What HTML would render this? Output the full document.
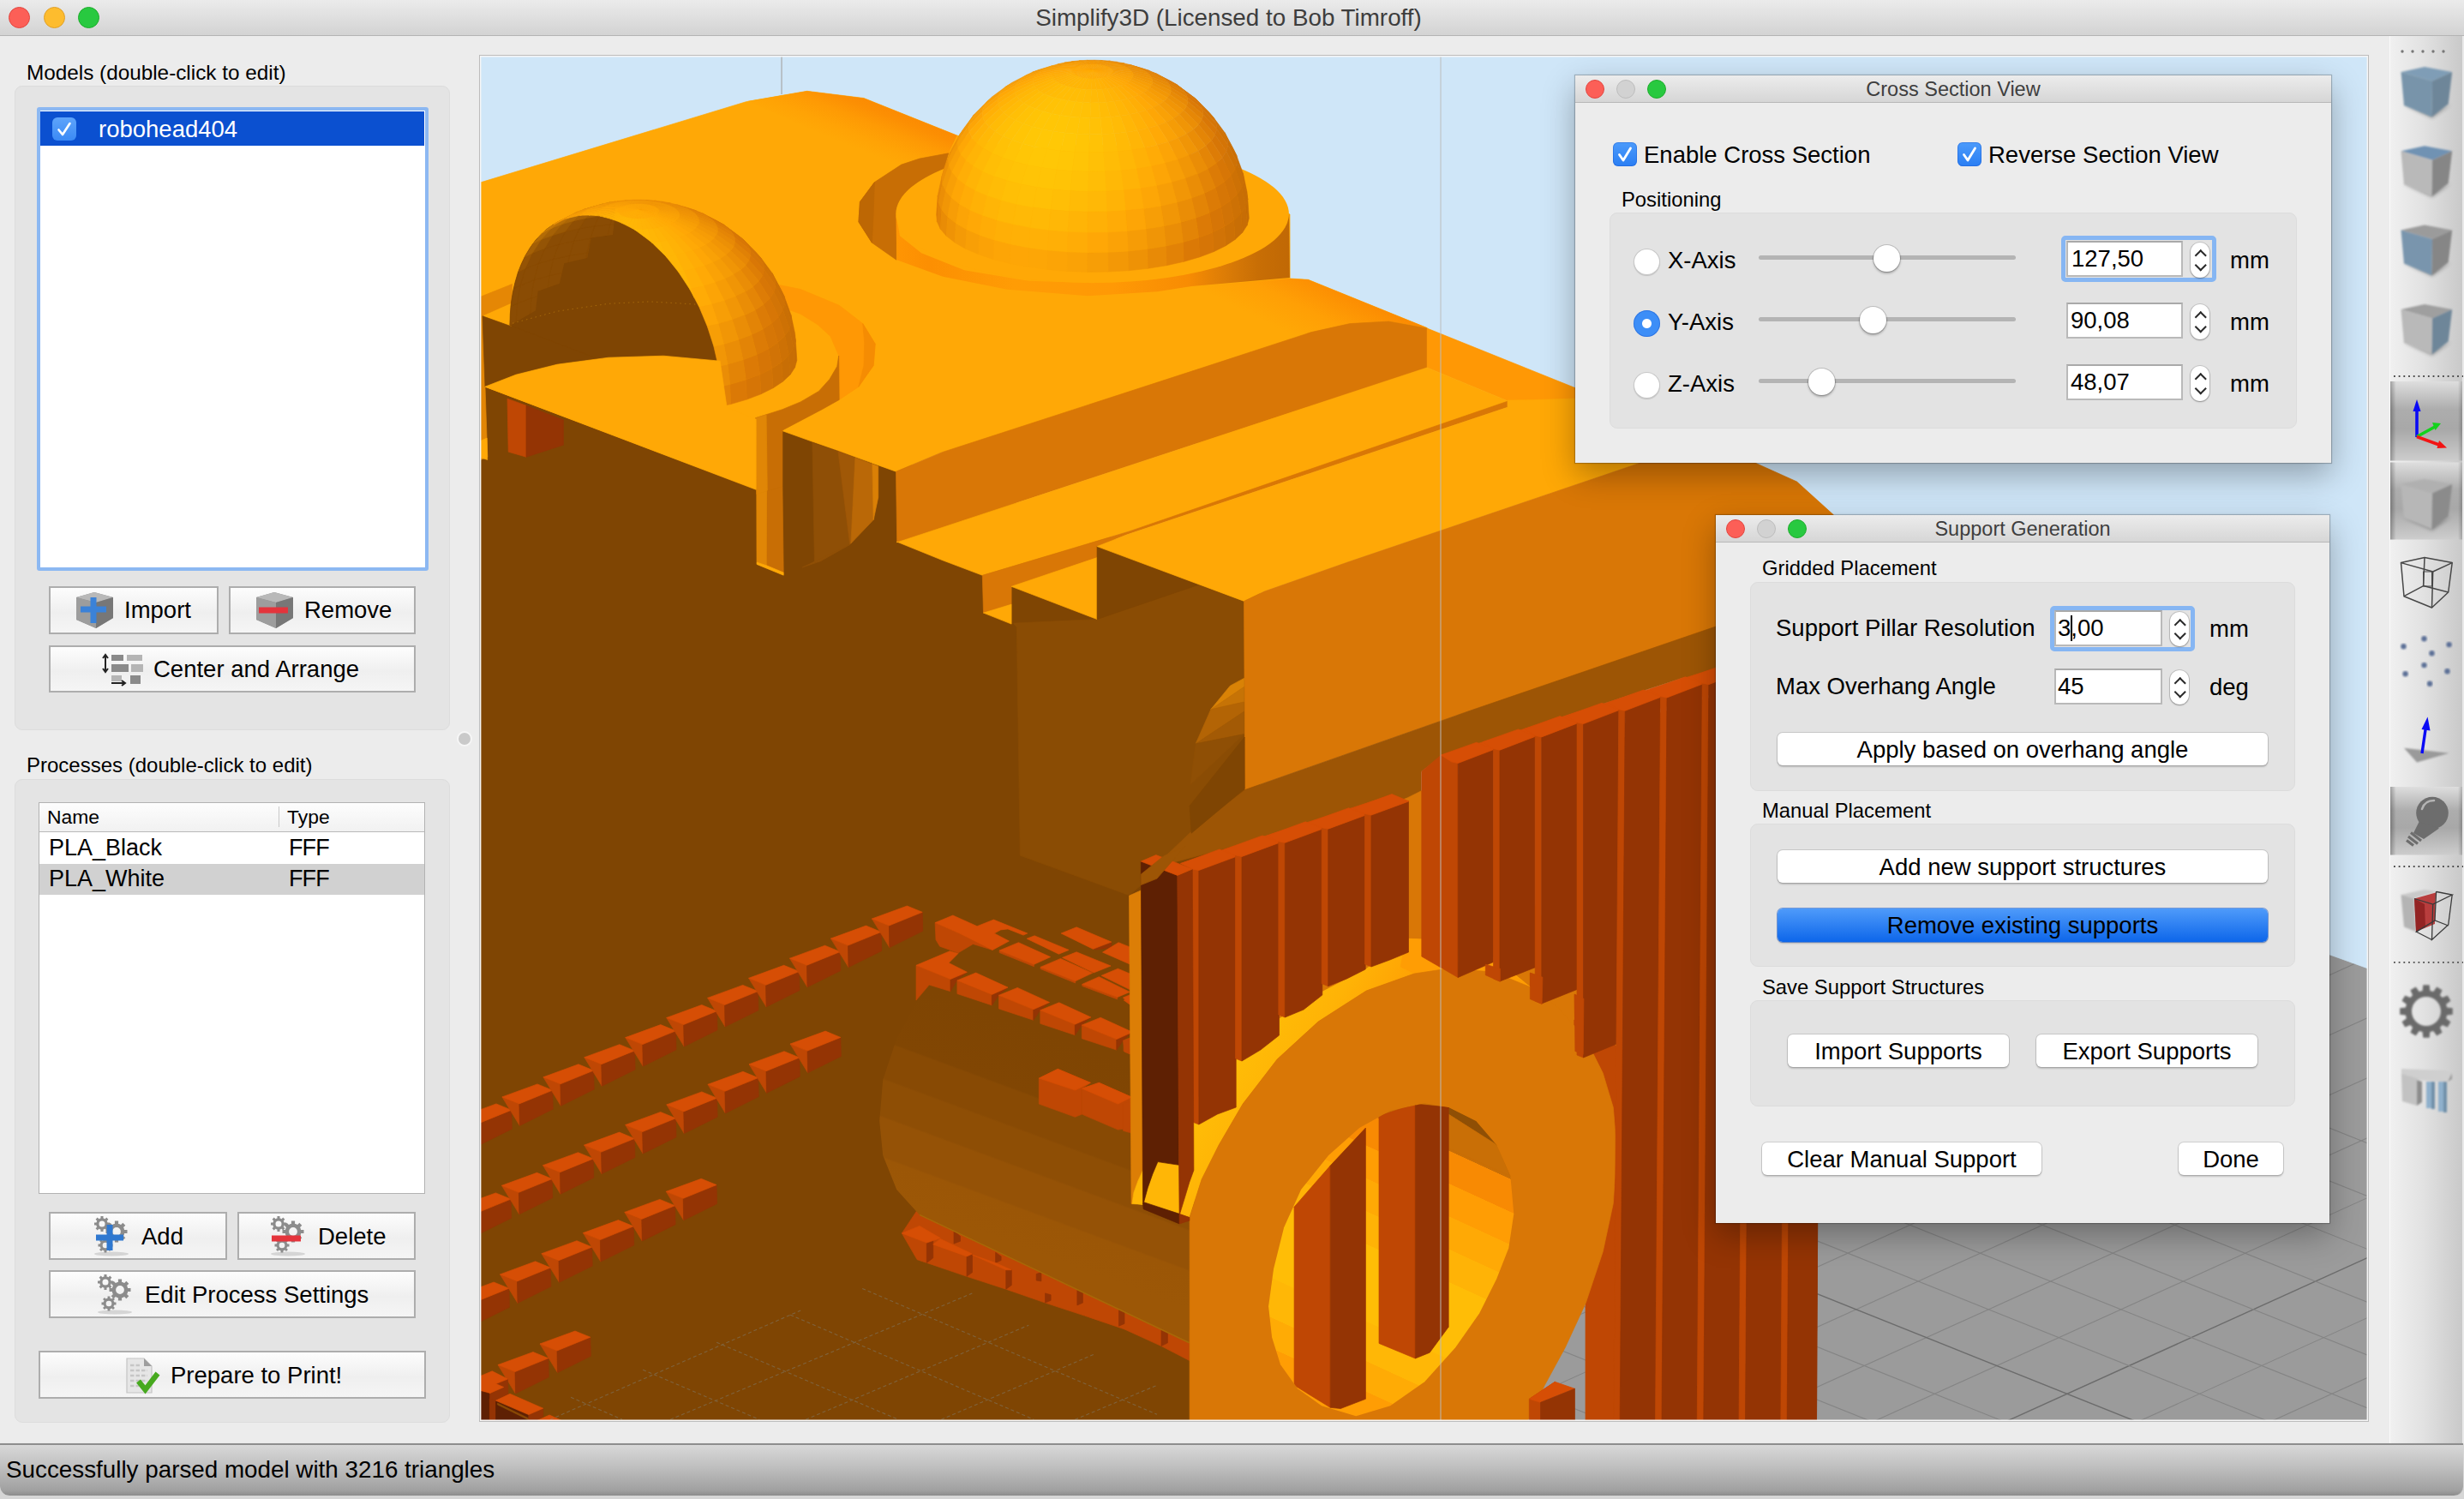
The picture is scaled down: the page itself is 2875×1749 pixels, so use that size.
<!DOCTYPE html>
<html lang="en">
<head>
<meta charset="utf-8">
<title>Simplify3D (Licensed to Bob Timroff)</title>
<style>
*{box-sizing:border-box;margin:0;padding:0}
html{width:2875px;height:1749px;overflow:hidden;background:#d6d6d6}
body{width:2875px;height:1745px;overflow:visible;background:#ececec;border-radius:0 0 11px 11px}
body{font-family:"Liberation Sans",sans-serif;color:#000;position:relative;font-size:27px}
.abs{position:absolute}
.t{position:absolute;white-space:nowrap;line-height:1}
#titlebar{position:absolute;left:0;top:0;width:2875px;height:42px;background:linear-gradient(#ebebeb,#d3d3d3);border-bottom:1px solid #b4b4b4}
.tl{position:absolute;border-radius:50%}
.tl.r{background:#fc5f57;border:1px solid #e2463f}
.tl.y{background:#fdbc2e;border:1px solid #e0a028}
.tl.g{background:#28c940;border:1px solid #1dad2b}
.tl.n{background:#d2d2d2;border:1px solid #bdbdbd}
.group{position:absolute;background:#e4e4e4;border-radius:9px;border:1px solid #dcdcdc}
.qbtn{position:absolute;border:2px solid #adadad;background:linear-gradient(#fdfdfd,#efefef 55%,#f5f5f5);font-size:27.5px;white-space:nowrap}
.qbtn svg{filter:blur(.7px);margin-top:-2.5px;margin-left:-1px}
.qbtn .lb{margin-top:-1.5px;margin-left:-1px}
.qbtn .lb{position:absolute;line-height:1}
.mbtn{position:absolute;background:#fff;border-radius:6px;box-shadow:0 0 0 1px rgba(0,0,0,.12),0 2px 2px rgba(0,0,0,.18);font-size:27.5px;text-align:center;white-space:nowrap}
.mbtn.blue{background:linear-gradient(#4f9bfa,#0d66ea);box-shadow:0 0 0 1px rgba(10,80,200,.5),0 2px 2px rgba(0,0,0,.18);color:#000}
.win{position:absolute;background:#ececec;box-shadow:0 0 1px 1px rgba(0,0,0,.22),0 14px 36px rgba(0,0,0,.30)}
.wtitle{position:absolute;left:0;top:0;right:0;height:32px;background:linear-gradient(#ececec,#d6d6d6);border-bottom:1px solid #b8b8b8;text-align:center;font-size:23.5px;color:#3e3e3e}
.field{position:absolute;background:#fff;border:2px solid #b9b9b9;border-top-color:#a9a9a9;font-size:27.5px}
.focus{position:absolute;border:5px solid #86b6f3;border-radius:5px}
.step{position:absolute;background:#fff;border-radius:11px;box-shadow:0 0 0 1px rgba(0,0,0,.13),0 1px 2px rgba(0,0,0,.28)}
.step:before,.step:after{content:'';position:absolute;left:6.5px;width:7.5px;height:7.5px;border-left:2.6px solid #2a2a2a;border-top:2.6px solid #2a2a2a}
.step:before{top:10px;transform:rotate(45deg)}
.step:after{bottom:10px;transform:rotate(225deg)}
.radio{position:absolute;width:31px;height:31px;border-radius:50%;background:#fff;box-shadow:inset 0 0 0 1px rgba(0,0,0,.22),0 1px 1px rgba(0,0,0,.15)}
.radio.on{background:radial-gradient(circle,#fff 0 5px,#3d8ef7 6px);box-shadow:inset 0 0 0 1px rgba(20,80,200,.4)}
.track{position:absolute;height:5px;border-radius:3px;background:#b4b4b4}
.knob{position:absolute;width:31px;height:31px;border-radius:50%;background:#fff;box-shadow:0 0 0 1px rgba(0,0,0,.16),0 2px 3px rgba(0,0,0,.3)}
.chk{position:absolute;width:28px;height:28px;border-radius:6px;background:linear-gradient(#4c9bfb,#2a7ef3);box-shadow:inset 0 0 0 1px rgba(20,80,200,.35)}
#vp{position:absolute;left:559px;top:64px;width:2205px;height:1595px;border:1px solid #bcbcbc;background:#cfe6f8;overflow:hidden}
#vp:after{content:'';position:absolute;left:0;top:0;right:0;bottom:0;box-shadow:inset 0 0 0 1.4px #f6f6f6;pointer-events:none}
#toolbar{position:absolute;left:2788px;top:42px;width:85px;height:1642px;background:linear-gradient(90deg,#f0f0f0,#e2e2e2 45%,#c9c9c9);border-left:1px solid #fafafa}
.pressed{position:absolute;left:2790px;width:83px;background:linear-gradient(#e2e2e2,#ababab 45%,#a6a6a6 60%,#d2d2d2)}
.dots{position:absolute;left:2794px;width:80px;height:0;border-top:3px dotted #555}
#status{position:absolute;left:0;top:1684px;width:2874px;height:61px;background:linear-gradient(#d8d8d8,#bebebe 45%,#a0a0a0 90%,#8c8c8c);border-top:2px solid #8e8e8e;border-radius:0 0 11px 11px;box-shadow:0 1px 2px rgba(0,0,0,.35)}
</style>
</head>
<body>
<!-- ===== main title bar ===== -->
<div id="titlebar">
  <div class="tl r" style="left:10px;top:8px;width:25px;height:25px"></div>
  <div class="tl y" style="left:51px;top:8px;width:25px;height:25px"></div>
  <div class="tl g" style="left:91px;top:8px;width:25px;height:25px"></div>
  <div class="t" style="left:0;width:2867px;text-align:center;top:7px;font-size:27.8px;color:#3d3d3d">Simplify3D (Licensed to Bob Timroff)</div>
</div>

<!-- ===== left panel: Models ===== -->
<div class="t" style="left:31px;top:73px;font-size:24.3px">Models (double-click to edit)</div>
<div class="group" style="left:17px;top:100px;width:508px;height:752px"></div>
<div class="abs" style="left:43px;top:125px;width:457px;height:541px;background:#fff;border:4px solid #8cb8f2;border-radius:3px"></div>
<div class="abs" style="left:47px;top:130px;width:448px;height:40px;background:#0b50d0"></div>
<div class="abs" style="left:61px;top:137px;width:28px;height:27px;border-radius:6px;background:linear-gradient(#5ea4fb,#3b8af5)">
  <svg width="28" height="27" viewBox="0 0 28 27" style="position:absolute;left:0;top:0"><path d="M7.5 14.5 L12 20 L20.5 7" fill="none" stroke="#fff" stroke-width="2.6" stroke-linecap="round" stroke-linejoin="round"/></svg>
</div>
<div class="t" style="left:115px;top:137px;font-size:27.5px;color:#fff">robohead404</div>

<div class="qbtn" style="left:57px;top:684px;width:198px;height:56px">
  <svg class="abs" style="left:28px;top:3px" width="48" height="48" viewBox="0 0 48 48"><polygon points="3,10 24,4 46,10 46,34 26,46 3,36" fill="#8e8e8e"/><polygon points="3,10 24,4 46,10 26,16" fill="#b9b9b9"/><polygon points="3,10 26,16 26,46 3,36" fill="#9d9d9d"/><polygon points="26,16 46,10 46,34 26,46" fill="#777"/><path d="M8 24h30M23 10v30" stroke="#3b82d8" stroke-width="7"/></svg>
  <span class="lb" style="left:87px;top:13px">Import</span>
</div>
<div class="qbtn" style="left:267px;top:684px;width:218px;height:56px">
  <svg class="abs" style="left:28px;top:3px" width="48" height="48" viewBox="0 0 48 48"><polygon points="3,10 24,4 46,10 46,34 26,46 3,36" fill="#8e8e8e"/><polygon points="3,10 24,4 46,10 26,16" fill="#b9b9b9"/><polygon points="3,10 26,16 26,46 3,36" fill="#9d9d9d"/><polygon points="26,16 46,10 46,34 26,46" fill="#777"/><path d="M6 25h34" stroke="#e4343c" stroke-width="7"/></svg>
  <span class="lb" style="left:87px;top:13px">Remove</span>
</div>
<div class="qbtn" style="left:57px;top:753px;width:428px;height:55px">
  <svg class="abs" style="left:60px;top:8px" width="52" height="40" viewBox="0 0 52 40"><g fill="#8a8a8a"><rect x="12" y="3" width="14" height="7"/><rect x="30" y="3" width="18" height="7" fill="#b5b5b5"/><rect x="12" y="14" width="20" height="9"/><rect x="35" y="14" width="14" height="9" fill="#b5b5b5"/><rect x="12" y="27" width="12" height="7" fill="#b5b5b5"/><rect x="34" y="27" width="12" height="10"/></g><path d="M5 3v20M2 7l3-4 3 4M2 19l3 4 3-4M12 36h16M24 33l4 3-4 3" stroke="#222" stroke-width="2" fill="none"/></svg>
  <span class="lb" style="left:121px;top:13px">Center and Arrange</span>
</div>

<!-- splitter handle -->
<div class="abs" style="left:535px;top:855px;width:14px;height:14px;border-radius:50%;background:#c9c9c9;box-shadow:0 0 0 2px #f6f6f6"></div>

<!-- ===== left panel: Processes ===== -->
<div class="t" style="left:31px;top:881px;font-size:24px">Processes (double-click to edit)</div>
<div class="group" style="left:17px;top:909px;width:508px;height:751px"></div>
<div class="abs" style="left:45px;top:936px;width:451px;height:457px;background:#fff;border:1px solid #b2b2b2"></div>
<div class="abs" style="left:46px;top:937px;width:449px;height:34px;background:linear-gradient(#fdfdfd,#f1f1f1);border-bottom:1px solid #b9b9b9"></div>
<div class="abs" style="left:325px;top:941px;width:1px;height:24px;background:#c9c9c9"></div>
<div class="t" style="left:55px;top:942px;font-size:22.9px">Name</div>
<div class="t" style="left:335px;top:942px;font-size:22.9px">Type</div>
<div class="t" style="left:57px;top:976px;font-size:27px">PLA_Black</div>
<div class="t" style="left:337px;top:976px;font-size:27px;letter-spacing:-.9px">FFF</div>
<div class="abs" style="left:46px;top:1008px;width:449px;height:36px;background:#d1d1d1"></div>
<div class="t" style="left:57px;top:1012px;font-size:27px">PLA_White</div>
<div class="t" style="left:337px;top:1012px;font-size:27px;letter-spacing:-.9px">FFF</div>

<div class="qbtn" style="left:57px;top:1414px;width:208px;height:56px">
  <svg class="abs" style="left:48px;top:3px" width="48" height="50" viewBox="0 0 48 50"><use href="#gears"/><path d="M6 27h32M22 12v30" stroke="#2f78d0" stroke-width="7"/></svg>
  <span class="lb" style="left:107px;top:14px">Add</span>
</div>
<div class="qbtn" style="left:277px;top:1414px;width:208px;height:56px">
  <svg class="abs" style="left:34px;top:3px" width="48" height="50" viewBox="0 0 48 50"><use href="#gears"/><path d="M5 28h34" stroke="#e4343c" stroke-width="7"/></svg>
  <span class="lb" style="left:93px;top:14px">Delete</span>
</div>
<div class="qbtn" style="left:57px;top:1482px;width:428px;height:56px">
  <svg class="abs" style="left:52px;top:3px" width="48" height="50" viewBox="0 0 48 50"><use href="#gears"/></svg>
  <span class="lb" style="left:111px;top:14px">Edit Process Settings</span>
</div>
<div class="qbtn" style="left:45px;top:1576px;width:452px;height:56px">
  <svg class="abs" style="left:96px;top:2px" width="46" height="52" viewBox="0 0 46 52"><path d="M6 7h20l9 9v31H6z" fill="#e6e6e6" stroke="#c4c4c4" stroke-width="1.2"/><path d="M26 7v9h9z" fill="#9e9e9e"/><path d="M10 15h12M10 21h20M10 27h20M10 33h20M10 39h10" stroke="#c6c6c6" stroke-width="2.5" stroke-dasharray="4.5 2"/><path d="M19.5 33.5l8 10L42 24.5" fill="none" stroke="#47a91f" stroke-width="6.2" stroke-linejoin="miter"/></svg>
  <span class="lb" style="left:153px;top:14px">Prepare to Print!</span>
</div>

<svg width="0" height="0" style="position:absolute"><defs>
<g id="gear1"><circle r="7.2" fill="none" stroke="#8c8c8c" stroke-width="4.6"/><g stroke="#8c8c8c" stroke-width="4.2"><path d="M0 -12.5V-8M0 12.5V8M-12.5 0H-8M12.5 0H8M-8.8 -8.8L-5.8 -5.8M8.8 8.8L5.8 5.8M-8.8 8.8L-5.8 5.8M8.8 -8.8L5.8 -5.8"/></g></g>
<g id="gears"><ellipse cx="24" cy="46" rx="20" ry="2.5" fill="#d5d5d5"/><use href="#gear1" transform="translate(13,11) scale(.72)"/><use href="#gear1" transform="translate(30,20)"/><use href="#gear1" transform="translate(17,36) scale(.68)"/></g>
</defs></svg>

<!-- ===== viewport ===== -->
<div id="vp">
<svg width="2203" height="1593" viewBox="560 65 2203 1593" shape-rendering="geometricPrecision" style="position:absolute;left:0;top:0">
<polygon fill="#9b9b9b" stroke="#9b9b9b" stroke-width=".7" stroke-linejoin="round" points="1700.0,747.0 2763.0,1130.0 2763.0,1658.0 1700.0,1658.0"/>
<g stroke="#848484" stroke-width="1.1">
<line x1="-324.1" y1="1026.3" x2="2075.9" y2="1986.3"/>
<line x1="275.9" y1="2034.0" x2="2675.9" y2="946.8"/>
<line x1="-169.6" y1="1026.3" x2="2230.4" y2="1986.3"/>
<line x1="430.4" y1="2034.0" x2="2830.4" y2="946.8"/>
<line x1="-15.1" y1="1026.3" x2="2384.9" y2="1986.3"/>
<line x1="584.9" y1="2034.0" x2="2984.9" y2="946.8"/>
<line x1="139.4" y1="1026.3" x2="2539.4" y2="1986.3"/>
<line x1="739.4" y1="2034.0" x2="3139.4" y2="946.8"/>
<line x1="293.9" y1="1026.3" x2="2693.9" y2="1986.3"/>
<line x1="893.9" y1="2034.0" x2="3293.9" y2="946.8"/>
<line x1="448.4" y1="1026.3" x2="2848.4" y2="1986.3"/>
<line x1="1048.4" y1="2034.0" x2="3448.4" y2="946.8"/>
<line x1="602.9" y1="1026.3" x2="3002.9" y2="1986.3"/>
<line x1="1202.9" y1="2034.0" x2="3602.9" y2="946.8"/>
<line x1="757.4" y1="1026.3" x2="3157.4" y2="1986.3"/>
<line x1="1357.4" y1="2034.0" x2="3757.4" y2="946.8"/>
<line x1="911.9" y1="1026.3" x2="3311.9" y2="1986.3" stroke="#6c6c6c" stroke-width="1.4"/>
<line x1="1511.9" y1="2034.0" x2="3911.9" y2="946.8" stroke="#6c6c6c" stroke-width="1.4"/>
<line x1="1066.4" y1="1026.3" x2="3466.4" y2="1986.3"/>
<line x1="1666.4" y1="2034.0" x2="4066.4" y2="946.8"/>
<line x1="1220.9" y1="1026.3" x2="3620.9" y2="1986.3"/>
<line x1="1820.9" y1="2034.0" x2="4220.9" y2="946.8"/>
<line x1="1375.4" y1="1026.3" x2="3775.4" y2="1986.3"/>
<line x1="1975.4" y1="2034.0" x2="4375.4" y2="946.8"/>
<line x1="1529.9" y1="1026.3" x2="3929.9" y2="1986.3"/>
<line x1="2129.9" y1="2034.0" x2="4529.9" y2="946.8"/>
<line x1="1684.4" y1="1026.3" x2="4084.4" y2="1986.3"/>
<line x1="2284.4" y1="2034.0" x2="4684.4" y2="946.8"/>
<line x1="1838.9" y1="1026.3" x2="4238.9" y2="1986.3"/>
<line x1="2438.9" y1="2034.0" x2="4838.9" y2="946.8"/>
<line x1="1993.4" y1="1026.3" x2="4393.4" y2="1986.3"/>
<line x1="2593.4" y1="2034.0" x2="4993.4" y2="946.8"/>
</g>
<polygon fill="#cfe6f8" stroke="#cfe6f8" stroke-width=".7" stroke-linejoin="round" points="1700.0,500.0 2763.0,500.0 2763.0,1130.0 1700.0,747.0"/>
<polygon fill="#7f4503" stroke="#7f4503" stroke-width=".7" stroke-linejoin="round" points="560.0,360.0 1470.0,690.0 1470.0,1658.0 560.0,1658.0"/>
<polygon fill="#8a4c04" stroke="#8a4c04" stroke-width=".7" stroke-linejoin="round" points="1182.6,727.1 1280.1,722.6 1397.7,682.6 1451.5,702.1 1451.5,921.5 1390.2,970.3 1332.0,1032.2 1318.0,1044.2 1316.4,1044.2 1190.3,998.2 1186.3,732.1"/>
<polygon fill="#ffa806" stroke="#ffa806" stroke-width=".7" stroke-linejoin="round" points="560.0,213.1 870.3,118.8 941.6,106.3 1007.9,114.5 1116.7,158.1 1300.0,200.0 1505.0,250.0 1505.1,325.0 1526.4,326.3 1665.2,382.6 1665.2,428.9 1400.0,516.4 1099.3,527.7 1045.5,550.2 912.9,502.7 881.6,570.2 566.0,451.2 564.0,368.4 560.8,368.4"/>
<defs><linearGradient id="gEdge" gradientUnits="userSpaceOnUse" x1="1010" y1="112" x2="987.3" y2="168.7"><stop offset="0" stop-color="#fb8a02"/><stop offset=".2" stop-color="#fc8f03"/><stop offset=".45" stop-color="#fe9a04"/><stop offset=".75" stop-color="#ffa305"/><stop offset="1" stop-color="#ffa806"/></linearGradient></defs>
<polygon fill="url(#gEdge)" points="941.6,106.3 1007.9,114.5 1116.7,158.1 1106.7,178.8 1057.4,200.1 984.3,168.1 872.3,118.1"/>
<polygon fill="#e28606" stroke="#e28606" stroke-width=".7" stroke-linejoin="round" points="560.8,368.4 564.0,368.4 566.0,451.2 568.8,533.2 560.8,536.4"/>
<polygon fill="#ffa806" stroke="#ffa806" stroke-width=".7" stroke-linejoin="round" points="560.5,514.5 568.1,511.1 568.7,536.4 560.5,533.8"/>
<defs><linearGradient id="gRidge" gradientUnits="userSpaceOnUse" x1="1560" y1="330" x2="1525" y2="400"><stop offset="0" stop-color="#fb8a02"/><stop offset=".55" stop-color="#ff9f05"/><stop offset="1" stop-color="#ffa806"/></linearGradient></defs>
<polygon fill="url(#gRidge)" points="1400.0,333.8 1505.1,325.0 1526.4,326.3 1665.2,382.6 1620.2,375.1 1575.1,377.6 1530.1,387.6 1400.0,430.1"/>
<polygon fill="#d97706" stroke="#d97706" stroke-width=".7" stroke-linejoin="round" points="1045.5,550.2 1099.3,527.7 1400.0,430.1 1530.1,387.6 1575.1,377.6 1620.2,375.1 1665.2,383.1 1665.2,428.9 1046.7,632.8"/>
<polygon fill="#ff9805" stroke="#ff9805" stroke-width=".7" stroke-linejoin="round" points="1665.2,383.1 1837.9,452.6 2047.9,540.1 1838.0,540.1 1837.9,465.6 1790.3,467.7 1759.0,467.7 1665.2,428.9"/>
<polygon fill="#ffa806" stroke="#ffa806" stroke-width=".7" stroke-linejoin="round" points="1046.7,632.8 1665.2,428.9 1759.0,467.7 1759.0,474.7 1317.7,620.0 1146.3,671.3 1100.0,653.8 1046.2,632.0"/>
<polygon fill="#d97706" stroke="#d97706" stroke-width=".7" stroke-linejoin="round" points="1146.3,671.3 1317.7,620.0 1759.0,468.2 1759.0,475.2 1315.2,623.8 1280.1,637.6 1280.1,651.3 1180.1,684.3 1180.1,705.1 1147.5,715.1"/>
<polygon fill="#ffa806" stroke="#ffa806" stroke-width=".7" stroke-linejoin="round" points="1147.5,715.1 1180.1,705.1 1180.1,728.1"/>
<polygon fill="#ffa806" stroke="#ffa806" stroke-width=".7" stroke-linejoin="round" points="1180.1,684.3 1280.1,650.6 1280.1,722.6"/>
<polygon fill="#7f4503" stroke="#7f4503" stroke-width=".7" stroke-linejoin="round" points="1280.1,637.6 1397.7,682.6 1280.1,722.6"/>
<polygon fill="#ffa806" stroke="#ffa806" stroke-width=".7" stroke-linejoin="round" points="1280.1,637.6 1315.2,623.8 1759.0,475.2 1759.0,467.1 1790.3,466.6 1837.9,465.1 1838.0,540.1 1913.9,540.1 1575.1,655.1 1475.3,690.1 1451.5,701.4"/>
<polygon fill="#d97706" stroke="#d97706" stroke-width=".7" stroke-linejoin="round" points="1451.5,701.4 1475.3,690.1 1575.1,655.1 1913.9,540.1 2047.9,540.1 2096.6,562.0 2139.2,600.6 2185.8,663.5 2250.0,1000.0 2002.0,735.0 1716.0,829.0 1452.8,921.5"/>
<polygon fill="#9d5505" stroke="#9d5505" stroke-width=".7" stroke-linejoin="round" points="1452.8,921.5 1716.0,829.0 2002.0,731.0 2002.0,790.0 1966.4,790.1 1682.2,882.1 1658.2,900.2 1658.2,932.2 1622.2,938.2 1332.0,1016.2 1332.0,1032.2 1346.0,1012.2 1390.1,970.2"/>
<polygon fill="#d98206" stroke="#d98206" stroke-width=".7" stroke-linejoin="round" points="1435.3,800.2 1451.5,791.4 1451.5,801.4 1412.8,827.7"/>
<polygon fill="#c67306" stroke="#c67306" stroke-width=".7" stroke-linejoin="round" points="1412.8,827.7 1451.5,801.4 1451.5,819.0"/>
<polygon fill="#b36405" stroke="#b36405" stroke-width=".7" stroke-linejoin="round" points="1412.8,827.7 1451.5,819.0 1451.5,830.2 1395.2,867.7"/>
<polygon fill="#a35a05" stroke="#a35a05" stroke-width=".7" stroke-linejoin="round" points="1395.2,867.7 1451.5,830.2 1451.5,856.5"/>
<polygon fill="#8f4f05" stroke="#8f4f05" stroke-width=".7" stroke-linejoin="round" points="1395.2,867.7 1451.5,856.5 1389.0,915.3"/>
<polygon fill="#7f4503" stroke="#7f4503" stroke-width=".7" stroke-linejoin="round" points="1388.1,940.2 1452.1,860.1 1452.1,920.2 1390.1,972.2"/>
<polygon fill="#c86e05" stroke="#c86e05" stroke-width=".7" stroke-linejoin="round" points="1106.7,178.8 1072.9,185.1 1051.7,192.1 1020.4,212.6 1003.4,235.6 1001.9,258.9 1017.4,283.2 1045.9,303.2 1045.9,250.2 1057.9,227.6 1075.4,213.9 1100.4,200.1"/>
<polygon fill="#bd6704" stroke="#bd6704" stroke-width=".7" stroke-linejoin="round" points="1020.4,212.6 1003.4,235.6 1001.9,258.9 1017.4,283.2 1019.1,250.2"/>
<defs><linearGradient id="gPed" gradientUnits="userSpaceOnUse" x1="1046" y1="0" x2="1505" y2="0"><stop offset="0" stop-color="#ff9503"/><stop offset=".08" stop-color="#fc8f02"/><stop offset=".3" stop-color="#ff9c05"/><stop offset=".55" stop-color="#ff9905"/><stop offset=".74" stop-color="#f88c03"/><stop offset=".80" stop-color="#e68205"/><stop offset=".86" stop-color="#d67806"/><stop offset=".92" stop-color="#c86e05"/><stop offset="1" stop-color="#c06805"/></linearGradient></defs>
<polygon fill="url(#gPed)" points="1045.5,250.2 1050.0,275.2 1075.1,295.2 1125.1,315.2 1200.2,327.7 1275.2,330.2 1350.3,325.2 1425.3,310.2 1475.4,285.2 1500.4,262.7 1504.2,248.9 1504.9,324.0 1390.3,334.0 1350.3,340.2 1269.0,345.2 1175.1,337.7 1100.1,322.7 1046.3,303.2"/>
<ellipse cx="1274.6" cy="249.6" rx="229.3" ry="80.5" fill="#ffa806"/>
<polygon fill="#d37406" stroke="#d37406" stroke-width=".6" points="1395.8,115.8 1388.8,110.4 1373.0,98.7 1379.0,103.4"/>
<polygon fill="#de7d06" stroke="#de7d06" stroke-width=".6" points="1341.6,82.7 1332.9,79.8 1319.3,75.8 1326.0,78.0"/>
<polygon fill="#ec8f06" stroke="#ec8f06" stroke-width=".6" points="1123.8,150.9 1119.1,158.1 1132.2,140.3 1136.5,133.7"/>
<polygon fill="#c86e05" stroke="#c86e05" stroke-width=".6" points="1442.8,181.5 1439.2,173.7 1428.9,154.6 1432.2,161.8"/>
<polygon fill="#d87606" stroke="#d87606" stroke-width=".6" points="1373.0,98.7 1365.3,94.3 1349.2,86.0 1355.5,89.6"/>
<polygon fill="#e58606" stroke="#e58606" stroke-width=".6" points="1101.1,198.1 1098.9,206.3 1106.5,185.2 1108.7,177.4"/>
<polygon fill="#d07205" stroke="#d07205" stroke-width=".6" points="1416.0,137.1 1410.5,130.6 1395.8,115.8 1400.7,121.6"/>
<polygon fill="#ef9406" stroke="#ef9406" stroke-width=".6" points="1212.7,81.2 1204.5,84.3 1221.1,79.2 1227.3,76.9"/>
<polygon fill="#e98c06" stroke="#e98c06" stroke-width=".6" points="1277.3,70.2 1268.2,70.3 1270.4,71.1 1276.6,71.1"/>
<polygon fill="#e88b06" stroke="#e88b06" stroke-width=".6" points="1286.4,70.5 1277.3,70.2 1276.6,71.1 1282.7,71.3"/>
<polygon fill="#c66c05" stroke="#c66c05" stroke-width=".6" points="1455.8,232.4 1455.0,224.0 1450.4,202.3 1451.1,210.5"/>
<polygon fill="#eb8e06" stroke="#eb8e06" stroke-width=".6" points="1268.2,70.3 1259.2,70.8 1264.3,71.5 1270.4,71.1"/>
<polygon fill="#e88a06" stroke="#e88a06" stroke-width=".6" points="1295.3,71.2 1286.4,70.5 1282.7,71.3 1288.7,71.8"/>
<polygon fill="#ec9006" stroke="#ec9006" stroke-width=".6" points="1259.2,70.8 1250.4,71.7 1258.4,72.1 1264.3,71.5"/>
<polygon fill="#f19606" stroke="#f19606" stroke-width=".6" points="1157.5,113.0 1151.6,118.6 1168.7,105.8 1173.9,100.9"/>
<polygon fill="#f29706" stroke="#f29706" stroke-width=".6" points="1180.7,96.4 1173.9,100.9 1191.9,91.4 1197.6,87.7"/>
<polygon fill="#dc7b06" stroke="#dc7b06" stroke-width=".6" points="1092.7,250.3 1093.4,258.8 1095.0,236.5 1094.2,228.1"/>
<polygon fill="#e78a06" stroke="#e78a06" stroke-width=".6" points="1303.8,72.4 1295.3,71.2 1288.7,71.8 1294.5,72.5"/>
<polygon fill="#df7f06" stroke="#df7f06" stroke-width=".6" points="1349.2,86.0 1341.6,82.7 1326.0,78.0 1331.8,80.6"/>
<polygon fill="#ee9206" stroke="#ee9206" stroke-width=".6" points="1250.4,71.7 1242.1,73.1 1252.8,73.0 1258.4,72.1"/>
<polygon fill="#cd7005" stroke="#cd7005" stroke-width=".6" points="1432.2,161.8 1428.9,154.6 1416.0,137.1 1419.1,143.7"/>
<polygon fill="#e78906" stroke="#e78906" stroke-width=".6" points="1311.9,73.9 1303.8,72.4 1294.5,72.5 1300.0,73.6"/>
<polygon fill="#ec8f06" stroke="#ec8f06" stroke-width=".6" points="1108.7,177.4 1106.5,185.2 1117.1,165.4 1119.1,158.1"/>
<polygon fill="#f29706" stroke="#f29706" stroke-width=".6" points="1136.5,133.7 1132.2,140.3 1147.7,124.4 1151.6,118.6"/>
<polygon fill="#f39806" stroke="#f39806" stroke-width=".6" points="1204.5,84.3 1197.6,87.7 1215.7,81.9 1221.1,79.2"/>
<polygon fill="#d97806" stroke="#d97806" stroke-width=".6" points="1379.0,103.4 1373.0,98.7 1355.5,89.6 1360.4,93.5"/>
<polygon fill="#f09506" stroke="#f09506" stroke-width=".6" points="1242.1,73.1 1234.4,74.8 1247.5,74.2 1252.8,73.0"/>
<polygon fill="#c76d05" stroke="#c76d05" stroke-width=".6" points="1451.1,210.5 1450.4,202.3 1442.8,181.5 1443.5,189.3"/>
<polygon fill="#d57506" stroke="#d57506" stroke-width=".6" points="1400.7,121.6 1395.8,115.8 1379.0,103.4 1383.2,108.3"/>
<polygon fill="#e88a06" stroke="#e88a06" stroke-width=".6" points="1319.3,75.8 1311.9,73.9 1300.0,73.6 1305.0,74.9"/>
<polygon fill="#e48606" stroke="#e48606" stroke-width=".6" points="1094.2,228.1 1095.0,236.5 1099.6,214.5 1098.9,206.3"/>
<polygon fill="#e18106" stroke="#e18106" stroke-width=".6" points="1355.5,89.6 1349.2,86.0 1331.8,80.6 1336.6,83.3"/>
<polygon fill="#f39806" stroke="#f39806" stroke-width=".6" points="1234.4,74.8 1227.3,76.9 1242.7,75.6 1247.5,74.2"/>
<polygon fill="#f69c06" stroke="#f69c06" stroke-width=".6" points="1173.9,100.9 1168.7,105.8 1187.7,95.4 1191.9,91.4"/>
<polygon fill="#c56c05" stroke="#c56c05" stroke-width=".6" points="1455.0,263.1 1457.3,254.7 1455.8,232.4 1453.5,240.8"/>
<polygon fill="#e88b06" stroke="#e88b06" stroke-width=".6" points="1326.0,78.0 1319.3,75.8 1305.0,74.9 1309.5,76.4"/>
<polygon fill="#d27306" stroke="#d27306" stroke-width=".6" points="1419.1,143.7 1416.0,137.1 1400.7,121.6 1403.4,127.5"/>
<polygon fill="#f29706" stroke="#f29706" stroke-width=".6" points="1119.1,158.1 1117.1,165.4 1130.3,147.0 1132.2,140.3"/>
<polygon fill="#f69d06" stroke="#f69d06" stroke-width=".6" points="1197.6,87.7 1191.9,91.4 1211.4,84.7 1215.7,81.9"/>
<polygon fill="#f79d06" stroke="#f79d06" stroke-width=".6" points="1151.6,118.6 1147.7,124.4 1165.4,110.8 1168.7,105.8"/>
<polygon fill="#cb6f05" stroke="#cb6f05" stroke-width=".6" points="1443.5,189.3 1442.8,181.5 1432.2,161.8 1432.9,169.2"/>
<polygon fill="#f59b06" stroke="#f59b06" stroke-width=".6" points="1227.3,76.9 1221.1,79.2 1238.5,77.2 1242.7,75.6"/>
<polygon fill="#ec8f06" stroke="#ec8f06" stroke-width=".6" points="1098.9,206.3 1099.6,214.5 1107.2,193.1 1106.5,185.2"/>
<polygon fill="#dc7c06" stroke="#dc7c06" stroke-width=".6" points="1383.2,108.3 1379.0,103.4 1360.4,93.5 1363.8,97.5"/>
<polygon fill="#e98c06" stroke="#e98c06" stroke-width=".6" points="1331.8,80.6 1326.0,78.0 1309.5,76.4 1313.4,78.1"/>
<polygon fill="#e38406" stroke="#e38406" stroke-width=".6" points="1360.4,93.5 1355.5,89.6 1336.6,83.3 1340.4,86.3"/>
<polygon fill="#c76d05" stroke="#c76d05" stroke-width=".6" points="1453.5,240.8 1455.8,232.4 1451.1,210.5 1448.9,218.7"/>
<polygon fill="#f79e06" stroke="#f79e06" stroke-width=".6" points="1221.1,79.2 1215.7,81.9 1234.9,79.0 1238.5,77.2"/>
<polygon fill="#f79e06" stroke="#f79e06" stroke-width=".6" points="1132.2,140.3 1130.3,147.0 1146.1,130.4 1147.7,124.4"/>
<polygon fill="#f39806" stroke="#f39806" stroke-width=".6" points="1276.6,71.1 1270.4,71.1 1272.7,75.1 1275.8,75.0"/>
<polygon fill="#d87606" stroke="#d87606" stroke-width=".6" points="1403.4,127.5 1400.7,121.6 1383.2,108.3 1385.5,113.4"/>
<polygon fill="#f29706" stroke="#f29706" stroke-width=".6" points="1282.7,71.3 1276.6,71.1 1275.8,75.0 1278.9,75.1"/>
<polygon fill="#f39906" stroke="#f39906" stroke-width=".6" points="1270.4,71.1 1264.3,71.5 1269.6,75.2 1272.7,75.1"/>
<polygon fill="#f29706" stroke="#f29706" stroke-width=".6" points="1288.7,71.8 1282.7,71.3 1278.9,75.1 1281.9,75.4"/>
<polygon fill="#d07205" stroke="#d07205" stroke-width=".6" points="1432.9,169.2 1432.2,161.8 1419.1,143.7 1419.7,150.5"/>
<polygon fill="#faa106" stroke="#faa106" stroke-width=".6" points="1191.9,91.4 1187.7,95.4 1208.2,87.8 1211.4,84.7"/>
<polygon fill="#e38406" stroke="#e38406" stroke-width=".6" points="1093.4,258.8 1097.3,267.2 1098.8,244.8 1095.0,236.5"/>
<polygon fill="#f49a06" stroke="#f49a06" stroke-width=".6" points="1264.3,71.5 1258.4,72.1 1266.6,75.6 1269.6,75.2"/>
<polygon fill="#faa206" stroke="#faa206" stroke-width=".6" points="1168.7,105.8 1165.4,110.8 1185.0,99.6 1187.7,95.4"/>
<polygon fill="#f19606" stroke="#f19606" stroke-width=".6" points="1294.5,72.5 1288.7,71.8 1281.9,75.4 1284.8,75.8"/>
<polygon fill="#ea8e06" stroke="#ea8e06" stroke-width=".6" points="1336.6,83.3 1331.8,80.6 1313.4,78.1 1316.7,79.9"/>
<polygon fill="#f69c06" stroke="#f69c06" stroke-width=".6" points="1258.4,72.1 1252.8,73.0 1263.8,76.0 1266.6,75.6"/>
<polygon fill="#f39806" stroke="#f39806" stroke-width=".6" points="1106.5,185.2 1107.2,193.1 1117.8,172.7 1117.1,165.4"/>
<polygon fill="#f19606" stroke="#f19606" stroke-width=".6" points="1300.0,73.6 1294.5,72.5 1284.8,75.8 1287.6,76.3"/>
<polygon fill="#f79d06" stroke="#f79d06" stroke-width=".6" points="1252.8,73.0 1247.5,74.2 1261.1,76.6 1263.8,76.0"/>
<polygon fill="#faa206" stroke="#faa206" stroke-width=".6" points="1215.7,81.9 1211.4,84.7 1232.0,80.9 1234.9,79.0"/>
<polygon fill="#e68706" stroke="#e68706" stroke-width=".6" points="1363.8,97.5 1360.4,93.5 1340.4,86.3 1343.0,89.4"/>
<polygon fill="#f29706" stroke="#f29706" stroke-width=".6" points="1305.0,74.9 1300.0,73.6 1287.6,76.3 1290.1,77.0"/>
<polygon fill="#c96f05" stroke="#c96f05" stroke-width=".6" points="1448.9,218.7 1451.1,210.5 1443.5,189.3 1441.3,197.1"/>
<polygon fill="#fca406" stroke="#fca406" stroke-width=".6" points="1147.7,124.4 1146.1,130.4 1164.0,115.9 1165.4,110.8"/>
<polygon fill="#f89f06" stroke="#f89f06" stroke-width=".6" points="1247.5,74.2 1242.7,75.6 1258.7,77.3 1261.1,76.6"/>
<polygon fill="#e08006" stroke="#e08006" stroke-width=".6" points="1385.5,113.4 1383.2,108.3 1363.8,97.5 1365.8,101.7"/>
<polygon fill="#d57506" stroke="#d57506" stroke-width=".6" points="1419.7,150.5 1419.1,143.7 1403.4,127.5 1403.9,133.5"/>
<polygon fill="#ec9006" stroke="#ec9006" stroke-width=".6" points="1340.4,86.3 1336.6,83.3 1316.7,79.9 1319.2,81.9"/>
<polygon fill="#f29706" stroke="#f29706" stroke-width=".6" points="1309.5,76.4 1305.0,74.9 1290.1,77.0 1292.4,77.7"/>
<polygon fill="#eb8e06" stroke="#eb8e06" stroke-width=".6" points="1095.0,236.5 1098.8,244.8 1103.4,222.6 1099.6,214.5"/>
<polygon fill="#f89f06" stroke="#f89f06" stroke-width=".6" points="1117.1,165.4 1117.8,172.7 1130.9,153.7 1130.3,147.0"/>
<polygon fill="#faa106" stroke="#faa106" stroke-width=".6" points="1242.7,75.6 1238.5,77.2 1256.6,78.1 1258.7,77.3"/>
<polygon fill="#fda606" stroke="#fda606" stroke-width=".6" points="1187.7,95.4 1185.0,99.6 1206.1,90.9 1208.2,87.8"/>
<polygon fill="#fda506" stroke="#fda506" stroke-width=".6" points="1211.4,84.7 1208.2,87.8 1229.8,83.0 1232.0,80.9"/>
<polygon fill="#f29806" stroke="#f29806" stroke-width=".6" points="1313.4,78.1 1309.5,76.4 1292.4,77.7 1294.4,78.6"/>
<polygon fill="#c76d05" stroke="#c76d05" stroke-width=".6" points="1449.6,271.4 1455.0,263.1 1453.5,240.8 1448.1,249.0"/>
<polygon fill="#ce7105" stroke="#ce7105" stroke-width=".6" points="1441.3,197.1 1443.5,189.3 1432.9,169.2 1430.9,176.5"/>
<polygon fill="#fba306" stroke="#fba306" stroke-width=".6" points="1238.5,77.2 1234.9,79.0 1254.8,79.0 1256.6,78.1"/>
<polygon fill="#ffa806" stroke="#ffa806" stroke-width=".6" points="1165.4,110.8 1164.0,115.9 1183.8,103.8 1185.0,99.6"/>
<polygon fill="#dc7a06" stroke="#dc7a06" stroke-width=".6" points="1403.9,133.5 1403.4,127.5 1385.5,113.4 1386.0,118.6"/>
<polygon fill="#ee9206" stroke="#ee9206" stroke-width=".6" points="1343.0,89.4 1340.4,86.3 1319.2,81.9 1321.0,84.1"/>
<polygon fill="#e88b06" stroke="#e88b06" stroke-width=".6" points="1365.8,101.7 1363.8,97.5 1343.0,89.4 1344.5,92.6"/>
<polygon fill="#f39906" stroke="#f39906" stroke-width=".6" points="1316.7,79.9 1313.4,78.1 1294.4,78.6 1296.0,79.5"/>
<polygon fill="#fda506" stroke="#fda506" stroke-width=".6" points="1130.3,147.0 1130.9,153.7 1146.6,136.4 1146.1,130.4"/>
<polygon fill="#f29806" stroke="#f29806" stroke-width=".6" points="1099.6,214.5 1103.4,222.6 1110.8,200.8 1107.2,193.1"/>
<polygon fill="#fda506" stroke="#fda506" stroke-width=".6" points="1234.9,79.0 1232.0,80.9 1253.3,80.0 1254.8,79.0"/>
<polygon fill="#ffa806" stroke="#ffa806" stroke-width=".6" points="1208.2,87.8 1206.1,90.9 1228.4,85.1 1229.8,83.0"/>
<polygon fill="#d47406" stroke="#d47406" stroke-width=".6" points="1430.9,176.5 1432.9,169.2 1419.7,150.5 1417.8,157.2"/>
<polygon fill="#f49a06" stroke="#f49a06" stroke-width=".6" points="1319.2,81.9 1316.7,79.9 1296.0,79.5 1297.3,80.5"/>
<polygon fill="#c86e05" stroke="#c86e05" stroke-width=".6" points="1448.1,249.0 1453.5,240.8 1448.9,218.7 1443.6,226.7"/>
<polygon fill="#ffaa06" stroke="#ffaa06" stroke-width=".6" points="1185.0,99.6 1183.8,103.8 1205.2,94.2 1206.1,90.9"/>
<polygon fill="#e48506" stroke="#e48506" stroke-width=".6" points="1386.0,118.6 1385.5,113.4 1365.8,101.7 1366.2,106.0"/>
<polygon fill="#fea706" stroke="#fea706" stroke-width=".6" points="1232.0,80.9 1229.8,83.0 1252.2,81.0 1253.3,80.0"/>
<polygon fill="#ffaa06" stroke="#ffaa06" stroke-width=".6" points="1146.1,130.4 1146.6,136.4 1164.5,121.1 1164.0,115.9"/>
<polygon fill="#f09406" stroke="#f09406" stroke-width=".6" points="1344.5,92.6 1343.0,89.4 1321.0,84.1 1322.0,86.2"/>
<polygon fill="#e98c06" stroke="#e98c06" stroke-width=".6" points="1097.3,267.2 1104.2,275.3 1105.7,252.9 1098.8,244.8"/>
<polygon fill="#f9a006" stroke="#f9a006" stroke-width=".6" points="1107.2,193.1 1110.8,200.8 1121.1,180.0 1117.8,172.7"/>
<polygon fill="#fba306" stroke="#fba306" stroke-width=".6" points="1275.8,75.0 1272.7,75.1 1275.0,82.0 1275.0,82.0"/>
<polygon fill="#fba206" stroke="#fba206" stroke-width=".6" points="1278.9,75.1 1275.8,75.0 1275.0,82.0 1275.0,82.0"/>
<polygon fill="#fba306" stroke="#fba306" stroke-width=".6" points="1272.7,75.1 1269.6,75.2 1275.0,82.0 1275.0,82.0"/>
<polygon fill="#faa206" stroke="#faa206" stroke-width=".6" points="1281.9,75.4 1278.9,75.1 1275.0,82.0 1275.0,82.0"/>
<polygon fill="#f59b06" stroke="#f59b06" stroke-width=".6" points="1321.0,84.1 1319.2,81.9 1297.3,80.5 1298.2,81.6"/>
<polygon fill="#fba306" stroke="#fba306" stroke-width=".6" points="1269.6,75.2 1266.6,75.6 1275.0,82.0 1275.0,82.0"/>
<polygon fill="#faa206" stroke="#faa206" stroke-width=".6" points="1284.8,75.8 1281.9,75.4 1275.0,82.0 1275.0,82.0"/>
<polygon fill="#fca406" stroke="#fca406" stroke-width=".6" points="1266.6,75.6 1263.8,76.0 1275.0,82.0 1275.0,82.0"/>
<polygon fill="#faa206" stroke="#faa206" stroke-width=".6" points="1287.6,76.3 1284.8,75.8 1275.0,82.0 1275.0,82.0"/>
<polygon fill="#fca406" stroke="#fca406" stroke-width=".6" points="1263.8,76.0 1261.1,76.6 1275.0,82.0 1275.0,82.0"/>
<polygon fill="#d97706" stroke="#d97706" stroke-width=".6" points="1417.8,157.2 1419.7,150.5 1403.9,133.5 1402.3,139.5"/>
<polygon fill="#faa206" stroke="#faa206" stroke-width=".6" points="1290.1,77.0 1287.6,76.3 1275.0,82.0 1275.0,82.0"/>
<polygon fill="#eb8f06" stroke="#eb8f06" stroke-width=".6" points="1366.2,106.0 1365.8,101.7 1344.5,92.6 1344.8,95.9"/>
<polygon fill="#ffac06" stroke="#ffac06" stroke-width=".6" points="1206.1,90.9 1205.2,94.2 1227.8,87.3 1228.4,85.1"/>
<polygon fill="#ffa906" stroke="#ffa906" stroke-width=".6" points="1229.8,83.0 1228.4,85.1 1251.5,82.1 1252.2,81.0"/>
<polygon fill="#fda506" stroke="#fda506" stroke-width=".6" points="1261.1,76.6 1258.7,77.3 1275.0,82.0 1275.0,82.0"/>
<polygon fill="#fba206" stroke="#fba206" stroke-width=".6" points="1292.4,77.7 1290.1,77.0 1275.0,82.0 1275.0,82.0"/>
<polygon fill="#ffad06" stroke="#ffad06" stroke-width=".6" points="1164.0,115.9 1164.5,121.1 1184.2,108.0 1183.8,103.8"/>
<polygon fill="#fda606" stroke="#fda606" stroke-width=".6" points="1258.7,77.3 1256.6,78.1 1275.0,82.0 1275.0,82.0"/>
<polygon fill="#cd7105" stroke="#cd7105" stroke-width=".6" points="1443.6,226.7 1448.9,218.7 1441.3,197.1 1436.3,204.7"/>
<polygon fill="#fba306" stroke="#fba306" stroke-width=".6" points="1294.4,78.6 1292.4,77.7 1275.0,82.0 1275.0,82.0"/>
<polygon fill="#f69d06" stroke="#f69d06" stroke-width=".6" points="1322.0,86.2 1321.0,84.1 1298.2,81.6 1298.7,82.7"/>
<polygon fill="#fea606" stroke="#fea606" stroke-width=".6" points="1256.6,78.1 1254.8,79.0 1275.0,82.0 1275.0,82.0"/>
<polygon fill="#fba306" stroke="#fba306" stroke-width=".6" points="1296.0,79.5 1294.4,78.6 1275.0,82.0 1275.0,82.0"/>
<polygon fill="#fea706" stroke="#fea706" stroke-width=".6" points="1117.8,172.7 1121.1,180.0 1134.0,160.4 1130.9,153.7"/>
<polygon fill="#fea706" stroke="#fea706" stroke-width=".6" points="1254.8,79.0 1253.3,80.0 1275.0,82.0 1275.0,82.0"/>
<polygon fill="#f29706" stroke="#f29706" stroke-width=".6" points="1344.8,95.9 1344.5,92.6 1322.0,86.2 1322.2,88.4"/>
<polygon fill="#e08106" stroke="#e08106" stroke-width=".6" points="1402.3,139.5 1403.9,133.5 1386.0,118.6 1384.6,123.8"/>
<polygon fill="#fba306" stroke="#fba306" stroke-width=".6" points="1297.3,80.5 1296.0,79.5 1275.0,82.0 1275.0,82.0"/>
<polygon fill="#ffab06" stroke="#ffab06" stroke-width=".6" points="1228.4,85.1 1227.8,87.3 1251.2,83.2 1251.5,82.1"/>
<polygon fill="#ffaf06" stroke="#ffaf06" stroke-width=".6" points="1183.8,103.8 1184.2,108.0 1205.5,97.4 1205.2,94.2"/>
<polygon fill="#ffa806" stroke="#ffa806" stroke-width=".6" points="1253.3,80.0 1252.2,81.0 1275.0,82.0 1275.0,82.0"/>
<polygon fill="#f19606" stroke="#f19606" stroke-width=".6" points="1098.8,244.8 1105.7,252.9 1110.0,230.4 1103.4,222.6"/>
<polygon fill="#fca406" stroke="#fca406" stroke-width=".6" points="1298.2,81.6 1297.3,80.5 1275.0,82.0 1275.0,82.0"/>
<polygon fill="#ffa806" stroke="#ffa806" stroke-width=".6" points="1252.2,81.0 1251.5,82.1 1275.0,82.0 1275.0,82.0"/>
<polygon fill="#f89f06" stroke="#f89f06" stroke-width=".6" points="1322.2,88.4 1322.0,86.2 1298.7,82.7 1298.8,83.8"/>
<polygon fill="#fca406" stroke="#fca406" stroke-width=".6" points="1298.7,82.7 1298.2,81.6 1275.0,82.0 1275.0,82.0"/>
<polygon fill="#ffaf06" stroke="#ffaf06" stroke-width=".6" points="1205.2,94.2 1205.5,97.4 1228.0,89.5 1227.8,87.3"/>
<polygon fill="#e88a06" stroke="#e88a06" stroke-width=".6" points="1384.6,123.8 1386.0,118.6 1366.2,106.0 1365.0,110.2"/>
<polygon fill="#d27406" stroke="#d27406" stroke-width=".6" points="1436.3,204.7 1441.3,197.1 1430.9,176.5 1426.2,183.7"/>
<polygon fill="#ffac06" stroke="#ffac06" stroke-width=".6" points="1130.9,153.7 1134.0,160.4 1149.3,142.4 1146.6,136.4"/>
<polygon fill="#ffa906" stroke="#ffa906" stroke-width=".6" points="1251.5,82.1 1251.2,83.2 1275.0,82.0 1275.0,82.0"/>
<polygon fill="#c86e05" stroke="#c86e05" stroke-width=".6" points="1441.1,279.4 1449.6,271.4 1448.1,249.0 1439.7,256.9"/>
<polygon fill="#fda506" stroke="#fda506" stroke-width=".6" points="1298.8,83.8 1298.7,82.7 1275.0,82.0 1275.0,82.0"/>
<polygon fill="#ffad06" stroke="#ffad06" stroke-width=".6" points="1227.8,87.3 1228.0,89.5 1251.3,84.3 1251.2,83.2"/>
<polygon fill="#ffaa06" stroke="#ffaa06" stroke-width=".6" points="1251.2,83.2 1251.3,84.3 1275.0,82.0 1275.0,82.0"/>
<polygon fill="#ef9306" stroke="#ef9306" stroke-width=".6" points="1365.0,110.2 1366.2,106.0 1344.8,95.9 1343.9,99.1"/>
<polygon fill="#fda506" stroke="#fda506" stroke-width=".6" points="1298.5,84.9 1298.8,83.8 1275.0,82.0 1275.0,82.0"/>
<polygon fill="#ffaa06" stroke="#ffaa06" stroke-width=".6" points="1251.3,84.3 1251.8,85.4 1275.0,82.0 1275.0,82.0"/>
<polygon fill="#f49a06" stroke="#f49a06" stroke-width=".6" points="1343.9,99.1 1344.8,95.9 1322.2,88.4 1321.6,90.6"/>
<polygon fill="#f9a106" stroke="#f9a106" stroke-width=".6" points="1321.6,90.6 1322.2,88.4 1298.8,83.8 1298.5,84.9"/>
<polygon fill="#ffb006" stroke="#ffb006" stroke-width=".6" points="1146.6,136.4 1149.3,142.4 1166.8,126.2 1164.5,121.1"/>
<polygon fill="#fea606" stroke="#fea606" stroke-width=".6" points="1297.8,86.0 1298.5,84.9 1275.0,82.0 1275.0,82.0"/>
<polygon fill="#f89f06" stroke="#f89f06" stroke-width=".6" points="1103.4,222.6 1110.0,230.4 1117.2,208.3 1110.8,200.8"/>
<polygon fill="#ffab06" stroke="#ffab06" stroke-width=".6" points="1251.8,85.4 1252.7,86.5 1275.0,82.0 1275.0,82.0"/>
<polygon fill="#d77606" stroke="#d77606" stroke-width=".6" points="1426.2,183.7 1430.9,176.5 1417.8,157.2 1413.5,163.7"/>
<polygon fill="#fea706" stroke="#fea706" stroke-width=".6" points="1296.7,87.0 1297.8,86.0 1275.0,82.0 1275.0,82.0"/>
<polygon fill="#ffaf06" stroke="#ffaf06" stroke-width=".6" points="1228.0,89.5 1229.0,91.7 1251.8,85.4 1251.3,84.3"/>
<polygon fill="#ffb206" stroke="#ffb206" stroke-width=".6" points="1164.5,121.1 1166.8,126.2 1186.2,112.2 1184.2,108.0"/>
<polygon fill="#ffab06" stroke="#ffab06" stroke-width=".6" points="1252.7,86.5 1254.0,87.5 1275.0,82.0 1275.0,82.0"/>
<polygon fill="#ffa706" stroke="#ffa706" stroke-width=".6" points="1295.2,88.0 1296.7,87.0 1275.0,82.0 1275.0,82.0"/>
<polygon fill="#ffb206" stroke="#ffb206" stroke-width=".6" points="1205.5,97.4 1207.0,100.6 1229.0,91.7 1228.0,89.5"/>
<polygon fill="#ffb306" stroke="#ffb306" stroke-width=".6" points="1184.2,108.0 1186.2,112.2 1207.0,100.6 1205.5,97.4"/>
<polygon fill="#ffac06" stroke="#ffac06" stroke-width=".6" points="1254.0,87.5 1255.6,88.4 1275.0,82.0 1275.0,82.0"/>
<polygon fill="#fba306" stroke="#fba306" stroke-width=".6" points="1320.2,92.7 1321.6,90.6 1298.5,84.9 1297.8,86.0"/>
<polygon fill="#ffa806" stroke="#ffa806" stroke-width=".6" points="1293.4,88.9 1295.2,88.0 1275.0,82.0 1275.0,82.0"/>
<polygon fill="#cd7105" stroke="#cd7105" stroke-width=".6" points="1439.7,256.9 1448.1,249.0 1443.6,226.7 1435.5,234.3"/>
<polygon fill="#ffac06" stroke="#ffac06" stroke-width=".6" points="1255.6,88.4 1257.6,89.3 1275.0,82.0 1275.0,82.0"/>
<polygon fill="#de7e06" stroke="#de7e06" stroke-width=".6" points="1413.5,163.7 1417.8,157.2 1402.3,139.5 1398.4,145.3"/>
<polygon fill="#ffa906" stroke="#ffa906" stroke-width=".6" points="1291.3,89.7 1293.4,88.9 1275.0,82.0 1275.0,82.0"/>
<polygon fill="#fea706" stroke="#fea706" stroke-width=".6" points="1110.8,200.8 1117.2,208.3 1127.1,187.0 1121.1,180.0"/>
<polygon fill="#ffac06" stroke="#ffac06" stroke-width=".6" points="1257.6,89.3 1259.9,90.1 1275.0,82.0 1275.0,82.0"/>
<polygon fill="#ffb106" stroke="#ffb106" stroke-width=".6" points="1229.0,91.7 1230.8,93.8 1252.7,86.5 1251.8,85.4"/>
<polygon fill="#ffaa06" stroke="#ffaa06" stroke-width=".6" points="1288.9,90.4 1291.3,89.7 1275.0,82.0 1275.0,82.0"/>
<polygon fill="#ffad06" stroke="#ffad06" stroke-width=".6" points="1259.9,90.1 1262.4,90.7 1275.0,82.0 1275.0,82.0"/>
<polygon fill="#f79e06" stroke="#f79e06" stroke-width=".6" points="1341.8,102.3 1343.9,99.1 1321.6,90.6 1320.2,92.7"/>
<polygon fill="#ef9306" stroke="#ef9306" stroke-width=".6" points="1104.2,275.3 1114.1,283.1 1115.4,260.5 1105.7,252.9"/>
<polygon fill="#ffaa06" stroke="#ffaa06" stroke-width=".6" points="1286.2,91.0 1288.9,90.4 1275.0,82.0 1275.0,82.0"/>
<polygon fill="#e68706" stroke="#e68706" stroke-width=".6" points="1398.4,145.3 1402.3,139.5 1384.6,123.8 1381.3,128.8"/>
<polygon fill="#ffad06" stroke="#ffad06" stroke-width=".6" points="1262.4,90.7 1265.2,91.2 1275.0,82.0 1275.0,82.0"/>
<polygon fill="#ffab06" stroke="#ffab06" stroke-width=".6" points="1283.4,91.4 1286.2,91.0 1275.0,82.0 1275.0,82.0"/>
<polygon fill="#ffad06" stroke="#ffad06" stroke-width=".6" points="1265.2,91.2 1268.1,91.6 1275.0,82.0 1275.0,82.0"/>
<polygon fill="#f29706" stroke="#f29706" stroke-width=".6" points="1362.3,114.3 1365.0,110.2 1343.9,99.1 1341.8,102.3"/>
<polygon fill="#fca506" stroke="#fca506" stroke-width=".6" points="1318.0,94.8 1320.2,92.7 1297.8,86.0 1296.7,87.0"/>
<polygon fill="#ffab06" stroke="#ffab06" stroke-width=".6" points="1280.4,91.8 1283.4,91.4 1275.0,82.0 1275.0,82.0"/>
<polygon fill="#ec9006" stroke="#ec9006" stroke-width=".6" points="1381.3,128.8 1384.6,123.8 1365.0,110.2 1362.3,114.3"/>
<polygon fill="#ffad06" stroke="#ffad06" stroke-width=".6" points="1268.1,91.6 1271.1,91.9 1275.0,82.0 1275.0,82.0"/>
<polygon fill="#ffac06" stroke="#ffac06" stroke-width=".6" points="1277.3,91.9 1280.4,91.8 1275.0,82.0 1275.0,82.0"/>
<polygon fill="#ffac06" stroke="#ffac06" stroke-width=".6" points="1271.1,91.9 1274.2,92.0 1275.0,82.0 1275.0,82.0"/>
<polygon fill="#ffac06" stroke="#ffac06" stroke-width=".6" points="1274.2,92.0 1277.3,91.9 1275.0,82.0 1275.0,82.0"/>
<polygon fill="#ffae06" stroke="#ffae06" stroke-width=".6" points="1121.1,180.0 1127.1,187.0 1139.5,166.8 1134.0,160.4"/>
<polygon fill="#ffb506" stroke="#ffb506" stroke-width=".6" points="1207.0,100.6 1209.6,103.8 1230.8,93.8 1229.0,91.7"/>
<polygon fill="#ffb206" stroke="#ffb206" stroke-width=".6" points="1230.8,93.8 1233.3,95.8 1254.0,87.5 1252.7,86.5"/>
<polygon fill="#d27306" stroke="#d27306" stroke-width=".6" points="1435.5,234.3 1443.6,226.7 1436.3,204.7 1428.5,212.1"/>
<polygon fill="#fea706" stroke="#fea706" stroke-width=".6" points="1315.1,96.7 1318.0,94.8 1296.7,87.0 1295.2,88.0"/>
<polygon fill="#ffb306" stroke="#ffb306" stroke-width=".6" points="1134.0,160.4 1139.5,166.8 1154.2,148.1 1149.3,142.4"/>
<polygon fill="#ffb706" stroke="#ffb706" stroke-width=".6" points="1186.2,112.2 1189.6,116.3 1209.6,103.8 1207.0,100.6"/>
<polygon fill="#f9a106" stroke="#f9a106" stroke-width=".6" points="1338.6,105.3 1341.8,102.3 1320.2,92.7 1318.0,94.8"/>
<polygon fill="#ffb306" stroke="#ffb306" stroke-width=".6" points="1233.3,95.8 1236.6,97.6 1255.6,88.4 1254.0,87.5"/>
<polygon fill="#ffb606" stroke="#ffb606" stroke-width=".6" points="1149.3,142.4 1154.2,148.1 1171.0,131.2 1166.8,126.2"/>
<polygon fill="#ffb706" stroke="#ffb706" stroke-width=".6" points="1166.8,126.2 1171.0,131.2 1189.6,116.3 1186.2,112.2"/>
<polygon fill="#f79d06" stroke="#f79d06" stroke-width=".6" points="1105.7,252.9 1115.4,260.5 1119.5,237.9 1110.0,230.4"/>
<polygon fill="#d77606" stroke="#d77606" stroke-width=".6" points="1428.5,212.1 1436.3,204.7 1426.2,183.7 1418.9,190.5"/>
<polygon fill="#ffa906" stroke="#ffa906" stroke-width=".6" points="1311.5,98.5 1315.1,96.7 1295.2,88.0 1293.4,88.9"/>
<polygon fill="#ffb706" stroke="#ffb706" stroke-width=".6" points="1209.6,103.8 1213.4,106.7 1233.3,95.8 1230.8,93.8"/>
<polygon fill="#cc7005" stroke="#cc7005" stroke-width=".6" points="1429.9,286.9 1441.1,279.4 1439.7,256.9 1428.6,264.3"/>
<polygon fill="#ffb406" stroke="#ffb406" stroke-width=".6" points="1236.6,97.6 1240.5,99.3 1257.6,89.3 1255.6,88.4"/>
<polygon fill="#f69c06" stroke="#f69c06" stroke-width=".6" points="1358.1,118.3 1362.3,114.3 1341.8,102.3 1338.6,105.3"/>
<polygon fill="#dd7c06" stroke="#dd7c06" stroke-width=".6" points="1418.9,190.5 1426.2,183.7 1413.5,163.7 1406.8,170.0"/>
<polygon fill="#ffab06" stroke="#ffab06" stroke-width=".6" points="1307.3,100.1 1311.5,98.5 1293.4,88.9 1291.3,89.7"/>
<polygon fill="#fea606" stroke="#fea606" stroke-width=".6" points="1110.0,230.4 1119.5,237.9 1126.3,215.5 1117.2,208.3"/>
<polygon fill="#fca406" stroke="#fca406" stroke-width=".6" points="1334.3,108.2 1338.6,105.3 1318.0,94.8 1315.1,96.7"/>
<polygon fill="#f19506" stroke="#f19506" stroke-width=".6" points="1376.1,133.6 1381.3,128.8 1362.3,114.3 1358.1,118.3"/>
<polygon fill="#ffb506" stroke="#ffb506" stroke-width=".6" points="1240.5,99.3 1245.0,100.8 1259.9,90.1 1257.6,89.3"/>
<polygon fill="#e48506" stroke="#e48506" stroke-width=".6" points="1406.8,170.0 1413.5,163.7 1398.4,145.3 1392.5,151.0"/>
<polygon fill="#eb8e06" stroke="#eb8e06" stroke-width=".6" points="1392.5,151.0 1398.4,145.3 1381.3,128.8 1376.1,133.6"/>
<polygon fill="#ffba06" stroke="#ffba06" stroke-width=".6" points="1189.6,116.3 1194.5,120.2 1213.4,106.7 1209.6,103.8"/>
<polygon fill="#ffad06" stroke="#ffad06" stroke-width=".6" points="1302.5,101.5 1307.3,100.1 1291.3,89.7 1288.9,90.4"/>
<polygon fill="#ffb906" stroke="#ffb906" stroke-width=".6" points="1213.4,106.7 1218.2,109.5 1236.6,97.6 1233.3,95.8"/>
<polygon fill="#ffb606" stroke="#ffb606" stroke-width=".6" points="1245.0,100.8 1250.0,102.1 1262.4,90.7 1259.9,90.1"/>
<polygon fill="#d17306" stroke="#d17306" stroke-width=".6" points="1428.6,264.3 1439.7,256.9 1435.5,234.3 1424.6,241.6"/>
<polygon fill="#ffae06" stroke="#ffae06" stroke-width=".6" points="1117.2,208.3 1126.3,215.5 1135.6,193.7 1127.1,187.0"/>
<polygon fill="#ffae06" stroke="#ffae06" stroke-width=".6" points="1297.2,102.7 1302.5,101.5 1288.9,90.4 1286.2,91.0"/>
<polygon fill="#ffbb06" stroke="#ffbb06" stroke-width=".6" points="1171.0,131.2 1177.0,135.9 1194.5,120.2 1189.6,116.3"/>
<polygon fill="#ffb606" stroke="#ffb606" stroke-width=".6" points="1250.0,102.1 1255.5,103.2 1265.2,91.2 1262.4,90.7"/>
<polygon fill="#ffa706" stroke="#ffa706" stroke-width=".6" points="1328.9,110.8 1334.3,108.2 1315.1,96.7 1311.5,98.5"/>
<polygon fill="#f9a006" stroke="#f9a006" stroke-width=".6" points="1352.4,122.1 1358.1,118.3 1338.6,105.3 1334.3,108.2"/>
<polygon fill="#f49a06" stroke="#f49a06" stroke-width=".6" points="1114.1,283.1 1126.6,290.3 1127.9,267.7 1115.4,260.5"/>
<polygon fill="#ffb006" stroke="#ffb006" stroke-width=".6" points="1291.6,103.6 1297.2,102.7 1286.2,91.0 1283.4,91.4"/>
<polygon fill="#ffb406" stroke="#ffb406" stroke-width=".6" points="1127.1,187.0 1135.6,193.7 1147.3,173.0 1139.5,166.8"/>
<polygon fill="#ffb606" stroke="#ffb606" stroke-width=".6" points="1255.5,103.2 1261.3,103.9 1268.1,91.6 1265.2,91.2"/>
<polygon fill="#ffbb06" stroke="#ffbb06" stroke-width=".6" points="1154.2,148.1 1161.2,153.6 1177.0,135.9 1171.0,131.2"/>
<polygon fill="#ffb206" stroke="#ffb206" stroke-width=".6" points="1285.7,104.2 1291.6,103.6 1283.4,91.4 1280.4,91.8"/>
<polygon fill="#ffb806" stroke="#ffb806" stroke-width=".6" points="1139.5,166.8 1147.3,173.0 1161.2,153.6 1154.2,148.1"/>
<polygon fill="#ffb606" stroke="#ffb606" stroke-width=".6" points="1261.3,103.9 1267.3,104.4 1271.1,91.9 1268.1,91.6"/>
<polygon fill="#ffbb06" stroke="#ffbb06" stroke-width=".6" points="1218.2,109.5 1224.0,112.0 1240.5,99.3 1236.6,97.6"/>
<polygon fill="#ffb306" stroke="#ffb306" stroke-width=".6" points="1279.6,104.6 1285.7,104.2 1280.4,91.8 1277.3,91.9"/>
<polygon fill="#ffb506" stroke="#ffb506" stroke-width=".6" points="1267.3,104.4 1273.4,104.7 1274.2,92.0 1271.1,91.9"/>
<polygon fill="#ffb406" stroke="#ffb406" stroke-width=".6" points="1273.4,104.7 1279.6,104.6 1277.3,91.9 1274.2,92.0"/>
<polygon fill="#d67606" stroke="#d67606" stroke-width=".6" points="1424.6,241.6 1435.5,234.3 1428.5,212.1 1418.1,219.0"/>
<polygon fill="#ffbd06" stroke="#ffbd06" stroke-width=".6" points="1194.5,120.2 1200.8,123.8 1218.2,109.5 1213.4,106.7"/>
<polygon fill="#f59b06" stroke="#f59b06" stroke-width=".6" points="1369.3,138.2 1376.1,133.6 1358.1,118.3 1352.4,122.1"/>
<polygon fill="#ffab06" stroke="#ffab06" stroke-width=".6" points="1322.7,113.2 1328.9,110.8 1311.5,98.5 1307.3,100.1"/>
<polygon fill="#fca406" stroke="#fca406" stroke-width=".6" points="1115.4,260.5 1127.9,267.7 1131.7,244.9 1119.5,237.9"/>
<polygon fill="#dc7b06" stroke="#dc7b06" stroke-width=".6" points="1418.1,219.0 1428.5,212.1 1418.9,190.5 1409.1,197.0"/>
<polygon fill="#ffbc06" stroke="#ffbc06" stroke-width=".6" points="1224.0,112.0 1230.7,114.2 1245.0,100.8 1240.5,99.3"/>
<polygon fill="#f09506" stroke="#f09506" stroke-width=".6" points="1384.5,156.3 1392.5,151.0 1376.1,133.6 1369.3,138.2"/>
<polygon fill="#fda506" stroke="#fda506" stroke-width=".6" points="1345.5,125.5 1352.4,122.1 1334.3,108.2 1328.9,110.8"/>
<polygon fill="#e48506" stroke="#e48506" stroke-width=".6" points="1409.1,197.0 1418.9,190.5 1406.8,170.0 1397.9,176.0"/>
<polygon fill="#ea8d06" stroke="#ea8d06" stroke-width=".6" points="1397.9,176.0 1406.8,170.0 1392.5,151.0 1384.5,156.3"/>
<polygon fill="#d17306" stroke="#d17306" stroke-width=".6" points="1416.0,293.8 1429.9,286.9 1428.6,264.3 1414.8,271.2"/>
<polygon fill="#ffae06" stroke="#ffae06" stroke-width=".6" points="1315.6,115.2 1322.7,113.2 1307.3,100.1 1302.5,101.5"/>
<polygon fill="#ffbf06" stroke="#ffbf06" stroke-width=".6" points="1177.0,135.9 1184.7,140.3 1200.8,123.8 1194.5,120.2"/>
<polygon fill="#ffac06" stroke="#ffac06" stroke-width=".6" points="1119.5,237.9 1131.7,244.9 1137.9,222.2 1126.3,215.5"/>
<polygon fill="#ffbd06" stroke="#ffbd06" stroke-width=".6" points="1230.7,114.2 1238.1,116.1 1250.0,102.1 1245.0,100.8"/>
<polygon fill="#ffbf06" stroke="#ffbf06" stroke-width=".6" points="1200.8,123.8 1208.4,127.1 1224.0,112.0 1218.2,109.5"/>
<polygon fill="#ffb106" stroke="#ffb106" stroke-width=".6" points="1307.9,117.0 1315.6,115.2 1302.5,101.5 1297.2,102.7"/>
<polygon fill="#ffbf06" stroke="#ffbf06" stroke-width=".6" points="1161.2,153.6 1170.1,158.7 1184.7,140.3 1177.0,135.9"/>
<polygon fill="#f9a106" stroke="#f9a106" stroke-width=".6" points="1360.8,142.4 1369.3,138.2 1352.4,122.1 1345.5,125.5"/>
<polygon fill="#ffb406" stroke="#ffb406" stroke-width=".6" points="1126.3,215.5 1137.9,222.2 1146.5,200.0 1135.6,193.7"/>
<polygon fill="#ffbd06" stroke="#ffbd06" stroke-width=".6" points="1238.1,116.1 1246.2,117.6 1255.5,103.2 1250.0,102.1"/>
<polygon fill="#ffa906" stroke="#ffa906" stroke-width=".6" points="1337.3,128.6 1345.5,125.5 1328.9,110.8 1322.7,113.2"/>
<polygon fill="#d67506" stroke="#d67506" stroke-width=".6" points="1414.8,271.2 1428.6,264.3 1424.6,241.6 1411.2,248.2"/>
<polygon fill="#ffbd06" stroke="#ffbd06" stroke-width=".6" points="1147.3,173.0 1157.3,178.7 1170.1,158.7 1161.2,153.6"/>
<polygon fill="#ffb906" stroke="#ffb906" stroke-width=".6" points="1135.6,193.7 1146.5,200.0 1157.3,178.7 1147.3,173.0"/>
<polygon fill="#ffb406" stroke="#ffb406" stroke-width=".6" points="1299.6,118.3 1307.9,117.0 1297.2,102.7 1291.6,103.6"/>
<polygon fill="#f89f06" stroke="#f89f06" stroke-width=".6" points="1126.6,290.3 1141.8,296.8 1142.9,274.2 1127.9,267.7"/>
<polygon fill="#ffbd06" stroke="#ffbd06" stroke-width=".6" points="1246.2,117.6 1254.7,118.8 1261.3,103.9 1255.5,103.2"/>
<polygon fill="#ffc106" stroke="#ffc106" stroke-width=".6" points="1208.4,127.1 1217.1,130.0 1230.7,114.2 1224.0,112.0"/>
<polygon fill="#ffb606" stroke="#ffb606" stroke-width=".6" points="1290.8,119.2 1299.6,118.3 1291.6,103.6 1285.7,104.2"/>
<polygon fill="#ffc206" stroke="#ffc206" stroke-width=".6" points="1184.7,140.3 1193.9,144.3 1208.4,127.1 1200.8,123.8"/>
<polygon fill="#f59c06" stroke="#f59c06" stroke-width=".6" points="1374.7,161.1 1384.5,156.3 1369.3,138.2 1360.8,142.4"/>
<polygon fill="#ffbd06" stroke="#ffbd06" stroke-width=".6" points="1254.7,118.8 1263.6,119.5 1267.3,104.4 1261.3,103.9"/>
<polygon fill="#dc7b06" stroke="#dc7b06" stroke-width=".6" points="1411.2,248.2 1424.6,241.6 1418.1,219.0 1405.2,225.4"/>
<polygon fill="#ffb906" stroke="#ffb906" stroke-width=".6" points="1281.8,119.8 1290.8,119.2 1285.7,104.2 1279.6,104.6"/>
<polygon fill="#ffbc06" stroke="#ffbc06" stroke-width=".6" points="1263.6,119.5 1272.7,119.9 1273.4,104.7 1267.3,104.4"/>
<polygon fill="#ffba06" stroke="#ffba06" stroke-width=".6" points="1272.7,119.9 1281.8,119.8 1279.6,104.6 1273.4,104.7"/>
<polygon fill="#ffae06" stroke="#ffae06" stroke-width=".6" points="1328.1,131.3 1337.3,128.6 1322.7,113.2 1315.6,115.2"/>
<polygon fill="#f09506" stroke="#f09506" stroke-width=".6" points="1386.8,181.5 1397.9,176.0 1384.5,156.3 1374.7,161.1"/>
<polygon fill="#e38406" stroke="#e38406" stroke-width=".6" points="1405.2,225.4 1418.1,219.0 1409.1,197.0 1397.1,203.0"/>
<polygon fill="#ffa806" stroke="#ffa806" stroke-width=".6" points="1127.9,267.7 1142.9,274.2 1146.3,251.2 1131.7,244.9"/>
<polygon fill="#ea8d06" stroke="#ea8d06" stroke-width=".6" points="1397.1,203.0 1409.1,197.0 1397.9,176.0 1386.8,181.5"/>
<polygon fill="#fea606" stroke="#fea606" stroke-width=".6" points="1350.9,146.2 1360.8,142.4 1345.5,125.5 1337.3,128.6"/>
<polygon fill="#ffc206" stroke="#ffc206" stroke-width=".6" points="1217.1,130.0 1226.8,132.4 1238.1,116.1 1230.7,114.2"/>
<polygon fill="#ffc306" stroke="#ffc306" stroke-width=".6" points="1170.1,158.7 1180.8,163.3 1193.9,144.3 1184.7,140.3"/>
<polygon fill="#d67506" stroke="#d67506" stroke-width=".6" points="1399.6,299.9 1416.0,293.8 1414.8,271.2 1398.6,277.3"/>
<polygon fill="#ffb206" stroke="#ffb206" stroke-width=".6" points="1318.0,133.5 1328.1,131.3 1315.6,115.2 1307.9,117.0"/>
<polygon fill="#ffc406" stroke="#ffc406" stroke-width=".6" points="1193.9,144.3 1204.5,147.8 1217.1,130.0 1208.4,127.1"/>
<polygon fill="#ffb106" stroke="#ffb106" stroke-width=".6" points="1131.7,244.9 1146.3,251.2 1151.9,228.2 1137.9,222.2"/>
<polygon fill="#ffc106" stroke="#ffc106" stroke-width=".6" points="1157.3,178.7 1169.3,183.9 1180.8,163.3 1170.1,158.7"/>
<polygon fill="#ffc306" stroke="#ffc306" stroke-width=".6" points="1226.8,132.4 1237.3,134.4 1246.2,117.6 1238.1,116.1"/>
<polygon fill="#ffb906" stroke="#ffb906" stroke-width=".6" points="1137.9,222.2 1151.9,228.2 1159.6,205.7 1146.5,200.0"/>
<polygon fill="#faa206" stroke="#faa206" stroke-width=".6" points="1363.1,165.5 1374.7,161.1 1360.8,142.4 1350.9,146.2"/>
<polygon fill="#ffbe06" stroke="#ffbe06" stroke-width=".6" points="1146.5,200.0 1159.6,205.7 1169.3,183.9 1157.3,178.7"/>
<polygon fill="#dc7a06" stroke="#dc7a06" stroke-width=".6" points="1398.6,277.3 1414.8,271.2 1411.2,248.2 1395.4,254.2"/>
<polygon fill="#ffb606" stroke="#ffb606" stroke-width=".6" points="1307.1,135.3 1318.0,133.5 1307.9,117.0 1299.6,118.3"/>
<polygon fill="#ffac06" stroke="#ffac06" stroke-width=".6" points="1339.6,149.4 1350.9,146.2 1337.3,128.6 1328.1,131.3"/>
<polygon fill="#fba206" stroke="#fba206" stroke-width=".6" points="1141.8,296.8 1159.2,302.7 1160.2,280.0 1142.9,274.2"/>
<polygon fill="#ffc306" stroke="#ffc306" stroke-width=".6" points="1237.3,134.4 1248.5,135.9 1254.7,118.8 1246.2,117.6"/>
<polygon fill="#ffb906" stroke="#ffb906" stroke-width=".6" points="1295.7,136.5 1307.1,135.3 1299.6,118.3 1290.8,119.2"/>
<polygon fill="#f69c06" stroke="#f69c06" stroke-width=".6" points="1373.9,186.4 1386.8,181.5 1374.7,161.1 1363.1,165.5"/>
<polygon fill="#ffc506" stroke="#ffc506" stroke-width=".6" points="1180.8,163.3 1193.1,167.4 1204.5,147.8 1193.9,144.3"/>
<polygon fill="#ffc606" stroke="#ffc606" stroke-width=".6" points="1204.5,147.8 1216.3,150.8 1226.8,132.4 1217.1,130.0"/>
<polygon fill="#e38406" stroke="#e38406" stroke-width=".6" points="1395.4,254.2 1411.2,248.2 1405.2,225.4 1390.2,231.1"/>
<polygon fill="#ffc206" stroke="#ffc206" stroke-width=".6" points="1248.5,135.9 1260.1,136.9 1263.6,119.5 1254.7,118.8"/>
<polygon fill="#ffbc06" stroke="#ffbc06" stroke-width=".6" points="1283.9,137.2 1295.7,136.5 1290.8,119.2 1281.8,119.8"/>
<polygon fill="#f19606" stroke="#f19606" stroke-width=".6" points="1382.9,208.4 1397.1,203.0 1386.8,181.5 1373.9,186.4"/>
<polygon fill="#ea8d06" stroke="#ea8d06" stroke-width=".6" points="1390.2,231.1 1405.2,225.4 1397.1,203.0 1382.9,208.4"/>
<polygon fill="#ffc106" stroke="#ffc106" stroke-width=".6" points="1260.1,136.9 1272.0,137.3 1272.7,119.9 1263.6,119.5"/>
<polygon fill="#ffbf06" stroke="#ffbf06" stroke-width=".6" points="1272.0,137.3 1283.9,137.2 1281.8,119.8 1272.7,119.9"/>
<polygon fill="#ffb106" stroke="#ffb106" stroke-width=".6" points="1327.3,152.2 1339.6,149.4 1328.1,131.3 1318.0,133.5"/>
<polygon fill="#ffac06" stroke="#ffac06" stroke-width=".6" points="1142.9,274.2 1160.2,280.0 1163.1,256.8 1146.3,251.2"/>
<polygon fill="#db7906" stroke="#db7906" stroke-width=".6" points="1381.2,305.3 1399.6,299.9 1398.6,277.3 1380.3,282.6"/>
<polygon fill="#ffa906" stroke="#ffa906" stroke-width=".6" points="1350.1,169.3 1363.1,165.5 1350.9,146.2 1339.6,149.4"/>
<polygon fill="#ffc406" stroke="#ffc406" stroke-width=".6" points="1169.3,183.9 1183.1,188.5 1193.1,167.4 1180.8,163.3"/>
<polygon fill="#ffc606" stroke="#ffc606" stroke-width=".6" points="1216.3,150.8 1229.1,153.3 1237.3,134.4 1226.8,132.4"/>
<polygon fill="#ffb506" stroke="#ffb506" stroke-width=".6" points="1146.3,251.2 1163.1,256.8 1168.0,233.6 1151.9,228.2"/>
<polygon fill="#ffc106" stroke="#ffc106" stroke-width=".6" points="1159.6,205.7 1174.7,210.7 1183.1,188.5 1169.3,183.9"/>
<polygon fill="#ffc706" stroke="#ffc706" stroke-width=".6" points="1193.1,167.4 1206.8,170.9 1216.3,150.8 1204.5,147.8"/>
<polygon fill="#ffbc06" stroke="#ffbc06" stroke-width=".6" points="1151.9,228.2 1168.0,233.6 1174.7,210.7 1159.6,205.7"/>
<polygon fill="#ffb606" stroke="#ffb606" stroke-width=".6" points="1314.1,154.3 1327.3,152.2 1318.0,133.5 1307.1,135.3"/>
<polygon fill="#e38406" stroke="#e38406" stroke-width=".6" points="1380.3,282.6 1398.6,277.3 1395.4,254.2 1377.6,259.4"/>
<polygon fill="#fca406" stroke="#fca406" stroke-width=".6" points="1359.2,190.6 1373.9,186.4 1363.1,165.5 1350.1,169.3"/>
<polygon fill="#fda506" stroke="#fda506" stroke-width=".6" points="1159.2,302.7 1178.6,307.6 1179.4,284.9 1160.2,280.0"/>
<polygon fill="#ffc606" stroke="#ffc606" stroke-width=".6" points="1229.1,153.3 1242.7,155.1 1248.5,135.9 1237.3,134.4"/>
<polygon fill="#ffaf06" stroke="#ffaf06" stroke-width=".6" points="1335.8,172.5 1350.1,169.3 1339.6,149.4 1327.3,152.2"/>
<polygon fill="#ffbb06" stroke="#ffbb06" stroke-width=".6" points="1300.2,155.8 1314.1,154.3 1307.1,135.3 1295.7,136.5"/>
<polygon fill="#ea8d06" stroke="#ea8d06" stroke-width=".6" points="1377.6,259.4 1395.4,254.2 1390.2,231.1 1373.1,236.1"/>
<polygon fill="#f79e06" stroke="#f79e06" stroke-width=".6" points="1367.0,213.0 1382.9,208.4 1373.9,186.4 1359.2,190.6"/>
<polygon fill="#ffc506" stroke="#ffc506" stroke-width=".6" points="1242.7,155.1 1256.9,156.3 1260.1,136.9 1248.5,135.9"/>
<polygon fill="#f19606" stroke="#f19606" stroke-width=".6" points="1373.1,236.1 1390.2,231.1 1382.9,208.4 1367.0,213.0"/>
<polygon fill="#ffc606" stroke="#ffc606" stroke-width=".6" points="1183.1,188.5 1198.5,192.5 1206.8,170.9 1193.1,167.4"/>
<polygon fill="#ffbe06" stroke="#ffbe06" stroke-width=".6" points="1285.8,156.6 1300.2,155.8 1295.7,136.5 1283.9,137.2"/>
<polygon fill="#ffc806" stroke="#ffc806" stroke-width=".6" points="1206.8,170.9 1221.7,173.8 1229.1,153.3 1216.3,150.8"/>
<polygon fill="#ffc406" stroke="#ffc406" stroke-width=".6" points="1256.9,156.3 1271.3,156.8 1272.0,137.3 1260.1,136.9"/>
<polygon fill="#ffaf06" stroke="#ffaf06" stroke-width=".6" points="1160.2,280.0 1179.4,284.9 1181.9,261.6 1163.1,256.8"/>
<polygon fill="#e28206" stroke="#e28206" stroke-width=".6" points="1360.9,309.8 1381.2,305.3 1380.3,282.6 1360.2,287.1"/>
<polygon fill="#ffc106" stroke="#ffc106" stroke-width=".6" points="1271.3,156.8 1285.8,156.6 1283.9,137.2 1272.0,137.3"/>
<polygon fill="#ffc306" stroke="#ffc306" stroke-width=".6" points="1174.7,210.7 1191.5,215.0 1198.5,192.5 1183.1,188.5"/>
<polygon fill="#ffb506" stroke="#ffb506" stroke-width=".6" points="1320.4,175.0 1335.8,172.5 1327.3,152.2 1314.1,154.3"/>
<polygon fill="#ffab06" stroke="#ffab06" stroke-width=".6" points="1343.2,194.2 1359.2,190.6 1350.1,169.3 1335.8,172.5"/>
<polygon fill="#ffb806" stroke="#ffb806" stroke-width=".6" points="1163.1,256.8 1181.9,261.6 1185.9,238.2 1168.0,233.6"/>
<polygon fill="#ffbf06" stroke="#ffbf06" stroke-width=".6" points="1168.0,233.6 1185.9,238.2 1191.5,215.0 1174.7,210.7"/>
<polygon fill="#ffc806" stroke="#ffc806" stroke-width=".6" points="1221.7,173.8 1237.5,175.9 1242.7,155.1 1229.1,153.3"/>
<polygon fill="#fea606" stroke="#fea606" stroke-width=".6" points="1178.6,307.6 1199.6,311.6 1200.3,288.9 1179.4,284.9"/>
<polygon fill="#ea8d06" stroke="#ea8d06" stroke-width=".6" points="1360.2,287.1 1380.3,282.6 1377.6,259.4 1358.0,263.7"/>
<polygon fill="#ffc706" stroke="#ffc706" stroke-width=".6" points="1198.5,192.5 1215.2,195.6 1221.7,173.8 1206.8,170.9"/>
<polygon fill="#ffba06" stroke="#ffba06" stroke-width=".6" points="1304.2,176.7 1320.4,175.0 1314.1,154.3 1300.2,155.8"/>
<polygon fill="#fda506" stroke="#fda506" stroke-width=".6" points="1349.4,216.9 1367.0,213.0 1359.2,190.6 1343.2,194.2"/>
<polygon fill="#f19606" stroke="#f19606" stroke-width=".6" points="1358.0,263.7 1377.6,259.4 1373.1,236.1 1354.4,240.2"/>
<polygon fill="#ffc706" stroke="#ffc706" stroke-width=".6" points="1237.5,175.9 1253.9,177.3 1256.9,156.3 1242.7,155.1"/>
<polygon fill="#f79e06" stroke="#f79e06" stroke-width=".6" points="1354.4,240.2 1373.1,236.1 1367.0,213.0 1349.4,216.9"/>
<polygon fill="#e88a06" stroke="#e88a06" stroke-width=".6" points="1339.2,313.3 1360.9,309.8 1360.2,287.1 1338.6,290.5"/>
<polygon fill="#ffb106" stroke="#ffb106" stroke-width=".6" points="1325.9,197.0 1343.2,194.2 1335.8,172.5 1320.4,175.0"/>
<polygon fill="#ffbe06" stroke="#ffbe06" stroke-width=".6" points="1287.6,177.7 1304.2,176.7 1300.2,155.8 1285.8,156.6"/>
<polygon fill="#ffb006" stroke="#ffb006" stroke-width=".6" points="1179.4,284.9 1200.3,288.9 1202.2,265.5 1181.9,261.6"/>
<polygon fill="#ffc506" stroke="#ffc506" stroke-width=".6" points="1253.9,177.3 1270.7,177.9 1271.3,156.8 1256.9,156.3"/>
<polygon fill="#ffc406" stroke="#ffc406" stroke-width=".6" points="1191.5,215.0 1209.7,218.5 1215.2,195.6 1198.5,192.5"/>
<polygon fill="#ffc206" stroke="#ffc206" stroke-width=".6" points="1270.7,177.9 1287.6,177.7 1285.8,156.6 1271.3,156.8"/>
<polygon fill="#ffc706" stroke="#ffc706" stroke-width=".6" points="1215.2,195.6 1232.9,198.0 1237.5,175.9 1221.7,173.8"/>
<polygon fill="#ffb906" stroke="#ffb906" stroke-width=".6" points="1181.9,261.6 1202.2,265.5 1205.4,241.9 1185.9,238.2"/>
<polygon fill="#fda606" stroke="#fda606" stroke-width=".6" points="1199.6,311.6 1221.9,314.6 1222.4,291.9 1200.3,288.9"/>
<polygon fill="#ffc006" stroke="#ffc006" stroke-width=".6" points="1185.9,238.2 1205.4,241.9 1209.7,218.5 1191.5,215.0"/>
<polygon fill="#f09506" stroke="#f09506" stroke-width=".6" points="1338.6,290.5 1360.2,287.1 1358.0,263.7 1337.0,267.1"/>
<polygon fill="#ffac06" stroke="#ffac06" stroke-width=".6" points="1330.6,219.9 1349.4,216.9 1343.2,194.2 1325.9,197.0"/>
<polygon fill="#ffb706" stroke="#ffb706" stroke-width=".6" points="1307.8,198.9 1325.9,197.0 1320.4,175.0 1304.2,176.7"/>
<polygon fill="#ee9206" stroke="#ee9206" stroke-width=".6" points="1316.3,315.8 1339.2,313.3 1338.6,290.5 1316.0,293.0"/>
<polygon fill="#ffc606" stroke="#ffc606" stroke-width=".6" points="1232.9,198.0 1251.3,199.6 1253.9,177.3 1237.5,175.9"/>
<polygon fill="#f79e06" stroke="#f79e06" stroke-width=".6" points="1337.0,267.1 1358.0,263.7 1354.4,240.2 1334.3,243.5"/>
<polygon fill="#fda606" stroke="#fda606" stroke-width=".6" points="1334.3,243.5 1354.4,240.2 1349.4,216.9 1330.6,219.9"/>
<polygon fill="#ffc406" stroke="#ffc406" stroke-width=".6" points="1209.7,218.5 1229.1,221.1 1232.9,198.0 1215.2,195.6"/>
<polygon fill="#ffb006" stroke="#ffb006" stroke-width=".6" points="1200.3,288.9 1222.4,291.9 1223.8,268.4 1202.2,265.5"/>
<polygon fill="#ffbc06" stroke="#ffbc06" stroke-width=".6" points="1289.1,200.0 1307.8,198.9 1304.2,176.7 1287.6,177.7"/>
<polygon fill="#fca406" stroke="#fca406" stroke-width=".6" points="1221.9,314.6 1245.2,316.6 1245.4,293.8 1222.4,291.9"/>
<polygon fill="#ffc406" stroke="#ffc406" stroke-width=".6" points="1251.3,199.6 1270.2,200.2 1270.7,177.9 1253.9,177.3"/>
<polygon fill="#ffc006" stroke="#ffc006" stroke-width=".6" points="1270.2,200.2 1289.1,200.0 1287.6,177.7 1270.7,177.9"/>
<polygon fill="#ffb306" stroke="#ffb306" stroke-width=".6" points="1310.8,222.1 1330.6,219.9 1325.9,197.0 1307.8,198.9"/>
<polygon fill="#ffc006" stroke="#ffc006" stroke-width=".6" points="1205.4,241.9 1226.0,244.7 1229.1,221.1 1209.7,218.5"/>
<polygon fill="#ffb906" stroke="#ffb906" stroke-width=".6" points="1202.2,265.5 1223.8,268.4 1226.0,244.7 1205.4,241.9"/>
<polygon fill="#f39806" stroke="#f39806" stroke-width=".6" points="1292.8,317.1 1316.3,315.8 1316.0,293.0 1292.6,294.3"/>
<polygon fill="#f69c06" stroke="#f69c06" stroke-width=".6" points="1316.0,293.0 1338.6,290.5 1337.0,267.1 1314.9,269.5"/>
<polygon fill="#faa206" stroke="#faa206" stroke-width=".6" points="1245.2,316.6 1268.9,317.4 1269.0,294.6 1245.4,293.8"/>
<polygon fill="#ffc306" stroke="#ffc306" stroke-width=".6" points="1229.1,221.1 1249.2,222.8 1251.3,199.6 1232.9,198.0"/>
<polygon fill="#f79e06" stroke="#f79e06" stroke-width=".6" points="1268.9,317.4 1292.8,317.1 1292.6,294.3 1269.0,294.6"/>
<polygon fill="#ffac06" stroke="#ffac06" stroke-width=".6" points="1313.2,245.7 1334.3,243.5 1330.6,219.9 1310.8,222.1"/>
<polygon fill="#fda506" stroke="#fda506" stroke-width=".6" points="1314.9,269.5 1337.0,267.1 1334.3,243.5 1313.2,245.7"/>
<polygon fill="#ffaf06" stroke="#ffaf06" stroke-width=".6" points="1222.4,291.9 1245.4,293.8 1246.2,270.3 1223.8,268.4"/>
<polygon fill="#ffb806" stroke="#ffb806" stroke-width=".6" points="1290.4,223.3 1310.8,222.1 1307.8,198.9 1289.1,200.0"/>
<polygon fill="#ffc106" stroke="#ffc106" stroke-width=".6" points="1249.2,222.8 1269.7,223.5 1270.2,200.2 1251.3,199.6"/>
<polygon fill="#ffbe06" stroke="#ffbe06" stroke-width=".6" points="1226.0,244.7 1247.5,246.5 1249.2,222.8 1229.1,221.1"/>
<polygon fill="#fba206" stroke="#fba206" stroke-width=".6" points="1292.6,294.3 1316.0,293.0 1314.9,269.5 1292.2,270.8"/>
<polygon fill="#ffbd06" stroke="#ffbd06" stroke-width=".6" points="1269.7,223.5 1290.4,223.3 1289.1,200.0 1270.2,200.2"/>
<polygon fill="#ffb706" stroke="#ffb706" stroke-width=".6" points="1223.8,268.4 1246.2,270.3 1247.5,246.5 1226.0,244.7"/>
<polygon fill="#ffac06" stroke="#ffac06" stroke-width=".6" points="1245.4,293.8 1269.0,294.6 1269.1,271.1 1246.2,270.3"/>
<polygon fill="#ffb306" stroke="#ffb306" stroke-width=".6" points="1291.4,247.0 1313.2,245.7 1310.8,222.1 1290.4,223.3"/>
<polygon fill="#ffa706" stroke="#ffa706" stroke-width=".6" points="1269.0,294.6 1292.6,294.3 1292.2,270.8 1269.1,271.1"/>
<polygon fill="#ffab06" stroke="#ffab06" stroke-width=".6" points="1292.2,270.8 1314.9,269.5 1313.2,245.7 1291.4,247.0"/>
<polygon fill="#ffbb06" stroke="#ffbb06" stroke-width=".6" points="1247.5,246.5 1269.4,247.2 1269.7,223.5 1249.2,222.8"/>
<polygon fill="#ffb406" stroke="#ffb406" stroke-width=".6" points="1246.2,270.3 1269.1,271.1 1269.4,247.2 1247.5,246.5"/>
<polygon fill="#ffb806" stroke="#ffb806" stroke-width=".6" points="1269.4,247.2 1291.4,247.0 1290.4,223.3 1269.7,223.5"/>
<polygon fill="#ffb006" stroke="#ffb006" stroke-width=".6" points="1269.1,271.1 1292.2,270.8 1291.4,247.0 1269.4,247.2"/>
<polygon fill="#ff9805" stroke="#ff9805" stroke-width=".7" stroke-linejoin="round" points="909.1,332.5 934.1,337.5 979.2,356.3 1006.7,377.6 1021.2,401.3 1019.2,426.4 1001.7,451.4 979.2,466.4 978.7,415.1 969.1,392.6 954.1,378.8 934.1,366.3 920.4,361.3"/>
<polygon fill="#f58c03" stroke="#f58c03" stroke-width=".7" stroke-linejoin="round" points="1006.7,377.6 1021.2,401.3 1019.2,426.4 1001.7,451.4 1007.9,426.4 1008.7,400.1"/>
<polygon fill="#e58705" stroke="#e58705" stroke-width=".7" stroke-linejoin="round" points="560.0,346.5 597.5,331.5 597.0,353.2 563.0,368.3 560.0,369.0"/>
<polygon fill="#c86e05" stroke="#c86e05" stroke-width=".7" stroke-linejoin="round" points="881.6,487.7 912.9,477.7 934.1,468.9 955.4,456.4 967.9,442.6 976.7,427.6 978.7,415.1 979.2,466.4 959.1,477.7 914.1,501.4 912.9,502.7 912.9,567.7 882.8,576.5"/>
<polygon fill="#e08606" stroke="#e08606" stroke-width=".7" stroke-linejoin="round" points="881.6,487.7 894.1,483.9 895.3,572.7 882.8,576.5"/>
<polygon fill="#e08606" stroke="#e08606" stroke-width=".7" stroke-linejoin="round" points="882.8,576.5 895.3,572.7 895.0,660.0 883.0,656.0"/>
<polygon fill="#c86e05" stroke="#c86e05" stroke-width=".7" stroke-linejoin="round" points="895.3,572.7 912.9,567.7 914.2,668.0 895.0,660.0"/>
<polygon fill="#ffa806" stroke="#ffa806" stroke-width=".7" stroke-linejoin="round" points="883.0,656.0 895.0,660.0 914.2,668.0 914.2,671.2 883.0,658.4"/>
<polygon fill="#8f4f06" stroke="#8f4f06" stroke-width=".7" stroke-linejoin="round" points="947.9,516.4 977.9,526.4 991.7,635.3 956.6,655.1 950.4,655.1"/>
<polygon fill="#a05807" stroke="#a05807" stroke-width=".7" stroke-linejoin="round" points="977.9,526.4 997.9,534.0 992.9,634.0 991.7,635.3"/>
<polygon fill="#ba6807" stroke="#ba6807" stroke-width=".7" stroke-linejoin="round" points="997.9,534.0 1017.9,541.5 1019.2,606.5 992.9,634.0"/>
<polygon fill="#da8006" stroke="#da8006" stroke-width=".7" stroke-linejoin="round" points="1017.9,541.5 1024.7,544.0 1024.7,580.2 1019.2,606.5"/>
<polygon fill="#8f4f06" stroke="#8f4f06" stroke-width=".7" stroke-linejoin="round" points="956.6,655.1 991.7,635.3 990.2,636.0 936.2,662.0"/>
<polygon fill="#7f4503" stroke="#7f4503" stroke-width=".7" stroke-linejoin="round" points="563.0,368.8 596.5,380.8 650.1,330.2 775.2,330.2 840.1,421.2 774.1,415.2 710.1,417.2 650.1,425.2 602.0,437.2 566.0,451.2"/>
<polygon fill="#7f4503" stroke="#7f4503" stroke-width=".7" stroke-linejoin="round" points="842.8,473.9 842.5,460.4 841.3,446.8 839.4,433.0 836.8,419.2 833.4,405.4 829.3,391.8 824.6,378.4 819.2,365.2 813.1,352.5 806.5,340.2 799.4,328.4 791.7,317.3 783.6,306.8 775.1,297.1 766.3,288.1 757.2,280.1 747.8,272.9 738.3,266.6 728.6,261.4 718.9,257.2 709.1,254.0 699.5,251.9 689.9,250.8 680.6,250.9 671.4,252.0 662.6,254.2 654.1,257.5 646.0,261.8 638.4,267.1 631.2,273.5 624.6,280.7 618.6,288.9 613.2,297.9 608.4,307.7 604.3,318.2 601.0,329.4 598.3,341.2 596.4,353.6 595.3,366.4 594.9,379.5"/>
<defs><clipPath id="cStair"><polygon points="716.9,257.8 715.0,274.0 689.8,277.6 685.3,301.0 658.3,307.3 652.9,330.8 627.7,339.8 625.0,362.3 603.4,374.9 596.2,380.3 570.0,395.0 570.0,200.0 720.0,200.0"/></clipPath></defs><g clip-path="url(#cStair)">
<polygon fill="#8a4c04" stroke="#8a4c04" stroke-width=".6" points="751.1,352.2 727.0,352.5 727.1,330.5 751.1,330.2"/>
<polygon fill="#8a4c04" stroke="#8a4c04" stroke-width=".6" points="775.2,353.1 751.1,352.2 751.1,330.2 775.0,331.1"/>
<polygon fill="#8a4c04" stroke="#8a4c04" stroke-width=".6" points="727.0,352.5 703.1,353.9 703.5,331.9 727.1,330.5"/>
<polygon fill="#8a4c04" stroke="#8a4c04" stroke-width=".6" points="798.8,355.0 775.2,353.1 775.0,331.1 798.3,333.0"/>
<polygon fill="#8a4c04" stroke="#8a4c04" stroke-width=".6" points="703.1,353.9 679.9,356.4 680.5,334.3 703.5,331.9"/>
<polygon fill="#8a4c04" stroke="#8a4c04" stroke-width=".6" points="821.4,358.1 798.8,355.0 798.3,333.0 820.8,336.0"/>
<polygon fill="#8a4c04" stroke="#8a4c04" stroke-width=".6" points="751.1,330.2 727.1,330.5 727.6,310.0 750.9,309.7"/>
<polygon fill="#8a4c04" stroke="#8a4c04" stroke-width=".6" points="775.0,331.1 751.1,330.2 750.9,309.7 774.2,310.5"/>
<polygon fill="#8a4c04" stroke="#8a4c04" stroke-width=".6" points="727.1,330.5 703.5,331.9 704.5,311.3 727.6,310.0"/>
<polygon fill="#8a4c04" stroke="#8a4c04" stroke-width=".6" points="679.9,356.4 657.9,359.9 658.6,337.8 680.5,334.3"/>
<polygon fill="#8a4c04" stroke="#8a4c04" stroke-width=".6" points="798.3,333.0 775.0,331.1 774.2,310.5 796.9,312.4"/>
<polygon fill="#8a4c04" stroke="#8a4c04" stroke-width=".6" points="703.5,331.9 680.5,334.3 682.2,313.7 704.5,311.3"/>
<polygon fill="#8a4c04" stroke="#8a4c04" stroke-width=".6" points="842.7,362.1 821.4,358.1 820.8,336.0 841.9,340.1"/>
<polygon fill="#8a4c04" stroke="#8a4c04" stroke-width=".6" points="820.8,336.0 798.3,333.0 796.9,312.4 818.8,315.4"/>
<polygon fill="#8a4c04" stroke="#8a4c04" stroke-width=".6" points="750.9,309.7 727.6,310.0 728.3,291.3 750.7,291.1"/>
<polygon fill="#8a4c04" stroke="#8a4c04" stroke-width=".6" points="657.9,359.9 637.4,364.4 638.3,342.3 658.6,337.8"/>
<polygon fill="#8a4c04" stroke="#8a4c04" stroke-width=".6" points="774.2,310.5 750.9,309.7 750.7,291.1 772.9,291.9"/>
<polygon fill="#8a4c04" stroke="#8a4c04" stroke-width=".6" points="680.5,334.3 658.6,337.8 660.9,317.2 682.2,313.7"/>
<polygon fill="#8a4c04" stroke="#8a4c04" stroke-width=".6" points="727.6,310.0 704.5,311.3 706.3,292.6 728.3,291.3"/>
<polygon fill="#8a4c04" stroke="#8a4c04" stroke-width=".6" points="796.9,312.4 774.2,310.5 772.9,291.9 794.7,293.7"/>
<polygon fill="#8a4c04" stroke="#8a4c04" stroke-width=".6" points="841.9,340.1 820.8,336.0 818.8,315.4 839.4,319.3"/>
<polygon fill="#8a4c04" stroke="#8a4c04" stroke-width=".6" points="862.4,367.2 842.7,362.1 841.9,340.1 861.4,345.0"/>
<polygon fill="#8a4c04" stroke="#8a4c04" stroke-width=".6" points="704.5,311.3 682.2,313.7 684.9,294.9 706.3,292.6"/>
<polygon fill="#8a4c04" stroke="#8a4c04" stroke-width=".6" points="818.8,315.4 796.9,312.4 794.7,293.7 815.6,296.5"/>
<polygon fill="#8a4c04" stroke="#8a4c04" stroke-width=".6" points="658.6,337.8 638.3,342.3 641.0,321.5 660.9,317.2"/>
<polygon fill="#8a4c04" stroke="#8a4c04" stroke-width=".6" points="637.4,364.4 618.6,369.9 619.7,347.8 638.3,342.3"/>
<polygon fill="#8a4c04" stroke="#8a4c04" stroke-width=".6" points="682.2,313.7 660.9,317.2 664.5,298.2 684.9,294.9"/>
<polygon fill="#8a4c04" stroke="#8a4c04" stroke-width=".6" points="750.7,291.1 728.3,291.3 729.4,274.9 750.3,274.6"/>
<polygon fill="#8a4c04" stroke="#8a4c04" stroke-width=".6" points="772.9,291.9 750.7,291.1 750.3,274.6 771.2,275.4"/>
<polygon fill="#8a4c04" stroke="#8a4c04" stroke-width=".6" points="861.4,345.0 841.9,340.1 839.4,319.3 858.4,324.2"/>
<polygon fill="#8a4c04" stroke="#8a4c04" stroke-width=".6" points="728.3,291.3 706.3,292.6 708.7,276.1 729.4,274.9"/>
<polygon fill="#8a4c04" stroke="#8a4c04" stroke-width=".6" points="839.4,319.3 818.8,315.4 815.6,296.5 835.3,300.3"/>
<polygon fill="#8a4c04" stroke="#8a4c04" stroke-width=".6" points="794.7,293.7 772.9,291.9 771.2,275.4 791.6,277.1"/>
<polygon fill="#8a4c04" stroke="#8a4c04" stroke-width=".6" points="880.0,373.0 862.4,367.2 861.4,345.0 878.9,350.9"/>
<polygon fill="#8a4c04" stroke="#8a4c04" stroke-width=".6" points="706.3,292.6 684.9,294.9 688.7,278.2 708.7,276.1"/>
<polygon fill="#8a4c04" stroke="#8a4c04" stroke-width=".6" points="638.3,342.3 619.7,347.8 623.0,326.8 641.0,321.5"/>
<polygon fill="#8a4c04" stroke="#8a4c04" stroke-width=".6" points="660.9,317.2 641.0,321.5 645.5,302.4 664.5,298.2"/>
<polygon fill="#8a4c04" stroke="#8a4c04" stroke-width=".6" points="815.6,296.5 794.7,293.7 791.6,277.1 811.2,279.7"/>
<polygon fill="#8a4c04" stroke="#8a4c04" stroke-width=".6" points="618.6,369.9 602.1,376.2 603.3,354.0 619.7,347.8"/>
<polygon fill="#8a4c04" stroke="#8a4c04" stroke-width=".6" points="684.9,294.9 664.5,298.2 669.6,281.3 688.7,278.2"/>
<polygon fill="#8a4c04" stroke="#8a4c04" stroke-width=".6" points="858.4,324.2 839.4,319.3 835.3,300.3 853.5,304.9"/>
<polygon fill="#8a4c04" stroke="#8a4c04" stroke-width=".6" points="878.9,350.9 861.4,345.0 858.4,324.2 875.4,329.9"/>
<polygon fill="#8a4c04" stroke="#8a4c04" stroke-width=".6" points="835.3,300.3 815.6,296.5 811.2,279.7 829.6,283.2"/>
<polygon fill="#8a4c04" stroke="#8a4c04" stroke-width=".6" points="750.3,274.6 729.4,274.9 730.7,260.8 749.9,260.6"/>
<polygon fill="#8a4c04" stroke="#8a4c04" stroke-width=".6" points="771.2,275.4 750.3,274.6 749.9,260.6 769.0,261.3"/>
<polygon fill="#8a4c04" stroke="#8a4c04" stroke-width=".6" points="641.0,321.5 623.0,326.8 628.3,307.4 645.5,302.4"/>
<polygon fill="#8a4c04" stroke="#8a4c04" stroke-width=".6" points="729.4,274.9 708.7,276.1 711.8,261.9 730.7,260.8"/>
<polygon fill="#8a4c04" stroke="#8a4c04" stroke-width=".6" points="895.4,379.7 880.0,373.0 878.9,350.9 894.1,357.5"/>
<polygon fill="#8a4c04" stroke="#8a4c04" stroke-width=".6" points="791.6,277.1 771.2,275.4 769.0,261.3 787.7,262.8"/>
<polygon fill="#8a4c04" stroke="#8a4c04" stroke-width=".6" points="619.7,347.8 603.3,354.0 607.0,332.9 623.0,326.8"/>
<polygon fill="#8a4c04" stroke="#8a4c04" stroke-width=".6" points="664.5,298.2 645.5,302.4 651.8,285.2 669.6,281.3"/>
<polygon fill="#8a4c04" stroke="#8a4c04" stroke-width=".6" points="708.7,276.1 688.7,278.2 693.4,263.9 711.8,261.9"/>
<polygon fill="#8a4c04" stroke="#8a4c04" stroke-width=".6" points="602.1,376.2 595.2,379.6 596.3,357.5 603.3,354.0"/>
<polygon fill="#8a4c04" stroke="#8a4c04" stroke-width=".6" points="875.4,329.9 858.4,324.2 853.5,304.9 869.8,310.3"/>
<polygon fill="#8a4c04" stroke="#8a4c04" stroke-width=".6" points="811.2,279.7 791.6,277.1 787.7,262.8 805.6,265.3"/>
<polygon fill="#8a4c04" stroke="#8a4c04" stroke-width=".6" points="853.5,304.9 835.3,300.3 829.6,283.2 846.7,287.6"/>
<polygon fill="#8a4c04" stroke="#8a4c04" stroke-width=".6" points="894.1,357.5 878.9,350.9 875.4,329.9 890.3,336.3"/>
<polygon fill="#8a4c04" stroke="#8a4c04" stroke-width=".6" points="688.7,278.2 669.6,281.3 675.9,266.7 693.4,263.9"/>
<polygon fill="#8a4c04" stroke="#8a4c04" stroke-width=".6" points="623.0,326.8 607.0,332.9 613.0,313.2 628.3,307.4"/>
<polygon fill="#8a4c04" stroke="#8a4c04" stroke-width=".6" points="645.5,302.4 628.3,307.4 635.6,289.9 651.8,285.2"/>
<polygon fill="#8a4c04" stroke="#8a4c04" stroke-width=".6" points="603.3,354.0 596.3,357.5 599.6,336.6 607.0,332.9"/>
<polygon fill="#8a4c04" stroke="#8a4c04" stroke-width=".6" points="829.6,283.2 811.2,279.7 805.6,265.3 822.5,268.5"/>
<polygon fill="#8a4c04" stroke="#8a4c04" stroke-width=".6" points="908.2,387.0 895.4,379.7 894.1,357.5 906.8,364.7"/>
<polygon fill="#8a4c04" stroke="#8a4c04" stroke-width=".6" points="749.9,260.6 730.7,260.8 732.3,249.5 749.3,249.3"/>
<polygon fill="#8a4c04" stroke="#8a4c04" stroke-width=".6" points="769.0,261.3 749.9,260.6 749.3,249.3 766.4,249.9"/>
<polygon fill="#8a4c04" stroke="#8a4c04" stroke-width=".6" points="669.6,281.3 651.8,285.2 659.6,270.3 675.9,266.7"/>
<polygon fill="#8a4c04" stroke="#8a4c04" stroke-width=".6" points="730.7,260.8 711.8,261.9 715.4,250.5 732.3,249.5"/>
<polygon fill="#8a4c04" stroke="#8a4c04" stroke-width=".6" points="869.8,310.3 853.5,304.9 846.7,287.6 862.0,292.7"/>
<polygon fill="#8a4c04" stroke="#8a4c04" stroke-width=".6" points="787.7,262.8 769.0,261.3 766.4,249.9 783.0,251.3"/>
<polygon fill="#8a4c04" stroke="#8a4c04" stroke-width=".6" points="890.3,336.3 875.4,329.9 869.8,310.3 883.9,316.5"/>
<polygon fill="#8a4c04" stroke="#8a4c04" stroke-width=".6" points="711.8,261.9 693.4,263.9 699.0,252.2 715.4,250.5"/>
<polygon fill="#8a4c04" stroke="#8a4c04" stroke-width=".6" points="846.7,287.6 829.6,283.2 822.5,268.5 838.1,272.5"/>
<polygon fill="#8a4c04" stroke="#8a4c04" stroke-width=".6" points="805.6,265.3 787.7,262.8 783.0,251.3 799.0,253.4"/>
<polygon fill="#8a4c04" stroke="#8a4c04" stroke-width=".6" points="607.0,332.9 599.6,336.6 605.0,317.2 613.0,313.2"/>
<polygon fill="#8a4c04" stroke="#8a4c04" stroke-width=".6" points="628.3,307.4 613.0,313.2 621.2,295.4 635.6,289.9"/>
<polygon fill="#8a4c04" stroke="#8a4c04" stroke-width=".6" points="906.8,364.7 894.1,357.5 890.3,336.3 902.6,343.4"/>
<polygon fill="#8a4c04" stroke="#8a4c04" stroke-width=".6" points="693.4,263.9 675.9,266.7 683.4,254.7 699.0,252.2"/>
<polygon fill="#8a4c04" stroke="#8a4c04" stroke-width=".6" points="651.8,285.2 635.6,289.9 644.8,274.7 659.6,270.3"/>
<polygon fill="#8a4c04" stroke="#8a4c04" stroke-width=".6" points="822.5,268.5 805.6,265.3 799.0,253.4 814.1,256.3"/>
<polygon fill="#8c4e04" stroke="#8c4e04" stroke-width=".6" points="883.9,316.5 869.8,310.3 862.0,292.7 875.2,298.4"/>
<polygon fill="#8d4e04" stroke="#8d4e04" stroke-width=".6" points="862.0,292.7 846.7,287.6 838.1,272.5 852.1,277.1"/>
<polygon fill="#8f4f04" stroke="#8f4f04" stroke-width=".6" points="675.9,266.7 659.6,270.3 668.9,257.9 683.4,254.7"/>
<polygon fill="#8f5004" stroke="#8f5004" stroke-width=".6" points="918.1,394.9 908.2,387.0 906.8,364.7 916.6,372.5"/>
<polygon fill="#905104" stroke="#905104" stroke-width=".6" points="902.6,343.4 890.3,336.3 883.9,316.5 895.7,323.3"/>
<polygon fill="#915204" stroke="#915204" stroke-width=".6" points="749.3,249.3 732.3,249.5 734.0,241.0 748.7,240.9"/>
<polygon fill="#955405" stroke="#955405" stroke-width=".6" points="613.0,313.2 605.0,317.2 612.4,299.8 621.2,295.4"/>
<polygon fill="#925205" stroke="#925205" stroke-width=".6" points="766.4,249.9 749.3,249.3 748.7,240.9 763.4,241.4"/>
<polygon fill="#935305" stroke="#935305" stroke-width=".6" points="732.3,249.5 715.4,250.5 719.5,241.9 734.0,241.0"/>
<polygon fill="#945305" stroke="#945305" stroke-width=".6" points="838.1,272.5 822.5,268.5 814.1,256.3 828.0,259.9"/>
<polygon fill="#945405" stroke="#945405" stroke-width=".6" points="635.6,289.9 621.2,295.4 631.6,279.6 644.8,274.7"/>
<polygon fill="#945405" stroke="#945405" stroke-width=".6" points="783.0,251.3 766.4,249.9 763.4,241.4 777.7,242.6"/>
<polygon fill="#965505" stroke="#965505" stroke-width=".6" points="715.4,250.5 699.0,252.2 705.4,243.4 719.5,241.9"/>
<polygon fill="#995705" stroke="#995705" stroke-width=".6" points="799.0,253.4 783.0,251.3 777.7,242.6 791.5,244.4"/>
<polygon fill="#995805" stroke="#995805" stroke-width=".6" points="916.6,372.5 906.8,364.7 902.6,343.4 912.2,350.9"/>
<polygon fill="#995805" stroke="#995805" stroke-width=".6" points="659.6,270.3 644.8,274.7 655.7,261.8 668.9,257.9"/>
<polygon fill="#9c5a05" stroke="#9c5a05" stroke-width=".6" points="875.2,298.4 862.0,292.7 852.1,277.1 864.3,282.4"/>
<polygon fill="#9c5a05" stroke="#9c5a05" stroke-width=".6" points="699.0,252.2 683.4,254.7 692.0,245.5 705.4,243.4"/>
<polygon fill="#9e5b05" stroke="#9e5b05" stroke-width=".6" points="895.7,323.3 883.9,316.5 875.2,298.4 886.3,304.8"/>
<polygon fill="#9f5c05" stroke="#9f5c05" stroke-width=".6" points="852.1,277.1 838.1,272.5 828.0,259.9 840.5,264.0"/>
<polygon fill="#a05c05" stroke="#a05c05" stroke-width=".6" points="814.1,256.3 799.0,253.4 791.5,244.4 804.5,246.9"/>
<polygon fill="#a46006" stroke="#a46006" stroke-width=".6" points="621.2,295.4 612.4,299.8 621.7,284.5 631.6,279.6"/>
<polygon fill="#a45f06" stroke="#a45f06" stroke-width=".6" points="683.4,254.7 668.9,257.9 679.5,248.3 692.0,245.5"/>
<polygon fill="#a56006" stroke="#a56006" stroke-width=".6" points="912.2,350.9 902.6,343.4 895.7,323.3 904.9,330.5"/>
<polygon fill="#a56106" stroke="#a56106" stroke-width=".6" points="925.1,403.1 918.1,394.9 916.6,372.5 923.6,380.7"/>
<polygon fill="#a56106" stroke="#a56106" stroke-width=".6" points="644.8,274.7 631.6,279.6 644.0,266.2 655.7,261.8"/>
<polygon fill="#a86306" stroke="#a86306" stroke-width=".6" points="828.0,259.9 814.1,256.3 804.5,246.9 816.5,250.0"/>
<polygon fill="#aa6406" stroke="#aa6406" stroke-width=".6" points="748.7,240.9 734.0,241.0 736.0,235.6 748.1,235.5"/>
<polygon fill="#aa6506" stroke="#aa6506" stroke-width=".6" points="763.4,241.4 748.7,240.9 748.1,235.5 760.1,235.9"/>
<polygon fill="#ab6506" stroke="#ab6506" stroke-width=".6" points="734.0,241.0 719.5,241.9 724.0,236.3 736.0,235.6"/>
<polygon fill="#ac6606" stroke="#ac6606" stroke-width=".6" points="886.3,304.8 875.2,298.4 864.3,282.4 874.4,288.2"/>
<polygon fill="#ac6606" stroke="#ac6606" stroke-width=".6" points="864.3,282.4 852.1,277.1 840.5,264.0 851.3,268.7"/>
<polygon fill="#ad6606" stroke="#ad6606" stroke-width=".6" points="777.7,242.6 763.4,241.4 760.1,235.9 771.9,236.9"/>
<polygon fill="#ad6706" stroke="#ad6706" stroke-width=".6" points="668.9,257.9 655.7,261.8 668.1,251.6 679.5,248.3"/>
<polygon fill="#ae6806" stroke="#ae6806" stroke-width=".6" points="719.5,241.9 705.4,243.4 712.5,237.5 724.0,236.3"/>
<polygon fill="#af6806" stroke="#af6806" stroke-width=".6" points="923.6,380.7 916.6,372.5 912.2,350.9 919.0,358.9"/>
<polygon fill="#b16907" stroke="#b16907" stroke-width=".6" points="791.5,244.4 777.7,242.6 771.9,236.9 783.2,238.4"/>
<polygon fill="#b16a07" stroke="#b16a07" stroke-width=".6" points="904.9,330.5 895.7,323.3 886.3,304.8 894.9,311.6"/>
<polygon fill="#b26b07" stroke="#b26b07" stroke-width=".6" points="840.5,264.0 828.0,259.9 816.5,250.0 827.2,253.5"/>
<polygon fill="#b36b07" stroke="#b36b07" stroke-width=".6" points="705.4,243.4 692.0,245.5 701.5,239.3 712.5,237.5"/>
<polygon fill="#b36c07" stroke="#b36c07" stroke-width=".6" points="631.6,279.6 621.7,284.5 627.6,277.8 634.0,271.2 644.0,266.2"/>
<polygon fill="#b66e07" stroke="#b66e07" stroke-width=".6" points="804.5,246.9 791.5,244.4 783.2,238.4 793.9,240.4"/>
<polygon fill="#b86f07" stroke="#b86f07" stroke-width=".6" points="655.7,261.8 644.0,266.2 658.0,255.5 668.1,251.6"/>
<polygon fill="#b97007" stroke="#b97007" stroke-width=".6" points="692.0,245.5 679.5,248.3 691.2,241.6 701.5,239.3"/>
<polygon fill="#ba7107" stroke="#ba7107" stroke-width=".6" points="919.0,358.9 912.2,350.9 904.9,330.5 911.4,338.1"/>
<polygon fill="#bb7207" stroke="#bb7207" stroke-width=".6" points="874.4,288.2 864.3,282.4 851.3,268.7 860.4,273.9"/>
<polygon fill="#bd7307" stroke="#bd7307" stroke-width=".6" points="929.1,411.6 925.1,403.1 923.6,380.7 927.5,389.1"/>
<polygon fill="#bd7307" stroke="#bd7307" stroke-width=".6" points="816.5,250.0 804.5,246.9 793.9,240.4 803.7,242.9"/>
<polygon fill="#be7307" stroke="#be7307" stroke-width=".6" points="851.3,268.7 840.5,264.0 827.2,253.5 836.5,257.6"/>
<polygon fill="#be7407" stroke="#be7407" stroke-width=".6" points="894.9,311.6 886.3,304.8 874.4,288.2 882.3,294.5"/>
<polygon fill="#c37708" stroke="#c37708" stroke-width=".6" points="633.0,271.8 634.0,271.2 627.6,277.8"/>
<polygon fill="#c17608" stroke="#c17608" stroke-width=".6" points="679.5,248.3 668.1,251.6 681.8,244.3 691.2,241.6"/>
<polygon fill="#c47808" stroke="#c47808" stroke-width=".6" points="748.1,235.5 736.0,235.6 738.1,233.3 747.4,233.2"/>
<polygon fill="#c47808" stroke="#c47808" stroke-width=".6" points="760.1,235.9 748.1,235.5 747.4,233.2 756.6,233.5"/>
<polygon fill="#c47808" stroke="#c47808" stroke-width=".6" points="644.0,266.2 634.0,271.2 649.4,259.7 658.0,255.5"/>
<polygon fill="#c57908" stroke="#c57908" stroke-width=".6" points="736.0,235.6 724.0,236.3 729.0,233.8 738.1,233.3"/>
<polygon fill="#c57908" stroke="#c57908" stroke-width=".6" points="911.4,338.1 904.9,330.5 894.9,311.6 901.0,318.7"/>
<polygon fill="#c67908" stroke="#c67908" stroke-width=".6" points="771.9,236.9 760.1,235.9 756.6,233.5 765.6,234.3"/>
<polygon fill="#c67a08" stroke="#c67a08" stroke-width=".6" points="827.2,253.5 816.5,250.0 803.7,242.9 812.5,245.9"/>
<polygon fill="#c67a08" stroke="#c67a08" stroke-width=".6" points="927.5,389.1 923.6,380.7 919.0,358.9 922.8,367.1"/>
<polygon fill="#c77b08" stroke="#c77b08" stroke-width=".6" points="724.0,236.3 712.5,237.5 720.1,234.8 729.0,233.8"/>
<polygon fill="#c97c08" stroke="#c97c08" stroke-width=".6" points="783.2,238.4 771.9,236.9 765.6,234.3 774.2,235.4"/>
<polygon fill="#ca7d08" stroke="#ca7d08" stroke-width=".6" points="668.1,251.6 658.0,255.5 673.5,247.4 681.8,244.3"/>
<polygon fill="#cb7d08" stroke="#cb7d08" stroke-width=".6" points="860.4,273.9 851.3,268.7 836.5,257.6 844.3,262.1"/>
<polygon fill="#cb7d08" stroke="#cb7d08" stroke-width=".6" points="712.5,237.5 701.5,239.3 711.7,236.1 720.1,234.8"/>
<polygon fill="#cb7e08" stroke="#cb7e08" stroke-width=".6" points="882.3,294.5 874.4,288.2 860.4,273.9 867.4,279.5"/>
<polygon fill="#d18309" stroke="#d18309" stroke-width=".6" points="634.0,271.2 633.0,271.8 646.1,261.9 649.4,259.7"/>
<polygon fill="#cd7f08" stroke="#cd7f08" stroke-width=".6" points="793.9,240.4 783.2,238.4 774.2,235.4 782.4,237.0"/>
<polygon fill="#cf8109" stroke="#cf8109" stroke-width=".6" points="836.5,257.6 827.2,253.5 812.5,245.9 820.2,249.2"/>
<polygon fill="#d08109" stroke="#d08109" stroke-width=".6" points="701.5,239.3 691.2,241.6 703.8,237.9 711.7,236.1"/>
<polygon fill="#d08209" stroke="#d08209" stroke-width=".6" points="922.8,367.1 919.0,358.9 911.4,338.1 915.1,346.0"/>
<polygon fill="#d18209" stroke="#d18209" stroke-width=".6" points="901.0,318.7 894.9,311.6 882.3,294.5 887.9,301.0"/>
<polygon fill="#d38409" stroke="#d38409" stroke-width=".6" points="803.7,242.9 793.9,240.4 782.4,237.0 789.9,238.9"/>
<polygon fill="#d58509" stroke="#d58509" stroke-width=".6" points="929.8,420.2 929.1,411.6 927.5,389.1 928.3,397.7"/>
<polygon fill="#d58509" stroke="#d58509" stroke-width=".6" points="658.0,255.5 649.4,259.7 666.5,250.9 673.5,247.4"/>
<polygon fill="#d68609" stroke="#d68609" stroke-width=".6" points="691.2,241.6 681.8,244.3 696.6,240.0 703.8,237.9"/>
</g>
<polygon fill="#d37406" stroke="#d37406" stroke-width=".6" points="867.4,279.5 860.4,273.9 844.3,262.1 850.4,266.8"/>
<polygon fill="#de7d06" stroke="#de7d06" stroke-width=".6" points="812.5,245.9 803.7,242.9 789.9,238.9 796.7,241.2"/>
<polygon fill="#c86e05" stroke="#c86e05" stroke-width=".6" points="915.1,346.0 911.4,338.1 901.0,318.7 904.4,326.1"/>
<polygon fill="#d87606" stroke="#d87606" stroke-width=".6" points="844.3,262.1 836.5,257.6 820.2,249.2 826.6,252.9"/>
<polygon fill="#d07205" stroke="#d07205" stroke-width=".6" points="887.9,301.0 882.3,294.5 867.4,279.5 872.4,285.3"/>
<polygon fill="#ef9406" stroke="#ef9406" stroke-width=".6" points="681.8,244.3 673.5,247.4 690.3,242.4 696.6,240.0"/>
<polygon fill="#e98c06" stroke="#e98c06" stroke-width=".6" points="747.4,233.2 738.1,233.3 740.3,234.1 746.6,234.1"/>
<polygon fill="#e88b06" stroke="#e88b06" stroke-width=".6" points="756.6,233.5 747.4,233.2 746.6,234.1 752.8,234.3"/>
<polygon fill="#c66c05" stroke="#c66c05" stroke-width=".6" points="928.3,397.7 927.5,389.1 922.8,367.1 923.5,375.4"/>
<polygon fill="#eb8e06" stroke="#eb8e06" stroke-width=".6" points="738.1,233.3 729.0,233.8 734.2,234.5 740.3,234.1"/>
<polygon fill="#e88a06" stroke="#e88a06" stroke-width=".6" points="765.6,234.3 756.6,233.5 752.8,234.3 758.9,234.8"/>
<polygon fill="#ec9006" stroke="#ec9006" stroke-width=".6" points="729.0,233.8 720.1,234.8 728.2,235.1 734.2,234.5"/>
<polygon fill="#e78a06" stroke="#e78a06" stroke-width=".6" points="774.2,235.4 765.6,234.3 758.9,234.8 764.8,235.6"/>
<polygon fill="#f29706" stroke="#f29706" stroke-width=".6" points="649.4,259.7 646.1,261.9 659.8,255.2 660.8,254.7 666.5,250.9"/>
<polygon fill="#df7f06" stroke="#df7f06" stroke-width=".6" points="820.2,249.2 812.5,245.9 796.7,241.2 802.6,243.7"/>
<polygon fill="#ee9206" stroke="#ee9206" stroke-width=".6" points="720.1,234.8 711.7,236.1 722.5,236.1 728.2,235.1"/>
<polygon fill="#cd7005" stroke="#cd7005" stroke-width=".6" points="904.4,326.1 901.0,318.7 887.9,301.0 891.0,307.7"/>
<polygon fill="#e78906" stroke="#e78906" stroke-width=".6" points="782.4,237.0 774.2,235.4 764.8,235.6 770.3,236.6"/>
<polygon fill="#f39806" stroke="#f39806" stroke-width=".6" points="673.5,247.4 666.5,250.9 684.9,245.0 690.3,242.4"/>
<polygon fill="#d97806" stroke="#d97806" stroke-width=".6" points="850.4,266.8 844.3,262.1 826.6,252.9 831.6,256.8"/>
<polygon fill="#f09506" stroke="#f09506" stroke-width=".6" points="711.7,236.1 703.8,237.9 717.1,237.2 722.5,236.1"/>
<polygon fill="#c76d05" stroke="#c76d05" stroke-width=".6" points="923.5,375.4 922.8,367.1 915.1,346.0 915.8,353.9"/>
<polygon fill="#d57506" stroke="#d57506" stroke-width=".6" points="872.4,285.3 867.4,279.5 850.4,266.8 854.7,271.9"/>
<polygon fill="#e88a06" stroke="#e88a06" stroke-width=".6" points="789.9,238.9 782.4,237.0 770.3,236.6 775.4,237.9"/>
<polygon fill="#e18106" stroke="#e18106" stroke-width=".6" points="826.6,252.9 820.2,249.2 802.6,243.7 807.4,246.5"/>
<polygon fill="#f39806" stroke="#f39806" stroke-width=".6" points="703.8,237.9 696.6,240.0 712.3,238.6 717.1,237.2"/>
<polygon fill="#c56c05" stroke="#c56c05" stroke-width=".6" points="927.5,428.8 929.8,420.2 928.3,397.7 925.9,406.1"/>
<polygon fill="#f69c06" stroke="#f69c06" stroke-width=".6" points="660.6,254.9 660.8,254.7 659.8,255.2"/>
<polygon fill="#e88b06" stroke="#e88b06" stroke-width=".6" points="796.7,241.2 789.9,238.9 775.4,237.9 780.0,239.5"/>
<polygon fill="#d27306" stroke="#d27306" stroke-width=".6" points="891.0,307.7 887.9,301.0 872.4,285.3 875.2,291.3"/>
<polygon fill="#f69d06" stroke="#f69d06" stroke-width=".6" points="666.5,250.9 660.8,254.7 680.5,247.9 684.9,245.0"/>
<polygon fill="#cb6f05" stroke="#cb6f05" stroke-width=".6" points="915.8,353.9 915.1,346.0 904.4,326.1 905.1,333.5"/>
<polygon fill="#f59b06" stroke="#f59b06" stroke-width=".6" points="696.6,240.0 690.3,242.4 708.0,240.3 712.3,238.6"/>
<polygon fill="#dc7c06" stroke="#dc7c06" stroke-width=".6" points="854.7,271.9 850.4,266.8 831.6,256.8 835.1,260.9"/>
<polygon fill="#e98c06" stroke="#e98c06" stroke-width=".6" points="802.6,243.7 796.7,241.2 780.0,239.5 783.9,241.2"/>
<polygon fill="#e38406" stroke="#e38406" stroke-width=".6" points="831.6,256.8 826.6,252.9 807.4,246.5 811.3,249.5"/>
<polygon fill="#c76d05" stroke="#c76d05" stroke-width=".6" points="925.9,406.1 928.3,397.7 923.5,375.4 921.2,383.7"/>
<polygon fill="#f79e06" stroke="#f79e06" stroke-width=".6" points="690.3,242.4 684.9,245.0 704.4,242.1 708.0,240.3"/>
<polygon fill="#f39806" stroke="#f39806" stroke-width=".6" points="746.6,234.1 740.3,234.1 742.6,238.1 745.8,238.1"/>
<polygon fill="#d87606" stroke="#d87606" stroke-width=".6" points="875.2,291.3 872.4,285.3 854.7,271.9 857.1,277.0"/>
<polygon fill="#f29706" stroke="#f29706" stroke-width=".6" points="752.8,234.3 746.6,234.1 745.8,238.1 748.9,238.2"/>
<polygon fill="#f39906" stroke="#f39906" stroke-width=".6" points="740.3,234.1 734.2,234.5 739.5,238.3 742.6,238.1"/>
<polygon fill="#f29706" stroke="#f29706" stroke-width=".6" points="758.9,234.8 752.8,234.3 748.9,238.2 752.0,238.5"/>
<polygon fill="#faa106" stroke="#faa106" stroke-width=".6" points="660.8,254.7 660.6,254.9 676.5,251.3 677.3,251.0 680.5,247.9"/>
<polygon fill="#d07205" stroke="#d07205" stroke-width=".6" points="905.1,333.5 904.4,326.1 891.0,307.7 891.6,314.6"/>
<polygon fill="#f49a06" stroke="#f49a06" stroke-width=".6" points="734.2,234.5 728.2,235.1 736.5,238.6 739.5,238.3"/>
<polygon fill="#f19606" stroke="#f19606" stroke-width=".6" points="764.8,235.6 758.9,234.8 752.0,238.5 755.0,238.9"/>
<polygon fill="#ea8e06" stroke="#ea8e06" stroke-width=".6" points="807.4,246.5 802.6,243.7 783.9,241.2 787.2,243.1"/>
<polygon fill="#f69c06" stroke="#f69c06" stroke-width=".6" points="728.2,235.1 722.5,236.1 733.6,239.1 736.5,238.6"/>
<polygon fill="#f19606" stroke="#f19606" stroke-width=".6" points="770.3,236.6 764.8,235.6 755.0,238.9 757.8,239.4"/>
<polygon fill="#f79d06" stroke="#f79d06" stroke-width=".6" points="722.5,236.1 717.1,237.2 730.9,239.7 733.6,239.1"/>
<polygon fill="#faa206" stroke="#faa206" stroke-width=".6" points="684.9,245.0 680.5,247.9 701.4,244.0 704.4,242.1"/>
<polygon fill="#e68706" stroke="#e68706" stroke-width=".6" points="835.1,260.9 831.6,256.8 811.3,249.5 813.9,252.7"/>
<polygon fill="#f29706" stroke="#f29706" stroke-width=".6" points="775.4,237.9 770.3,236.6 757.8,239.4 760.3,240.1"/>
<polygon fill="#c96f05" stroke="#c96f05" stroke-width=".6" points="921.2,383.7 923.5,375.4 915.8,353.9 913.6,361.8"/>
<polygon fill="#f89f06" stroke="#f89f06" stroke-width=".6" points="717.1,237.2 712.3,238.6 728.5,240.4 730.9,239.7"/>
<polygon fill="#e08006" stroke="#e08006" stroke-width=".6" points="857.1,277.0 854.7,271.9 835.1,260.9 837.0,265.2"/>
<polygon fill="#d57506" stroke="#d57506" stroke-width=".6" points="891.6,314.6 891.0,307.7 875.2,291.3 875.7,297.4"/>
<polygon fill="#ec9006" stroke="#ec9006" stroke-width=".6" points="811.3,249.5 807.4,246.5 787.2,243.1 789.8,245.1"/>
<polygon fill="#f29706" stroke="#f29706" stroke-width=".6" points="780.0,239.5 775.4,237.9 760.3,240.1 762.6,240.8"/>
<polygon fill="#faa106" stroke="#faa106" stroke-width=".6" points="712.3,238.6 708.0,240.3 726.3,241.2 728.5,240.4"/>
<polygon fill="#fda606" stroke="#fda606" stroke-width=".6" points="677.2,251.2 677.3,251.0 676.5,251.3"/>
<polygon fill="#fda506" stroke="#fda506" stroke-width=".6" points="680.5,247.9 677.3,251.0 699.2,246.1 701.4,244.0"/>
<polygon fill="#f29806" stroke="#f29806" stroke-width=".6" points="783.9,241.2 780.0,239.5 762.6,240.8 764.6,241.7"/>
<polygon fill="#c76d05" stroke="#c76d05" stroke-width=".6" points="922.0,437.2 927.5,428.8 925.9,406.1 920.4,414.5"/>
<polygon fill="#ce7105" stroke="#ce7105" stroke-width=".6" points="913.6,361.8 915.8,353.9 905.1,333.5 903.0,341.0"/>
<polygon fill="#fba306" stroke="#fba306" stroke-width=".6" points="708.0,240.3 704.4,242.1 724.5,242.1 726.3,241.2"/>
<polygon fill="#dc7a06" stroke="#dc7a06" stroke-width=".6" points="875.7,297.4 875.2,291.3 857.1,277.0 857.5,282.3"/>
<polygon fill="#ee9206" stroke="#ee9206" stroke-width=".6" points="813.9,252.7 811.3,249.5 789.8,245.1 791.6,247.2"/>
<polygon fill="#e88b06" stroke="#e88b06" stroke-width=".6" points="837.0,265.2 835.1,260.9 813.9,252.7 815.4,255.9"/>
<polygon fill="#f39906" stroke="#f39906" stroke-width=".6" points="787.2,243.1 783.9,241.2 764.6,241.7 766.3,242.6"/>
<polygon fill="#fda506" stroke="#fda506" stroke-width=".6" points="704.4,242.1 701.4,244.0 723.0,243.1 724.5,242.1"/>
<polygon fill="#ffa806" stroke="#ffa806" stroke-width=".6" points="677.3,251.0 677.2,251.2 687.0,251.1 697.8,248.3 699.2,246.1"/>
<polygon fill="#d47406" stroke="#d47406" stroke-width=".6" points="903.0,341.0 905.1,333.5 891.6,314.6 889.8,321.4"/>
<polygon fill="#f49a06" stroke="#f49a06" stroke-width=".6" points="789.8,245.1 787.2,243.1 766.3,242.6 767.6,243.7"/>
<polygon fill="#c86e05" stroke="#c86e05" stroke-width=".6" points="920.4,414.5 925.9,406.1 921.2,383.7 915.9,391.8"/>
<polygon fill="#e48506" stroke="#e48506" stroke-width=".6" points="857.5,282.3 857.1,277.0 837.0,265.2 837.4,269.5"/>
<polygon fill="#fea706" stroke="#fea706" stroke-width=".6" points="701.4,244.0 699.2,246.1 721.9,244.2 723.0,243.1"/>
<polygon fill="#f09406" stroke="#f09406" stroke-width=".6" points="815.4,255.9 813.9,252.7 791.6,247.2 792.6,249.4"/>
<polygon fill="#fba306" stroke="#fba306" stroke-width=".6" points="745.8,238.1 742.6,238.1 745.0,245.2 745.0,245.2"/>
<polygon fill="#fba206" stroke="#fba206" stroke-width=".6" points="748.9,238.2 745.8,238.1 745.0,245.2 745.0,245.2"/>
<polygon fill="#fba306" stroke="#fba306" stroke-width=".6" points="742.6,238.1 739.5,238.3 745.0,245.2 745.0,245.2"/>
<polygon fill="#faa206" stroke="#faa206" stroke-width=".6" points="752.0,238.5 748.9,238.2 745.0,245.2 745.0,245.2"/>
<polygon fill="#f59b06" stroke="#f59b06" stroke-width=".6" points="791.6,247.2 789.8,245.1 767.6,243.7 768.5,244.7"/>
<polygon fill="#fba306" stroke="#fba306" stroke-width=".6" points="739.5,238.3 736.5,238.6 745.0,245.2 745.0,245.2"/>
<polygon fill="#faa206" stroke="#faa206" stroke-width=".6" points="755.0,238.9 752.0,238.5 745.0,245.2 745.0,245.2"/>
<polygon fill="#fca406" stroke="#fca406" stroke-width=".6" points="736.5,238.6 733.6,239.1 745.0,245.2 745.0,245.2"/>
<polygon fill="#faa206" stroke="#faa206" stroke-width=".6" points="757.8,239.4 755.0,238.9 745.0,245.2 745.0,245.2"/>
<polygon fill="#fca406" stroke="#fca406" stroke-width=".6" points="733.6,239.1 730.9,239.7 745.0,245.2 745.0,245.2"/>
<polygon fill="#d97706" stroke="#d97706" stroke-width=".6" points="889.8,321.4 891.6,314.6 875.7,297.4 874.0,303.5"/>
<polygon fill="#faa206" stroke="#faa206" stroke-width=".6" points="760.3,240.1 757.8,239.4 745.0,245.2 745.0,245.2"/>
<polygon fill="#eb8f06" stroke="#eb8f06" stroke-width=".6" points="837.4,269.5 837.0,265.2 815.4,255.9 815.7,259.2"/>
<polygon fill="#ffa906" stroke="#ffa906" stroke-width=".6" points="699.2,246.1 697.8,248.3 721.2,245.3 721.9,244.2"/>
<polygon fill="#fda506" stroke="#fda506" stroke-width=".6" points="730.9,239.7 728.5,240.4 745.0,245.2 745.0,245.2"/>
<polygon fill="#fba206" stroke="#fba206" stroke-width=".6" points="762.6,240.8 760.3,240.1 745.0,245.2 745.0,245.2"/>
<polygon fill="#fda606" stroke="#fda606" stroke-width=".6" points="728.5,240.4 726.3,241.2 745.0,245.2 745.0,245.2"/>
<polygon fill="#cd7105" stroke="#cd7105" stroke-width=".6" points="915.9,391.8 921.2,383.7 913.6,361.8 908.5,369.6"/>
<polygon fill="#ffac06" stroke="#ffac06" stroke-width=".6" points="694.4,251.4 697.2,250.5 697.8,248.3 687.0,251.1"/>
<polygon fill="#fba306" stroke="#fba306" stroke-width=".6" points="764.6,241.7 762.6,240.8 745.0,245.2 745.0,245.2"/>
<polygon fill="#f69d06" stroke="#f69d06" stroke-width=".6" points="792.6,249.4 791.6,247.2 768.5,244.7 769.0,245.9"/>
<polygon fill="#fea606" stroke="#fea606" stroke-width=".6" points="726.3,241.2 724.5,242.1 745.0,245.2 745.0,245.2"/>
<polygon fill="#fba306" stroke="#fba306" stroke-width=".6" points="766.3,242.6 764.6,241.7 745.0,245.2 745.0,245.2"/>
<polygon fill="#fea706" stroke="#fea706" stroke-width=".6" points="724.5,242.1 723.0,243.1 745.0,245.2 745.0,245.2"/>
<polygon fill="#f29706" stroke="#f29706" stroke-width=".6" points="815.7,259.2 815.4,255.9 792.6,249.4 792.8,251.7"/>
<polygon fill="#e08106" stroke="#e08106" stroke-width=".6" points="874.0,303.5 875.7,297.4 857.5,282.3 856.1,287.5"/>
<polygon fill="#fba306" stroke="#fba306" stroke-width=".6" points="767.6,243.7 766.3,242.6 745.0,245.2 745.0,245.2"/>
<polygon fill="#ffab06" stroke="#ffab06" stroke-width=".6" points="697.8,248.3 697.2,250.5 720.9,246.4 721.2,245.3"/>
<polygon fill="#ffa806" stroke="#ffa806" stroke-width=".6" points="723.0,243.1 721.9,244.2 745.0,245.2 745.0,245.2"/>
<polygon fill="#fca406" stroke="#fca406" stroke-width=".6" points="768.5,244.7 767.6,243.7 745.0,245.2 745.0,245.2"/>
<polygon fill="#ffaf06" stroke="#ffaf06" stroke-width=".6" points="697.3,251.6 697.2,250.5 694.4,251.4"/>
<polygon fill="#ffa806" stroke="#ffa806" stroke-width=".6" points="721.9,244.2 721.2,245.3 745.0,245.2 745.0,245.2"/>
<polygon fill="#f89f06" stroke="#f89f06" stroke-width=".6" points="792.8,251.7 792.6,249.4 769.0,245.9 769.1,247.0"/>
<polygon fill="#fca406" stroke="#fca406" stroke-width=".6" points="769.0,245.9 768.5,244.7 745.0,245.2 745.0,245.2"/>
<polygon fill="#e88a06" stroke="#e88a06" stroke-width=".6" points="856.1,287.5 857.5,282.3 837.4,269.5 836.2,273.8"/>
<polygon fill="#d27406" stroke="#d27406" stroke-width=".6" points="908.5,369.6 913.6,361.8 903.0,341.0 898.2,348.2"/>
<polygon fill="#ffa906" stroke="#ffa906" stroke-width=".6" points="721.2,245.3 720.9,246.4 745.0,245.2 745.0,245.2"/>
<polygon fill="#c86e05" stroke="#c86e05" stroke-width=".6" points="913.4,445.2 922.0,437.2 920.4,414.5 912.0,422.4"/>
<polygon fill="#fda506" stroke="#fda506" stroke-width=".6" points="769.1,247.0 769.0,245.9 745.0,245.2 745.0,245.2"/>
<polygon fill="#ffad06" stroke="#ffad06" stroke-width=".6" points="697.2,250.5 697.3,251.6 700.1,252.1 721.0,247.5 720.9,246.4"/>
<polygon fill="#ffaa06" stroke="#ffaa06" stroke-width=".6" points="720.9,246.4 721.0,247.5 745.0,245.2 745.0,245.2"/>
<polygon fill="#ef9306" stroke="#ef9306" stroke-width=".6" points="836.2,273.8 837.4,269.5 815.7,259.2 814.8,262.5"/>
<polygon fill="#fda506" stroke="#fda506" stroke-width=".6" points="768.8,248.1 769.1,247.0 745.0,245.2 745.0,245.2"/>
<polygon fill="#ffaa06" stroke="#ffaa06" stroke-width=".6" points="721.0,247.5 721.5,248.6 745.0,245.2 745.0,245.2"/>
<polygon fill="#f49a06" stroke="#f49a06" stroke-width=".6" points="814.8,262.5 815.7,259.2 792.8,251.7 792.2,253.9"/>
<polygon fill="#f9a106" stroke="#f9a106" stroke-width=".6" points="792.2,253.9 792.8,251.7 769.1,247.0 768.8,248.1"/>
<polygon fill="#fea606" stroke="#fea606" stroke-width=".6" points="768.1,249.2 768.8,248.1 745.0,245.2 745.0,245.2"/>
<polygon fill="#ffab06" stroke="#ffab06" stroke-width=".6" points="721.5,248.6 722.4,249.7 745.0,245.2 745.0,245.2"/>
<polygon fill="#d77606" stroke="#d77606" stroke-width=".6" points="898.2,348.2 903.0,341.0 889.8,321.4 885.4,328.0"/>
<polygon fill="#fea706" stroke="#fea706" stroke-width=".6" points="767.0,250.2 768.1,249.2 745.0,245.2 745.0,245.2"/>
<polygon fill="#ffaf06" stroke="#ffaf06" stroke-width=".6" points="704.7,253.2 721.5,248.6 721.0,247.5 700.1,252.1"/>
<polygon fill="#ffab06" stroke="#ffab06" stroke-width=".6" points="722.4,249.7 723.7,250.7 745.0,245.2 745.0,245.2"/>
<polygon fill="#ffa706" stroke="#ffa706" stroke-width=".6" points="765.5,251.2 767.0,250.2 745.0,245.2 745.0,245.2"/>
<polygon fill="#ffac06" stroke="#ffac06" stroke-width=".6" points="723.7,250.7 725.4,251.7 745.0,245.2 745.0,245.2"/>
<polygon fill="#fba306" stroke="#fba306" stroke-width=".6" points="790.8,256.1 792.2,253.9 768.8,248.1 768.1,249.2"/>
<polygon fill="#ffa806" stroke="#ffa806" stroke-width=".6" points="763.7,252.1 765.5,251.2 745.0,245.2 745.0,245.2"/>
<polygon fill="#cd7105" stroke="#cd7105" stroke-width=".6" points="912.0,422.4 920.4,414.5 915.9,391.8 907.7,399.6"/>
<polygon fill="#ffac06" stroke="#ffac06" stroke-width=".6" points="725.4,251.7 727.4,252.6 745.0,245.2 745.0,245.2"/>
<polygon fill="#de7e06" stroke="#de7e06" stroke-width=".6" points="885.4,328.0 889.8,321.4 874.0,303.5 870.1,309.4"/>
<polygon fill="#ffa906" stroke="#ffa906" stroke-width=".6" points="761.5,253.0 763.7,252.1 745.0,245.2 745.0,245.2"/>
<polygon fill="#ffb106" stroke="#ffb106" stroke-width=".6" points="708.7,254.2 722.4,249.7 721.5,248.6 704.7,253.2"/>
<polygon fill="#ffac06" stroke="#ffac06" stroke-width=".6" points="727.4,252.6 729.7,253.3 745.0,245.2 745.0,245.2"/>
<polygon fill="#ffaa06" stroke="#ffaa06" stroke-width=".6" points="759.1,253.7 761.5,253.0 745.0,245.2 745.0,245.2"/>
<polygon fill="#ffad06" stroke="#ffad06" stroke-width=".6" points="729.7,253.3 732.2,254.0 745.0,245.2 745.0,245.2"/>
<polygon fill="#f79e06" stroke="#f79e06" stroke-width=".6" points="812.7,265.7 814.8,262.5 792.2,253.9 790.8,256.1"/>
<polygon fill="#ffaa06" stroke="#ffaa06" stroke-width=".6" points="756.4,254.3 759.1,253.7 745.0,245.2 745.0,245.2"/>
<polygon fill="#e68706" stroke="#e68706" stroke-width=".6" points="870.1,309.4 874.0,303.5 856.1,287.5 852.7,292.6"/>
<polygon fill="#ffad06" stroke="#ffad06" stroke-width=".6" points="732.2,254.0 735.0,254.5 745.0,245.2 745.0,245.2"/>
<polygon fill="#ffab06" stroke="#ffab06" stroke-width=".6" points="753.5,254.7 756.4,254.3 745.0,245.2 745.0,245.2"/>
<polygon fill="#ffad06" stroke="#ffad06" stroke-width=".6" points="735.0,254.5 738.0,254.9 745.0,245.2 745.0,245.2"/>
<polygon fill="#f29706" stroke="#f29706" stroke-width=".6" points="833.5,277.9 836.2,273.8 814.8,262.5 812.7,265.7"/>
<polygon fill="#fca506" stroke="#fca506" stroke-width=".6" points="788.6,258.1 790.8,256.1 768.1,249.2 767.0,250.2"/>
<polygon fill="#ffab06" stroke="#ffab06" stroke-width=".6" points="750.5,255.1 753.5,254.7 745.0,245.2 745.0,245.2"/>
<polygon fill="#ec9006" stroke="#ec9006" stroke-width=".6" points="852.7,292.6 856.1,287.5 836.2,273.8 833.5,277.9"/>
<polygon fill="#ffad06" stroke="#ffad06" stroke-width=".6" points="738.0,254.9 741.1,255.2 745.0,245.2 745.0,245.2"/>
<polygon fill="#ffac06" stroke="#ffac06" stroke-width=".6" points="747.4,255.2 750.5,255.1 745.0,245.2 745.0,245.2"/>
<polygon fill="#ffb206" stroke="#ffb206" stroke-width=".6" points="712.3,255.3 723.7,250.7 722.4,249.7 708.7,254.2"/>
<polygon fill="#ffac06" stroke="#ffac06" stroke-width=".6" points="741.1,255.2 744.2,255.3 745.0,245.2 745.0,245.2"/>
<polygon fill="#ffac06" stroke="#ffac06" stroke-width=".6" points="744.2,255.3 747.4,255.2 745.0,245.2 745.0,245.2"/>
<polygon fill="#d27306" stroke="#d27306" stroke-width=".6" points="907.7,399.6 915.9,391.8 908.5,369.6 900.6,377.0"/>
<polygon fill="#ffb306" stroke="#ffb306" stroke-width=".6" points="715.6,256.4 725.4,251.7 723.7,250.7 712.3,255.3"/>
<polygon fill="#fea706" stroke="#fea706" stroke-width=".6" points="785.6,260.1 788.6,258.1 767.0,250.2 765.5,251.2"/>
<polygon fill="#f9a106" stroke="#f9a106" stroke-width=".6" points="809.5,268.8 812.7,265.7 790.8,256.1 788.6,258.1"/>
<polygon fill="#ffb406" stroke="#ffb406" stroke-width=".6" points="718.9,257.6 727.4,252.6 725.4,251.7 715.6,256.4"/>
<polygon fill="#d77606" stroke="#d77606" stroke-width=".6" points="900.6,377.0 908.5,369.6 898.2,348.2 890.9,355.2"/>
<polygon fill="#ffa906" stroke="#ffa906" stroke-width=".6" points="782.0,261.9 785.6,260.1 765.5,251.2 763.7,252.1"/>
<polygon fill="#ffb506" stroke="#ffb506" stroke-width=".6" points="722.1,258.8 729.7,253.3 727.4,252.6 718.9,257.6"/>
<polygon fill="#cc7005" stroke="#cc7005" stroke-width=".6" points="902.0,452.8 913.4,445.2 912.0,422.4 900.7,430.0"/>
<polygon fill="#f69c06" stroke="#f69c06" stroke-width=".6" points="829.2,282.0 833.5,277.9 812.7,265.7 809.5,268.8"/>
<polygon fill="#dd7c06" stroke="#dd7c06" stroke-width=".6" points="890.9,355.2 898.2,348.2 885.4,328.0 878.6,334.4"/>
<polygon fill="#ffab06" stroke="#ffab06" stroke-width=".6" points="777.7,263.5 782.0,261.9 763.7,252.1 761.5,253.0"/>
<polygon fill="#ffb606" stroke="#ffb606" stroke-width=".6" points="725.4,260.3 732.2,254.0 729.7,253.3 722.1,258.8"/>
<polygon fill="#fca406" stroke="#fca406" stroke-width=".6" points="805.1,271.7 809.5,268.8 788.6,258.1 785.6,260.1"/>
<polygon fill="#f19506" stroke="#f19506" stroke-width=".6" points="847.5,297.5 852.7,292.6 833.5,277.9 829.2,282.0"/>
<polygon fill="#e48506" stroke="#e48506" stroke-width=".6" points="878.6,334.4 885.4,328.0 870.1,309.4 864.1,315.1"/>
<polygon fill="#eb8e06" stroke="#eb8e06" stroke-width=".6" points="864.1,315.1 870.1,309.4 852.7,292.6 847.5,297.5"/>
<polygon fill="#ffb606" stroke="#ffb606" stroke-width=".6" points="729.0,262.0 735.0,254.5 732.2,254.0 725.4,260.3"/>
<polygon fill="#ffad06" stroke="#ffad06" stroke-width=".6" points="772.9,265.0 777.7,263.5 761.5,253.0 759.1,253.7"/>
<polygon fill="#d17306" stroke="#d17306" stroke-width=".6" points="900.7,430.0 912.0,422.4 907.7,399.6 896.7,406.9"/>
<polygon fill="#ffb606" stroke="#ffb606" stroke-width=".6" points="733.0,264.0 738.0,254.9 735.0,254.5 729.0,262.0"/>
<polygon fill="#ffae06" stroke="#ffae06" stroke-width=".6" points="767.5,266.1 772.9,265.0 759.1,253.7 756.4,254.3"/>
<polygon fill="#ffa706" stroke="#ffa706" stroke-width=".6" points="799.7,274.4 805.1,271.7 785.6,260.1 782.0,261.9"/>
<polygon fill="#f9a006" stroke="#f9a006" stroke-width=".6" points="823.5,285.8 829.2,282.0 809.5,268.8 805.1,271.7"/>
<polygon fill="#ffb006" stroke="#ffb006" stroke-width=".6" points="761.8,267.1 767.5,266.1 756.4,254.3 753.5,254.7"/>
<polygon fill="#ffb606" stroke="#ffb606" stroke-width=".6" points="737.6,266.4 741.1,255.2 738.0,254.9 733.0,264.0"/>
<polygon fill="#ffb206" stroke="#ffb206" stroke-width=".6" points="755.8,267.7 761.8,267.1 753.5,254.7 750.5,255.1"/>
<polygon fill="#ffb306" stroke="#ffb306" stroke-width=".6" points="749.7,268.1 755.8,267.7 750.5,255.1 747.4,255.2"/>
<polygon fill="#ffb406" stroke="#ffb406" stroke-width=".6" points="743.4,268.1 749.7,268.1 747.4,255.2 744.2,255.3"/>
<polygon fill="#d67606" stroke="#d67606" stroke-width=".6" points="896.7,406.9 907.7,399.6 900.6,377.0 890.1,384.1"/>
<polygon fill="#ffb506" stroke="#ffb506" stroke-width=".6" points="740.5,268.0 743.4,268.1 744.2,255.3 741.1,255.2 737.6,266.4"/>
<polygon fill="#f59b06" stroke="#f59b06" stroke-width=".6" points="840.6,302.1 847.5,297.5 829.2,282.0 823.5,285.8"/>
<polygon fill="#ffab06" stroke="#ffab06" stroke-width=".6" points="793.4,276.8 799.7,274.4 782.0,261.9 777.7,263.5"/>
<polygon fill="#dc7b06" stroke="#dc7b06" stroke-width=".6" points="890.1,384.1 900.6,377.0 890.9,355.2 881.0,361.8"/>
<polygon fill="#f09506" stroke="#f09506" stroke-width=".6" points="856.0,320.4 864.1,315.1 847.5,297.5 840.6,302.1"/>
<polygon fill="#fda506" stroke="#fda506" stroke-width=".6" points="816.5,289.3 823.5,285.8 805.1,271.7 799.7,274.4"/>
<polygon fill="#e48506" stroke="#e48506" stroke-width=".6" points="881.0,361.8 890.9,355.2 878.6,334.4 869.6,340.4"/>
<polygon fill="#ea8d06" stroke="#ea8d06" stroke-width=".6" points="869.6,340.4 878.6,334.4 864.1,315.1 856.0,320.4"/>
<polygon fill="#d17306" stroke="#d17306" stroke-width=".6" points="887.9,459.8 902.0,452.8 900.7,430.0 886.7,436.9"/>
<polygon fill="#ffae06" stroke="#ffae06" stroke-width=".6" points="786.2,278.9 793.4,276.8 777.7,263.5 772.9,265.0"/>
<polygon fill="#ffbc06" stroke="#ffbc06" stroke-width=".6" points="743.3,270.0 743.4,268.1 740.5,268.0"/>
<polygon fill="#ffb106" stroke="#ffb106" stroke-width=".6" points="778.3,280.6 786.2,278.9 772.9,265.0 767.5,266.1"/>
<polygon fill="#f9a106" stroke="#f9a106" stroke-width=".6" points="832.0,306.4 840.6,302.1 823.5,285.8 816.5,289.3"/>
<polygon fill="#ffba06" stroke="#ffba06" stroke-width=".6" points="750.7,275.4 749.7,268.1 743.4,268.1 743.3,270.0"/>
<polygon fill="#ffa906" stroke="#ffa906" stroke-width=".6" points="808.2,292.4 816.5,289.3 799.7,274.4 793.4,276.8"/>
<polygon fill="#d67506" stroke="#d67506" stroke-width=".6" points="886.7,436.9 900.7,430.0 896.7,406.9 883.0,413.7"/>
<polygon fill="#ffb406" stroke="#ffb406" stroke-width=".6" points="769.9,282.0 778.3,280.6 767.5,266.1 761.8,267.1"/>
<polygon fill="#ffb606" stroke="#ffb606" stroke-width=".6" points="761.0,282.9 769.9,282.0 761.8,267.1 755.8,267.7"/>
<polygon fill="#f59c06" stroke="#f59c06" stroke-width=".6" points="846.0,325.4 856.0,320.4 840.6,302.1 832.0,306.4"/>
<polygon fill="#dc7b06" stroke="#dc7b06" stroke-width=".6" points="883.0,413.7 896.7,406.9 890.1,384.1 877.0,390.5"/>
<polygon fill="#ffb906" stroke="#ffb906" stroke-width=".6" points="760.6,282.9 761.0,282.9 755.8,267.7 749.7,268.1 750.7,275.4"/>
<polygon fill="#ffae06" stroke="#ffae06" stroke-width=".6" points="798.8,295.1 808.2,292.4 793.4,276.8 786.2,278.9"/>
<polygon fill="#f09506" stroke="#f09506" stroke-width=".6" points="858.4,346.0 869.6,340.4 856.0,320.4 846.0,325.4"/>
<polygon fill="#e38406" stroke="#e38406" stroke-width=".6" points="877.0,390.5 890.1,384.1 881.0,361.8 868.8,367.8"/>
<polygon fill="#ea8d06" stroke="#ea8d06" stroke-width=".6" points="868.8,367.8 881.0,361.8 869.6,340.4 858.4,346.0"/>
<polygon fill="#fea606" stroke="#fea606" stroke-width=".6" points="821.9,310.2 832.0,306.4 816.5,289.3 808.2,292.4"/>
<polygon fill="#d67506" stroke="#d67506" stroke-width=".6" points="871.4,466.1 887.9,459.8 886.7,436.9 870.3,443.1"/>
<polygon fill="#ffb206" stroke="#ffb206" stroke-width=".6" points="788.5,297.4 798.8,295.1 786.2,278.9 778.3,280.6"/>
<polygon fill="#ffbc06" stroke="#ffbc06" stroke-width=".6" points="761.2,283.6 761.0,282.9 760.6,282.9"/>
<polygon fill="#faa206" stroke="#faa206" stroke-width=".6" points="834.3,329.8 846.0,325.4 832.0,306.4 821.9,310.2"/>
<polygon fill="#dc7a06" stroke="#dc7a06" stroke-width=".6" points="870.3,443.1 886.7,436.9 883.0,413.7 867.0,419.7"/>
<polygon fill="#ffb606" stroke="#ffb606" stroke-width=".6" points="777.5,299.2 788.5,297.4 778.3,280.6 769.9,282.0"/>
<polygon fill="#ffac06" stroke="#ffac06" stroke-width=".6" points="810.5,313.5 821.9,310.2 808.2,292.4 798.8,295.1"/>
<polygon fill="#ffb906" stroke="#ffb906" stroke-width=".6" points="777.1,299.2 777.5,299.2 769.9,282.0 761.0,282.9 761.2,283.6"/>
<polygon fill="#f69c06" stroke="#f69c06" stroke-width=".6" points="845.2,351.0 858.4,346.0 846.0,325.4 834.3,329.8"/>
<polygon fill="#e38406" stroke="#e38406" stroke-width=".6" points="867.0,419.7 883.0,413.7 877.0,390.5 861.7,396.3"/>
<polygon fill="#f19606" stroke="#f19606" stroke-width=".6" points="854.4,373.3 868.8,367.8 858.4,346.0 845.2,351.0"/>
<polygon fill="#ea8d06" stroke="#ea8d06" stroke-width=".6" points="861.7,396.3 877.0,390.5 868.8,367.8 854.4,373.3"/>
<polygon fill="#ffb106" stroke="#ffb106" stroke-width=".6" points="798.0,316.3 810.5,313.5 798.8,295.1 788.5,297.4"/>
<polygon fill="#db7906" stroke="#db7906" stroke-width=".6" points="852.6,471.6 871.4,466.1 870.3,443.1 851.7,448.5"/>
<polygon fill="#ffa906" stroke="#ffa906" stroke-width=".6" points="821.1,333.7 834.3,329.8 821.9,310.2 810.5,313.5"/>
<polygon fill="#ffbb06" stroke="#ffbb06" stroke-width=".6" points="777.9,300.2 777.5,299.2 777.1,299.2"/>
<polygon fill="#ffb606" stroke="#ffb606" stroke-width=".6" points="791.6,317.3 798.0,316.3 788.5,297.4 777.5,299.2 777.9,300.2"/>
<polygon fill="#e38406" stroke="#e38406" stroke-width=".6" points="851.7,448.5 870.3,443.1 867.0,419.7 849.0,425.0"/>
<polygon fill="#fca406" stroke="#fca406" stroke-width=".6" points="830.4,355.3 845.2,351.0 834.3,329.8 821.1,333.7"/>
<polygon fill="#ffaf06" stroke="#ffaf06" stroke-width=".6" points="806.6,336.9 821.1,333.7 810.5,313.5 798.0,316.3"/>
<polygon fill="#ea8d06" stroke="#ea8d06" stroke-width=".6" points="849.0,425.0 867.0,419.7 861.7,396.3 844.5,401.4"/>
<polygon fill="#f79e06" stroke="#f79e06" stroke-width=".6" points="838.2,378.0 854.4,373.3 845.2,351.0 830.4,355.3"/>
<polygon fill="#e28206" stroke="#e28206" stroke-width=".6" points="842.6,473.8 852.6,471.6 851.7,448.5 841.5,450.8"/>
<polygon fill="#f19606" stroke="#f19606" stroke-width=".6" points="844.5,401.4 861.7,396.3 854.4,373.3 838.2,378.0"/>
<polygon fill="#ffb506" stroke="#ffb506" stroke-width=".6" points="804.7,337.2 806.6,336.9 798.0,316.3 791.6,317.3"/>
<polygon fill="#ea8d06" stroke="#ea8d06" stroke-width=".6" points="841.5,450.8 851.7,448.5 849.0,425.0 838.2,427.4"/>
<polygon fill="#ffab06" stroke="#ffab06" stroke-width=".6" points="816.0,358.5 830.4,355.3 821.1,333.7 806.6,336.9 810.1,347.3"/>
<polygon fill="#ffb106" stroke="#ffb106" stroke-width=".6" points="810.1,347.3 806.6,336.9 804.7,337.2"/>
<polygon fill="#fda506" stroke="#fda506" stroke-width=".6" points="825.3,380.8 838.2,378.0 830.4,355.3 816.0,358.5"/>
<polygon fill="#f19606" stroke="#f19606" stroke-width=".6" points="838.2,427.4 849.0,425.0 844.5,401.4 832.8,403.9"/>
<polygon fill="#f79e06" stroke="#f79e06" stroke-width=".6" points="832.8,403.9 844.5,401.4 838.2,378.0 825.3,380.8"/>
<polygon fill="#ffa806" stroke="#ffa806" stroke-width=".7" stroke-linejoin="round" points="566.0,451.2 602.0,437.2 650.1,425.2 710.1,417.2 774.1,415.2 840.1,421.2 848.1,475.2 882.2,489.2 882.2,571.3"/>
<polygon fill="#bf4704" stroke="#bf4704" stroke-width=".7" stroke-linejoin="round" points="592.0,465.2 614.0,473.2 614.0,533.2 593.2,527.2"/>
<polygon fill="#943404" stroke="#943404" stroke-width=".7" stroke-linejoin="round" points="614.0,473.2 657.3,490.0 657.3,519.2 614.0,533.2"/>
<polyline fill="none" stroke="#c98a12" stroke-width="1" points="598.0,377.2 650.1,363.2 710.1,354.3 758.1,351.9 814.1,355.2" stroke-dasharray="1.5 4" opacity=".5"/>
<polygon fill="#bf4704" stroke="#bf4704" stroke-width=".7" stroke-linejoin="round" points="538.0,1303.0 558.0,1311.0 558.5,1336.5"/>
<polygon fill="#943404" stroke="#943404" stroke-width=".7" stroke-linejoin="round" points="558.0,1311.0 596.8,1295.2 597.3,1317.2 558.5,1336.5"/>
<polygon fill="#d64e05" stroke="#d64e05" stroke-width=".7" stroke-linejoin="round" points="538.0,1303.0 579.0,1287.9 596.8,1295.2 558.0,1311.0"/>
<polygon fill="#bf4704" stroke="#bf4704" stroke-width=".7" stroke-linejoin="round" points="585.9,1279.9 605.9,1287.9 606.4,1313.4"/>
<polygon fill="#943404" stroke="#943404" stroke-width=".7" stroke-linejoin="round" points="605.9,1287.9 644.7,1272.1 645.2,1294.1 606.4,1313.4"/>
<polygon fill="#d64e05" stroke="#d64e05" stroke-width=".7" stroke-linejoin="round" points="585.9,1279.9 627.0,1264.9 644.7,1272.1 605.9,1287.9"/>
<polygon fill="#bf4704" stroke="#bf4704" stroke-width=".7" stroke-linejoin="round" points="633.9,1256.8 653.9,1264.8 654.4,1290.3"/>
<polygon fill="#943404" stroke="#943404" stroke-width=".7" stroke-linejoin="round" points="653.9,1264.8 692.7,1249.0 693.2,1271.0 654.4,1290.3"/>
<polygon fill="#d64e05" stroke="#d64e05" stroke-width=".7" stroke-linejoin="round" points="633.9,1256.8 674.9,1241.8 692.7,1249.0 653.9,1264.8"/>
<polygon fill="#bf4704" stroke="#bf4704" stroke-width=".7" stroke-linejoin="round" points="681.8,1233.7 701.8,1241.7 702.3,1267.2"/>
<polygon fill="#943404" stroke="#943404" stroke-width=".7" stroke-linejoin="round" points="701.8,1241.7 740.6,1225.9 741.1,1247.9 702.3,1267.2"/>
<polygon fill="#d64e05" stroke="#d64e05" stroke-width=".7" stroke-linejoin="round" points="681.8,1233.7 722.8,1218.7 740.6,1225.9 701.8,1241.7"/>
<polygon fill="#bf4704" stroke="#bf4704" stroke-width=".7" stroke-linejoin="round" points="729.7,1210.6 749.8,1218.6 750.3,1244.1"/>
<polygon fill="#943404" stroke="#943404" stroke-width=".7" stroke-linejoin="round" points="749.8,1218.6 788.5,1202.8 789.0,1224.8 750.3,1244.1"/>
<polygon fill="#d64e05" stroke="#d64e05" stroke-width=".7" stroke-linejoin="round" points="729.7,1210.6 770.8,1195.6 788.5,1202.8 749.8,1218.6"/>
<polygon fill="#bf4704" stroke="#bf4704" stroke-width=".7" stroke-linejoin="round" points="777.7,1187.5 797.7,1195.5 798.2,1221.0"/>
<polygon fill="#943404" stroke="#943404" stroke-width=".7" stroke-linejoin="round" points="797.7,1195.5 836.5,1179.7 837.0,1201.8 798.2,1221.0"/>
<polygon fill="#d64e05" stroke="#d64e05" stroke-width=".7" stroke-linejoin="round" points="777.7,1187.5 818.7,1172.5 836.5,1179.7 797.7,1195.5"/>
<polygon fill="#bf4704" stroke="#bf4704" stroke-width=".7" stroke-linejoin="round" points="825.6,1164.4 845.6,1172.4 846.1,1197.9"/>
<polygon fill="#943404" stroke="#943404" stroke-width=".7" stroke-linejoin="round" points="845.6,1172.4 884.4,1156.6 884.9,1178.7 846.1,1197.9"/>
<polygon fill="#d64e05" stroke="#d64e05" stroke-width=".7" stroke-linejoin="round" points="825.6,1164.4 866.7,1149.4 884.4,1156.6 845.6,1172.4"/>
<polygon fill="#bf4704" stroke="#bf4704" stroke-width=".7" stroke-linejoin="round" points="873.6,1141.3 893.6,1149.3 894.1,1174.8"/>
<polygon fill="#943404" stroke="#943404" stroke-width=".7" stroke-linejoin="round" points="893.6,1149.3 932.4,1133.5 932.9,1155.6 894.1,1174.8"/>
<polygon fill="#d64e05" stroke="#d64e05" stroke-width=".7" stroke-linejoin="round" points="873.6,1141.3 914.6,1126.3 932.4,1133.5 893.6,1149.3"/>
<polygon fill="#bf4704" stroke="#bf4704" stroke-width=".7" stroke-linejoin="round" points="921.5,1118.2 941.5,1126.2 942.0,1151.7"/>
<polygon fill="#943404" stroke="#943404" stroke-width=".7" stroke-linejoin="round" points="941.5,1126.2 980.3,1110.5 980.8,1132.5 942.0,1151.7"/>
<polygon fill="#d64e05" stroke="#d64e05" stroke-width=".7" stroke-linejoin="round" points="921.5,1118.2 962.5,1103.2 980.3,1110.5 941.5,1126.2"/>
<polygon fill="#bf4704" stroke="#bf4704" stroke-width=".7" stroke-linejoin="round" points="969.4,1095.1 989.5,1103.1 990.0,1128.6"/>
<polygon fill="#943404" stroke="#943404" stroke-width=".7" stroke-linejoin="round" points="989.5,1103.1 1028.2,1087.4 1028.7,1109.4 990.0,1128.6"/>
<polygon fill="#d64e05" stroke="#d64e05" stroke-width=".7" stroke-linejoin="round" points="969.4,1095.1 1010.5,1080.1 1028.2,1087.4 989.5,1103.1"/>
<polygon fill="#bf4704" stroke="#bf4704" stroke-width=".7" stroke-linejoin="round" points="1017.4,1072.0 1037.4,1080.0 1037.9,1105.6"/>
<polygon fill="#943404" stroke="#943404" stroke-width=".7" stroke-linejoin="round" points="1037.4,1080.0 1076.2,1064.3 1076.7,1086.3 1037.9,1105.6"/>
<polygon fill="#d64e05" stroke="#d64e05" stroke-width=".7" stroke-linejoin="round" points="1017.4,1072.0 1058.4,1057.0 1076.2,1064.3 1037.4,1080.0"/>
<polygon fill="#bf4704" stroke="#bf4704" stroke-width=".7" stroke-linejoin="round" points="537.3,1406.9 557.4,1414.9 557.9,1440.4"/>
<polygon fill="#943404" stroke="#943404" stroke-width=".7" stroke-linejoin="round" points="557.4,1414.9 596.1,1399.1 596.6,1421.2 557.9,1440.4"/>
<polygon fill="#d64e05" stroke="#d64e05" stroke-width=".7" stroke-linejoin="round" points="537.3,1406.9 578.4,1391.9 596.1,1399.1 557.4,1414.9"/>
<polygon fill="#bf4704" stroke="#bf4704" stroke-width=".7" stroke-linejoin="round" points="585.4,1383.3 605.4,1391.3 605.9,1416.8"/>
<polygon fill="#943404" stroke="#943404" stroke-width=".7" stroke-linejoin="round" points="605.4,1391.3 644.2,1375.5 644.7,1397.6 605.9,1416.8"/>
<polygon fill="#d64e05" stroke="#d64e05" stroke-width=".7" stroke-linejoin="round" points="585.4,1383.3 626.5,1368.3 644.2,1375.5 605.4,1391.3"/>
<polygon fill="#bf4704" stroke="#bf4704" stroke-width=".7" stroke-linejoin="round" points="633.5,1359.7 653.5,1367.7 654.0,1393.2"/>
<polygon fill="#943404" stroke="#943404" stroke-width=".7" stroke-linejoin="round" points="653.5,1367.7 692.3,1351.9 692.8,1374.0 654.0,1393.2"/>
<polygon fill="#d64e05" stroke="#d64e05" stroke-width=".7" stroke-linejoin="round" points="633.5,1359.7 674.5,1344.7 692.3,1351.9 653.5,1367.7"/>
<polygon fill="#bf4704" stroke="#bf4704" stroke-width=".7" stroke-linejoin="round" points="681.6,1336.1 701.6,1344.1 702.1,1369.6"/>
<polygon fill="#943404" stroke="#943404" stroke-width=".7" stroke-linejoin="round" points="701.6,1344.1 740.4,1328.4 740.9,1350.4 702.1,1369.6"/>
<polygon fill="#d64e05" stroke="#d64e05" stroke-width=".7" stroke-linejoin="round" points="681.6,1336.1 722.6,1321.1 740.4,1328.4 701.6,1344.1"/>
<polygon fill="#bf4704" stroke="#bf4704" stroke-width=".7" stroke-linejoin="round" points="729.7,1312.5 749.7,1320.5 750.2,1346.0"/>
<polygon fill="#943404" stroke="#943404" stroke-width=".7" stroke-linejoin="round" points="749.7,1320.5 788.5,1304.8 789.0,1326.8 750.2,1346.0"/>
<polygon fill="#d64e05" stroke="#d64e05" stroke-width=".7" stroke-linejoin="round" points="729.7,1312.5 770.7,1297.5 788.5,1304.8 749.7,1320.5"/>
<polygon fill="#bf4704" stroke="#bf4704" stroke-width=".7" stroke-linejoin="round" points="777.8,1288.9 797.8,1296.9 798.3,1322.5"/>
<polygon fill="#943404" stroke="#943404" stroke-width=".7" stroke-linejoin="round" points="797.8,1296.9 836.6,1281.2 837.1,1303.2 798.3,1322.5"/>
<polygon fill="#d64e05" stroke="#d64e05" stroke-width=".7" stroke-linejoin="round" points="777.8,1288.9 818.8,1273.9 836.6,1281.2 797.8,1296.9"/>
<polygon fill="#bf4704" stroke="#bf4704" stroke-width=".7" stroke-linejoin="round" points="825.9,1265.3 845.9,1273.3 846.4,1298.9"/>
<polygon fill="#943404" stroke="#943404" stroke-width=".7" stroke-linejoin="round" points="845.9,1273.3 884.7,1257.6 885.2,1279.6 846.4,1298.9"/>
<polygon fill="#d64e05" stroke="#d64e05" stroke-width=".7" stroke-linejoin="round" points="825.9,1265.3 866.9,1250.3 884.7,1257.6 845.9,1273.3"/>
<polygon fill="#bf4704" stroke="#bf4704" stroke-width=".7" stroke-linejoin="round" points="874.0,1241.7 894.0,1249.7 894.5,1275.3"/>
<polygon fill="#943404" stroke="#943404" stroke-width=".7" stroke-linejoin="round" points="894.0,1249.7 932.8,1234.0 933.3,1256.0 894.5,1275.3"/>
<polygon fill="#d64e05" stroke="#d64e05" stroke-width=".7" stroke-linejoin="round" points="874.0,1241.7 915.0,1226.7 932.8,1234.0 894.0,1249.7"/>
<polygon fill="#bf4704" stroke="#bf4704" stroke-width=".7" stroke-linejoin="round" points="922.0,1218.1 942.1,1226.1 942.6,1251.7"/>
<polygon fill="#943404" stroke="#943404" stroke-width=".7" stroke-linejoin="round" points="942.1,1226.1 980.8,1210.4 981.3,1232.4 942.6,1251.7"/>
<polygon fill="#d64e05" stroke="#d64e05" stroke-width=".7" stroke-linejoin="round" points="922.0,1218.1 963.1,1203.1 980.8,1210.4 942.1,1226.1"/>
<polygon fill="#bf4704" stroke="#bf4704" stroke-width=".7" stroke-linejoin="round" points="535.1,1511.0 555.1,1519.0 555.6,1544.5"/>
<polygon fill="#943404" stroke="#943404" stroke-width=".7" stroke-linejoin="round" points="555.1,1519.0 593.9,1503.2 594.4,1525.3 555.6,1544.5"/>
<polygon fill="#d64e05" stroke="#d64e05" stroke-width=".7" stroke-linejoin="round" points="535.1,1511.0 576.1,1496.0 593.9,1503.2 555.1,1519.0"/>
<polygon fill="#bf4704" stroke="#bf4704" stroke-width=".7" stroke-linejoin="round" points="583.5,1486.9 603.5,1494.9 604.0,1520.4"/>
<polygon fill="#943404" stroke="#943404" stroke-width=".7" stroke-linejoin="round" points="603.5,1494.9 642.3,1479.1 642.8,1501.1 604.0,1520.4"/>
<polygon fill="#d64e05" stroke="#d64e05" stroke-width=".7" stroke-linejoin="round" points="583.5,1486.9 624.6,1471.8 642.3,1479.1 603.5,1494.9"/>
<polygon fill="#bf4704" stroke="#bf4704" stroke-width=".7" stroke-linejoin="round" points="631.9,1462.7 652.0,1470.7 652.5,1496.2"/>
<polygon fill="#943404" stroke="#943404" stroke-width=".7" stroke-linejoin="round" points="652.0,1470.7 690.7,1455.0 691.2,1477.0 652.5,1496.2"/>
<polygon fill="#d64e05" stroke="#d64e05" stroke-width=".7" stroke-linejoin="round" points="631.9,1462.7 673.0,1447.7 690.7,1455.0 652.0,1470.7"/>
<polygon fill="#bf4704" stroke="#bf4704" stroke-width=".7" stroke-linejoin="round" points="680.4,1438.6 700.4,1446.6 700.9,1472.1"/>
<polygon fill="#943404" stroke="#943404" stroke-width=".7" stroke-linejoin="round" points="700.4,1446.6 739.2,1430.8 739.7,1452.8 700.9,1472.1"/>
<polygon fill="#d64e05" stroke="#d64e05" stroke-width=".7" stroke-linejoin="round" points="680.4,1438.6 721.4,1423.6 739.2,1430.8 700.4,1446.6"/>
<polygon fill="#bf4704" stroke="#bf4704" stroke-width=".7" stroke-linejoin="round" points="728.8,1414.4 748.8,1422.4 749.3,1448.0"/>
<polygon fill="#943404" stroke="#943404" stroke-width=".7" stroke-linejoin="round" points="748.8,1422.4 787.6,1406.7 788.1,1428.7 749.3,1448.0"/>
<polygon fill="#d64e05" stroke="#d64e05" stroke-width=".7" stroke-linejoin="round" points="728.8,1414.4 769.8,1399.4 787.6,1406.7 748.8,1422.4"/>
<polygon fill="#bf4704" stroke="#bf4704" stroke-width=".7" stroke-linejoin="round" points="777.2,1390.3 797.2,1398.3 797.7,1423.8"/>
<polygon fill="#943404" stroke="#943404" stroke-width=".7" stroke-linejoin="round" points="797.2,1398.3 836.0,1382.5 836.5,1404.5 797.7,1423.8"/>
<polygon fill="#d64e05" stroke="#d64e05" stroke-width=".7" stroke-linejoin="round" points="777.2,1390.3 818.2,1375.3 836.0,1382.5 797.2,1398.3"/>
<polygon fill="#bf4704" stroke="#bf4704" stroke-width=".7" stroke-linejoin="round" points="531.9,1617.0 551.9,1625.0 552.4,1650.6"/>
<polygon fill="#943404" stroke="#943404" stroke-width=".7" stroke-linejoin="round" points="551.9,1625.0 590.7,1609.3 591.2,1631.3 552.4,1650.6"/>
<polygon fill="#d64e05" stroke="#d64e05" stroke-width=".7" stroke-linejoin="round" points="531.9,1617.0 573.0,1602.0 590.7,1609.3 551.9,1625.0"/>
<polygon fill="#bf4704" stroke="#bf4704" stroke-width=".7" stroke-linejoin="round" points="581.0,1592.5 601.0,1600.5 601.5,1626.0"/>
<polygon fill="#943404" stroke="#943404" stroke-width=".7" stroke-linejoin="round" points="601.0,1600.5 639.8,1584.8 640.3,1606.8 601.5,1626.0"/>
<polygon fill="#d64e05" stroke="#d64e05" stroke-width=".7" stroke-linejoin="round" points="581.0,1592.5 622.0,1577.5 639.8,1584.8 601.0,1600.5"/>
<polygon fill="#bf4704" stroke="#bf4704" stroke-width=".7" stroke-linejoin="round" points="630.0,1568.0 650.0,1576.0 650.5,1601.5"/>
<polygon fill="#943404" stroke="#943404" stroke-width=".7" stroke-linejoin="round" points="650.0,1576.0 688.8,1560.2 689.3,1582.3 650.5,1601.5"/>
<polygon fill="#d64e05" stroke="#d64e05" stroke-width=".7" stroke-linejoin="round" points="630.0,1568.0 671.0,1553.0 688.8,1560.2 650.0,1576.0"/>
<polygon fill="#943404" stroke="#943404" stroke-width=".7" stroke-linejoin="round" points="578.6,1614.6 592.5,1609.0 592.9,1626.7 578.6,1634.1 571.3,1631.9 570.8,1625.9 587.7,1618.5"/>
<polygon fill="#d64e05" stroke="#d64e05" stroke-width=".7" stroke-linejoin="round" points="557.4,1606.8 574.3,1599.8 592.5,1609.0 578.6,1614.6 587.7,1618.5 570.8,1625.9 557.4,1622.4"/>
<polygon fill="#5e2003" stroke="#5e2003" stroke-width=".7" stroke-linejoin="round" points="557.4,1622.4 570.8,1625.9 571.3,1658.4 557.4,1658.4"/>
<polygon fill="#943404" stroke="#943404" stroke-width=".7" stroke-linejoin="round" points="571.3,1631.9 578.6,1634.1 578.6,1658.4 571.3,1658.4"/>
<polygon fill="#5e2003" stroke="#5e2003" stroke-width=".7" stroke-linejoin="round" points="578.6,1635.0 616.8,1651.0 616.8,1658.4 578.6,1658.4"/>
<polygon fill="#8a4a04" stroke="#8a4a04" stroke-width=".7" stroke-linejoin="round" points="580.4,1637.1 616.8,1654.9 616.8,1656.7 580.4,1638.9"/>
<polygon fill="#943404" stroke="#943404" stroke-width=".7" stroke-linejoin="round" points="616.8,1650.6 633.7,1643.2 633.7,1652.8 624.6,1658.4 616.8,1658.4"/>
<polygon fill="#d64e05" stroke="#d64e05" stroke-width=".7" stroke-linejoin="round" points="578.6,1634.1 595.1,1626.3 633.7,1643.2 616.8,1650.6"/>
<polygon fill="#d64e05" stroke="#d64e05" stroke-width=".7" stroke-linejoin="round" points="624.6,1658.4 641.1,1651.0 657.6,1658.4"/>
<polygon fill="#bf4704" stroke="#bf4704" stroke-width=".7" stroke-linejoin="round" points="1072.9,1408.0 1387.7,1551.9 1387.7,1587.4 1355.0,1570.6 1312.0,1550.9 1265.3,1535.1 1219.5,1520.1 1173.8,1504.2 1128.0,1489.3 1081.3,1473.4 1070.1,1469.7 1052.3,1438.9"/>
<polygon fill="#943404" stroke="#943404" stroke-width=".7" stroke-linejoin="round" points="1081.3,1450.1 1088.7,1447.3 1088.7,1467.8 1081.3,1473.4"/>
<polygon fill="#943404" stroke="#943404" stroke-width=".7" stroke-linejoin="round" points="1113.0,1436.0 1120.5,1442.6 1120.5,1448.2 1113.0,1451.0"/>
<polygon fill="#943404" stroke="#943404" stroke-width=".7" stroke-linejoin="round" points="1128.0,1465.9 1134.5,1463.1 1134.5,1484.6 1128.0,1489.3"/>
<polygon fill="#943404" stroke="#943404" stroke-width=".7" stroke-linejoin="round" points="1161.6,1461.3 1168.1,1465.9 1168.1,1470.6 1161.6,1473.4"/>
<polygon fill="#943404" stroke="#943404" stroke-width=".7" stroke-linejoin="round" points="1173.8,1481.8 1180.3,1481.8 1180.3,1499.6 1173.8,1504.2"/>
<polygon fill="#943404" stroke="#943404" stroke-width=".7" stroke-linejoin="round" points="1209.2,1486.5 1214.9,1484.6 1214.9,1494.9 1209.2,1494.0"/>
<polygon fill="#943404" stroke="#943404" stroke-width=".7" stroke-linejoin="round" points="1219.5,1508.9 1226.1,1510.8 1226.1,1517.3 1219.5,1520.1"/>
<polygon fill="#943404" stroke="#943404" stroke-width=".7" stroke-linejoin="round" points="1256.9,1494.0 1263.4,1499.6 1263.4,1520.1 1256.9,1522.9"/>
<polygon fill="#943404" stroke="#943404" stroke-width=".7" stroke-linejoin="round" points="1305.5,1520.1 1312.0,1524.8 1312.0,1544.4 1305.5,1547.2"/>
<polygon fill="#943404" stroke="#943404" stroke-width=".7" stroke-linejoin="round" points="1355.0,1546.3 1362.4,1550.0 1362.4,1566.8 1355.0,1570.6"/>
<polygon fill="#d64e05" stroke="#d64e05" stroke-width=".7" stroke-linejoin="round" points="1052.3,1438.9 1072.9,1430.4 1097.2,1444.5 1081.3,1450.1"/>
<polygon fill="#d64e05" stroke="#d64e05" stroke-width=".7" stroke-linejoin="round" points="1088.7,1451.9 1097.2,1445.4 1134.5,1463.1 1128.0,1465.9"/>
<polygon fill="#d64e05" stroke="#d64e05" stroke-width=".7" stroke-linejoin="round" points="1134.5,1464.1 1161.6,1473.4 1180.3,1481.8 1173.8,1481.8"/>
<defs><linearGradient id="gTube" gradientUnits="userSpaceOnUse" x1="1180" y1="1190" x2="1095" y2="1420"><stop offset="0" stop-color="#7f4503"/><stop offset=".30" stop-color="#814603"/><stop offset=".31" stop-color="#884a04"/><stop offset=".47" stop-color="#884a04"/><stop offset=".48" stop-color="#8e4e05"/><stop offset=".64" stop-color="#8e4e05"/><stop offset=".65" stop-color="#955206"/><stop offset=".82" stop-color="#955206"/><stop offset=".83" stop-color="#9b5606"/><stop offset="1" stop-color="#9c5706"/></linearGradient></defs>
<polygon fill="url(#gTube)" points="1070.3,1168.0 1046.2,1212.1 1030.2,1260.1 1026.2,1308.1 1030.2,1348.1 1046.2,1388.1 1072.9,1417.4 1214.9,1484.6 1387.7,1566.8 1388.1,1356.1 1320.4,1380.1 1320.4,1124.0 1150.3,1112.0"/>
<polyline fill="none" stroke="#a86807" stroke-width="1.6" points="1072.9,1417.4 1214.9,1484.6 1387.7,1566.8"/>
<polygon fill="#bf4704" stroke="#bf4704" stroke-width=".7" stroke-linejoin="round" points="1091.1,1076.6 1119.4,1089.0 1158.1,1108.4 1135.3,1101.5 1118.0,1111.8 1096.6,1104.2 1092.0,1096.6"/>
<polygon fill="#d64e05" stroke="#d64e05" stroke-width=".7" stroke-linejoin="round" points="1091.1,1076.6 1111.8,1068.0 1140.1,1080.7 1159.4,1073.1 1198.8,1089.0 1194.0,1091.1 1176.0,1083.9 1167.7,1084.9 1160.1,1089.0 1177.4,1098.0 1158.1,1108.4 1119.4,1089.0"/>
<polygon fill="#943404" stroke="#943404" stroke-width=".7" stroke-linejoin="round" points="1275.4,1107.3 1296.8,1099.1 1296.8,1105.6 1279.6,1107.9"/>
<polygon fill="#d64e05" stroke="#d64e05" stroke-width=".7" stroke-linejoin="round" points="1238.1,1089.0 1256.1,1081.8 1296.8,1099.1 1275.4,1107.3"/>
<polygon fill="#d64e05" stroke="#d64e05" stroke-width=".7" stroke-linejoin="round" points="1198.1,1095.2 1207.1,1091.8 1247.1,1108.4 1235.4,1113.2"/>
<polygon fill="#bf4704" stroke="#bf4704" stroke-width=".7" stroke-linejoin="round" points="1166.1,1109.0 1206.4,1125.3 1206.4,1127.7 1166.1,1111.5"/>
<polygon fill="#d64e05" stroke="#d64e05" stroke-width=".7" stroke-linejoin="round" points="1166.1,1109.0 1188.4,1099.7 1225.7,1116.6 1206.4,1125.3"/>
<polygon fill="#d64e05" stroke="#d64e05" stroke-width=".7" stroke-linejoin="round" points="1239.5,1117.3 1256.1,1110.8 1296.1,1127.0 1276.1,1135.0"/>
<polygon fill="#bf4704" stroke="#bf4704" stroke-width=".7" stroke-linejoin="round" points="1214.0,1128.4 1254.7,1144.7 1254.7,1147.0 1214.0,1130.5"/>
<polygon fill="#d64e05" stroke="#d64e05" stroke-width=".7" stroke-linejoin="round" points="1214.0,1128.4 1237.5,1118.4 1274.7,1135.3 1254.7,1144.7"/>
<polygon fill="#d64e05" stroke="#d64e05" stroke-width=".7" stroke-linejoin="round" points="1286.5,1111.1 1305.1,1099.7 1318.2,1104.9 1318.2,1124.9"/>
<polygon fill="#d64e05" stroke="#d64e05" stroke-width=".7" stroke-linejoin="round" points="1285.1,1138.3 1304.4,1130.2 1318.2,1136.0 1318.2,1154.6"/>
<polygon fill="#bf4704" stroke="#bf4704" stroke-width=".7" stroke-linejoin="round" points="1262.7,1148.4 1303.7,1163.6 1303.7,1165.9 1262.7,1150.5"/>
<polygon fill="#d64e05" stroke="#d64e05" stroke-width=".7" stroke-linejoin="round" points="1262.7,1148.4 1282.3,1139.7 1318.2,1157.4 1303.7,1163.6"/>
<polygon fill="#d64e05" stroke="#d64e05" stroke-width=".7" stroke-linejoin="round" points="1311.3,1167.1 1318.2,1164.3 1318.2,1171.9"/>
<polygon fill="#bf4704" stroke="#bf4704" stroke-width=".7" stroke-linejoin="round" points="1069.0,1126.3 1109.0,1142.5 1109.0,1156.7 1084.2,1149.1 1069.0,1167.1"/>
<polygon fill="#943404" stroke="#943404" stroke-width=".7" stroke-linejoin="round" points="1109.0,1142.5 1128.4,1134.3 1116.6,1143.6 1109.0,1156.7"/>
<polygon fill="#d64e05" stroke="#d64e05" stroke-width=".7" stroke-linejoin="round" points="1069.0,1126.3 1108.3,1109.7 1118.0,1112.5 1107.0,1123.5 1128.4,1134.3 1109.0,1142.5"/>
<polygon fill="#bf4704" stroke="#bf4704" stroke-width=".7" stroke-linejoin="round" points="1116.9,1143.9 1157.4,1160.4 1157.4,1172.9 1116.9,1159.5"/>
<polygon fill="#943404" stroke="#943404" stroke-width=".7" stroke-linejoin="round" points="1157.4,1160.4 1176.0,1152.1 1165.6,1160.8 1157.4,1172.9"/>
<polygon fill="#d64e05" stroke="#d64e05" stroke-width=".7" stroke-linejoin="round" points="1116.9,1143.9 1138.7,1135.0 1176.0,1152.1 1157.4,1160.4"/>
<polygon fill="#bf4704" stroke="#bf4704" stroke-width=".7" stroke-linejoin="round" points="1165.4,1161.3 1205.8,1177.8 1205.8,1190.3 1165.4,1176.9"/>
<polygon fill="#943404" stroke="#943404" stroke-width=".7" stroke-linejoin="round" points="1205.8,1177.8 1224.5,1169.5 1214.1,1178.2 1205.8,1190.3"/>
<polygon fill="#d64e05" stroke="#d64e05" stroke-width=".7" stroke-linejoin="round" points="1165.4,1161.3 1187.2,1152.4 1224.5,1169.5 1205.8,1177.8"/>
<polygon fill="#bf4704" stroke="#bf4704" stroke-width=".7" stroke-linejoin="round" points="1213.8,1178.7 1254.3,1195.2 1254.3,1207.7 1213.8,1194.3"/>
<polygon fill="#943404" stroke="#943404" stroke-width=".7" stroke-linejoin="round" points="1254.3,1195.2 1272.9,1186.9 1262.6,1195.6 1254.3,1207.7"/>
<polygon fill="#d64e05" stroke="#d64e05" stroke-width=".7" stroke-linejoin="round" points="1213.8,1178.7 1235.7,1169.8 1272.9,1186.9 1254.3,1195.2"/>
<polygon fill="#bf4704" stroke="#bf4704" stroke-width=".7" stroke-linejoin="round" points="1262.3,1196.1 1302.8,1212.6 1302.8,1225.1 1262.3,1211.7"/>
<polygon fill="#943404" stroke="#943404" stroke-width=".7" stroke-linejoin="round" points="1302.8,1212.6 1321.4,1204.3 1311.1,1213.0 1302.8,1225.1"/>
<polygon fill="#d64e05" stroke="#d64e05" stroke-width=".7" stroke-linejoin="round" points="1262.3,1196.1 1284.1,1187.2 1321.4,1204.3 1302.8,1212.6"/>
<polygon fill="#bf4704" stroke="#bf4704" stroke-width=".7" stroke-linejoin="round" points="1311.1,1216.1 1318.2,1213.3 1318.2,1229.9 1311.1,1226.4"/>
<polygon fill="#bf4704" stroke="#bf4704" stroke-width=".7" stroke-linejoin="round" points="1310.4,1214.1 1320.4,1210.1 1320.4,1230.1 1312.4,1227.3"/>
<polygon fill="#d64e05" stroke="#d64e05" stroke-width=".7" stroke-linejoin="round" points="1310.4,1164.0 1320.4,1160.0 1320.4,1174.0"/>
<polygon fill="#bf4704" stroke="#bf4704" stroke-width=".7" stroke-linejoin="round" points="1212.3,1258.1 1234.3,1247.3 1272.4,1263.3 1262.4,1270.1 1262.4,1300.1 1254.4,1303.3 1212.3,1288.1"/>
<polygon fill="#d64e05" stroke="#d64e05" stroke-width=".7" stroke-linejoin="round" points="1212.3,1258.1 1234.3,1247.3 1272.4,1263.3 1254.4,1272.1"/>
<polygon fill="#bf4704" stroke="#bf4704" stroke-width=".7" stroke-linejoin="round" points="1262.4,1270.1 1282.4,1263.3 1320.4,1280.1 1320.4,1316.1 1304.4,1318.1 1262.4,1300.1"/>
<polygon fill="#d64e05" stroke="#d64e05" stroke-width=".7" stroke-linejoin="round" points="1262.4,1270.1 1282.4,1263.3 1320.4,1280.1 1304.4,1288.1"/>
<polygon fill="#bf4704" stroke="#bf4704" stroke-width=".7" stroke-linejoin="round" points="1310.4,1288.1 1320.4,1284.9 1320.4,1322.1 1310.4,1319.3"/>
<polygon fill="#d97706" stroke="#d97706" stroke-width=".7" stroke-linejoin="round" points="1332.0,1034.0 1600.0,947.0 1642.0,931.0 1660.0,922.0 1700.0,902.0 1900.0,1240.0 1900.0,1400.0 1332.0,1400.0"/>
<polygon fill="#dc7e06" stroke="#dc7e06" stroke-width=".7" stroke-linejoin="round" points="1317.5,1045.1 1331.3,1038.9 1333.6,1300.0 1333.6,1365.4 1328.0,1377.5 1322.9,1391.5 1321.0,1404.6 1320.1,1404.6"/>
<polygon fill="#bf4704" stroke="#bf4704" stroke-width=".7" stroke-linejoin="round" points="1850.0,1200.0 1894.0,1225.0 1894.0,1658.0 1850.0,1658.0"/>
<polygon fill="#bf4704" stroke="#bf4704" stroke-width=".7" stroke-linejoin="round" points="1733.3,1125.2 1750.4,1130.2 1750.4,1145.2 1733.3,1137.7"/>
<polygon fill="#bf4704" stroke="#bf4704" stroke-width=".7" stroke-linejoin="round" points="1785.4,1135.2 1799.9,1140.2 1799.1,1171.5 1785.4,1165.7"/>
<polygon fill="#bf4704" stroke="#bf4704" stroke-width=".7" stroke-linejoin="round" points="1837.2,1160.2 1847.9,1165.2 1847.2,1235.1 1837.9,1230.3"/>
<polygon fill="#bf4704" stroke="#bf4704" stroke-width=".7" stroke-linejoin="round" points="1836.8,1190.0 1850.0,1195.0 1850.0,1240.0 1836.8,1232.0"/>
<polygon fill="#943404" stroke="#943404" stroke-width=".7" stroke-linejoin="round" points="1894.0,845.0 2002.0,812.0 2124.0,770.0 2119.5,1658.0 1894.0,1658.0"/>
<polygon fill="#d64e05" stroke="#d64e05" stroke-width=".7" stroke-linejoin="round" points="1681.2,881.2 2124.0,741.0 2124.0,775.0 1701.0,891.0"/>
<defs><linearGradient id="gBev" gradientUnits="userSpaceOnUse" x1="1400" y1="1250" x2="1520" y2="1330"><stop offset="0" stop-color="#ffc107"/><stop offset=".6" stop-color="#ffb306"/><stop offset="1" stop-color="#ffa204"/></linearGradient></defs>
<polygon fill="url(#gBev)" points="1322.0,1404.2 1330.0,1376.1 1354.1,1336.1 1390.1,1288.1 1442.1,1236.1 1490.1,1190.0 1538.1,1159.2 1594.2,1130.0 1642.2,1095.2 1662.2,1096.0 1690.2,1104.0 1742.2,1116.0 1786.3,1152.0 1650.2,1136.0 1594.2,1156.0 1538.1,1192.0 1490.1,1236.1 1450.1,1288.1 1422.1,1336.1 1402.1,1376.1 1388.1,1420.2 1376.1,1416.6 1336.0,1406.2"/>
<polygon fill="#ff9d04" stroke="#ff9d04" stroke-width=".7" stroke-linejoin="round" points="1640.2,1095.2 1662.2,1096.0 1690.2,1104.0 1730.2,1114.0 1786.3,1152.0 1742.2,1134.0 1690.2,1130.0 1650.2,1136.0 1634.2,1128.0"/>
<polygon fill="#d97706" stroke="#d97706" stroke-width=".7" stroke-linejoin="round" points="1388.1,1658.3 1388.1,1420.2 1402.1,1376.1 1422.1,1336.1 1450.1,1288.1 1490.1,1236.1 1538.1,1192.0 1594.2,1156.0 1650.2,1136.0 1690.2,1130.0 1742.2,1134.0 1786.3,1152.0 1818.3,1176.0 1850.3,1212.1 1870.3,1252.1 1882.3,1292.1 1886.3,1340.1 1882.3,1404.2 1870.3,1460.2 1850.3,1520.2 1826.3,1572.2 1802.3,1616.3 1782.3,1658.3"/>
<defs><clipPath id="cHole"><polygon points="1662.2,1287.3 1622.2,1296.1 1586.2,1316.1 1550.2,1348.1 1518.1,1388.1 1498.1,1432.2 1486.1,1480.2 1480.1,1524.2 1484.1,1560.2 1494.1,1592.2 1514.1,1620.3 1542.1,1640.3 1582.2,1652.3 1622.2,1640.3 1662.2,1612.3 1698.2,1572.2 1726.2,1532.2 1746.2,1492.2 1760.3,1456.2 1766.3,1416.2 1762.3,1372.1 1746.2,1336.1 1722.2,1308.1 1690.2,1292.1"/></clipPath>
<linearGradient id="gHole" gradientUnits="userSpaceOnUse" x1="1691.7" y1="1314.3" x2="1544.7" y2="1633.8"><stop offset="0" stop-color="#c96f06"/><stop offset=".074" stop-color="#c96f06"/><stop offset=".075" stop-color="#f88a03"/><stop offset=".173" stop-color="#f88a03"/><stop offset=".174" stop-color="#ff9d04"/><stop offset=".272" stop-color="#ff9d04"/><stop offset=".273" stop-color="#ffa905"/><stop offset=".371" stop-color="#ffa905"/><stop offset=".372" stop-color="#ffb306"/><stop offset=".47" stop-color="#ffb306"/><stop offset=".471" stop-color="#ffbd06"/><stop offset=".703" stop-color="#ffbd06"/><stop offset=".704" stop-color="#ffb706"/><stop offset=".823" stop-color="#ffb706"/><stop offset=".824" stop-color="#ffab05"/><stop offset=".915" stop-color="#ffab05"/><stop offset=".916" stop-color="#ff9d04"/><stop offset="1" stop-color="#ff9d04"/></linearGradient></defs>
<g clip-path="url(#cHole)">
<polygon fill="url(#gHole)" points="1450.1,1260.1 1810.3,1260.1 1810.3,1680.3 1450.1,1680.3"/>
<polygon fill="#8f4f05" stroke="#8f4f05" stroke-width=".7" stroke-linejoin="round" points="1690.2,1292.1 1722.2,1308.1 1748.2,1336.9 1690.2,1300.1"/>
<polygon fill="#c96f06" stroke="#c96f06" stroke-width=".7" stroke-linejoin="round" points="1690.2,1300.1 1748.2,1336.9 1762.3,1372.1 1690.2,1340.1"/>
<polygon fill="#bf4704" stroke="#bf4704" stroke-width=".7" stroke-linejoin="round" points="1510.1,1408.2 1552.2,1360.1 1552.2,1642.3 1510.1,1616.3"/>
<polygon fill="#943404" stroke="#943404" stroke-width=".7" stroke-linejoin="round" points="1552.2,1360.1 1593.4,1316.1 1593.4,1632.3 1564.2,1643.5 1552.2,1642.3"/>
<polygon fill="#bf4704" stroke="#bf4704" stroke-width=".7" stroke-linejoin="round" points="1609.0,1302.1 1651.4,1288.1 1651.4,1585.0 1609.0,1567.4"/>
<polygon fill="#943404" stroke="#943404" stroke-width=".7" stroke-linejoin="round" points="1651.4,1288.1 1690.2,1292.1 1690.2,1548.2 1668.2,1578.2 1651.4,1585.0"/>
</g>
<polygon fill="#d64e05" stroke="#d64e05" stroke-width=".7" stroke-linejoin="round" points="1377.5,1007.5 1622.5,928.0 1643.0,935.5 1398.8,1015.5"/>
<polygon fill="#bf4704" stroke="#bf4704" stroke-width=".7" stroke-linejoin="round" points="1391.2,1014.0 1398.8,1015.5 1398.8,1312.0 1391.2,1309.0"/>
<polygon fill="#943404" stroke="#943404" stroke-width=".7" stroke-linejoin="round" points="1398.8,1015.5 1442.2,999.3 1442.2,1292.0 1420.5,1300.0 1398.8,1312.0"/>
<polygon fill="#d64e05" stroke="#d64e05" stroke-width=".7" stroke-linejoin="round" points="1377.8,1007.5 1422.8,991.0 1442.8,999.3 1398.8,1015.5 1391.2,1014.0"/>
<polygon fill="#bf4704" stroke="#bf4704" stroke-width=".7" stroke-linejoin="round" points="1441.5,997.9 1449.0,999.4 1449.0,1238.0 1441.5,1235.0"/>
<polygon fill="#943404" stroke="#943404" stroke-width=".7" stroke-linejoin="round" points="1449.0,999.4 1492.5,983.2 1492.5,1208.0 1470.8,1225.0 1449.0,1238.0"/>
<polygon fill="#d64e05" stroke="#d64e05" stroke-width=".7" stroke-linejoin="round" points="1428.0,991.4 1473.0,974.9 1493.0,983.2 1449.0,999.4 1441.5,997.9"/>
<polygon fill="#bf4704" stroke="#bf4704" stroke-width=".7" stroke-linejoin="round" points="1491.8,981.8 1499.3,983.3 1499.3,1187.0 1491.8,1184.0"/>
<polygon fill="#943404" stroke="#943404" stroke-width=".7" stroke-linejoin="round" points="1499.3,983.3 1542.8,967.1 1542.8,1161.0 1521.1,1178.0 1499.3,1187.0"/>
<polygon fill="#d64e05" stroke="#d64e05" stroke-width=".7" stroke-linejoin="round" points="1478.3,975.3 1523.3,958.8 1543.3,967.1 1499.3,983.3 1491.8,981.8"/>
<polygon fill="#bf4704" stroke="#bf4704" stroke-width=".7" stroke-linejoin="round" points="1542.2,965.7 1549.7,967.2 1549.7,1150.7 1542.2,1147.7"/>
<polygon fill="#943404" stroke="#943404" stroke-width=".7" stroke-linejoin="round" points="1549.7,967.2 1593.2,951.0 1593.2,1131.0 1571.4,1142.0 1549.7,1150.7"/>
<polygon fill="#d64e05" stroke="#d64e05" stroke-width=".7" stroke-linejoin="round" points="1528.7,959.2 1573.7,942.7 1593.7,951.0 1549.7,967.2 1542.2,965.7"/>
<polygon fill="#bf4704" stroke="#bf4704" stroke-width=".7" stroke-linejoin="round" points="1592.5,949.6 1600.0,951.1 1600.0,1128.0 1592.5,1125.0"/>
<polygon fill="#943404" stroke="#943404" stroke-width=".7" stroke-linejoin="round" points="1600.0,951.1 1643.5,934.9 1643.5,1111.0 1621.7,1120.0 1600.0,1128.0"/>
<polygon fill="#d64e05" stroke="#d64e05" stroke-width=".7" stroke-linejoin="round" points="1579.0,943.1 1624.0,926.6 1644.0,934.9 1600.0,951.1 1592.5,949.6"/>
<polygon fill="#ffb606" stroke="#ffb606" stroke-width=".7" stroke-linejoin="round" points="1333.6,1365.4 1333.6,1405.1 1321.0,1404.6 1322.9,1391.5 1328.0,1377.5"/>
<polygon fill="#ffb606" stroke="#ffb606" stroke-width=".7" stroke-linejoin="round" points="1350.9,1355.6 1375.6,1359.3 1376.1,1416.3 1334.6,1402.7 1339.2,1385.9 1344.8,1370.0"/>
<polygon fill="#5e2003" stroke="#5e2003" stroke-width=".7" stroke-linejoin="round" points="1331.3,1005.1 1373.8,1021.4 1375.6,1359.3 1350.9,1355.6 1344.8,1370.0 1339.2,1385.9 1334.6,1402.7 1333.6,1405.1"/>
<polygon fill="#943404" stroke="#943404" stroke-width=".7" stroke-linejoin="round" points="1373.8,1021.4 1391.3,1014.6 1392.9,1365.4 1387.8,1379.4 1382.2,1398.1 1376.6,1416.3 1376.1,1416.3 1375.6,1359.3"/>
<polygon fill="#d64e05" stroke="#d64e05" stroke-width=".7" stroke-linejoin="round" points="1331.3,1005.1 1348.8,997.6 1391.3,1013.9 1373.8,1021.4"/>
<polygon fill="#5e2003" stroke="#5e2003" stroke-width=".7" stroke-linejoin="round" points="1333.6,1405.1 1334.6,1402.7 1376.1,1416.3 1376.1,1427.9 1334.1,1410.7"/>
<polygon fill="#943404" stroke="#943404" stroke-width=".7" stroke-linejoin="round" points="1376.1,1416.3 1387.8,1420.5 1387.8,1424.2 1376.1,1427.9"/>
<polygon fill="#9d5505" stroke="#9d5505" stroke-width=".7" stroke-linejoin="round" points="1331.3,1032.6 1350.0,1025.1 1382.6,987.6 1357.5,998.9 1331.3,1020.1"/>
<polygon fill="#bf4704" stroke="#bf4704" stroke-width=".7" stroke-linejoin="round" points="1658.8,900.0 1681.2,881.2 1701.2,890.5 1701.2,1140.5 1658.8,1116.0"/>
<polygon fill="#943404" stroke="#943404" stroke-width=".7" stroke-linejoin="round" points="1701.2,890.5 1742.5,874.5 1742.5,1122.5 1701.2,1140.5"/>
<polygon fill="#d64e05" stroke="#d64e05" stroke-width=".7" stroke-linejoin="round" points="1681.2,881.0 1722.8,866.2 1743.0,874.5 1701.2,890.5 1693.8,889.0"/>
<polygon fill="#bf4704" stroke="#bf4704" stroke-width=".7" stroke-linejoin="round" points="1742.5,873.7 1750.0,875.2 1750.0,1145.0 1742.5,1142.0"/>
<polygon fill="#943404" stroke="#943404" stroke-width=".7" stroke-linejoin="round" points="1750.0,875.2 1791.2,859.2 1791.2,1128.8 1750.0,1145.0"/>
<polygon fill="#d64e05" stroke="#d64e05" stroke-width=".7" stroke-linejoin="round" points="1730.0,865.7 1771.5,850.9 1791.8,859.2 1750.0,875.2 1742.5,873.7"/>
<polygon fill="#bf4704" stroke="#bf4704" stroke-width=".7" stroke-linejoin="round" points="1791.2,858.4 1798.8,859.9 1798.8,1171.0 1791.2,1168.0"/>
<polygon fill="#943404" stroke="#943404" stroke-width=".7" stroke-linejoin="round" points="1798.8,859.9 1840.0,843.9 1840.0,1154.5 1798.8,1171.0"/>
<polygon fill="#d64e05" stroke="#d64e05" stroke-width=".7" stroke-linejoin="round" points="1778.8,850.4 1820.2,835.6 1840.5,843.9 1798.8,859.9 1791.2,858.4"/>
<polygon fill="#bf4704" stroke="#bf4704" stroke-width=".7" stroke-linejoin="round" points="1840.0,843.1 1847.5,844.6 1847.5,1234.0 1840.0,1231.0"/>
<polygon fill="#943404" stroke="#943404" stroke-width=".7" stroke-linejoin="round" points="1847.5,844.6 1888.8,828.6 1888.8,1217.0 1847.5,1234.0"/>
<polygon fill="#d64e05" stroke="#d64e05" stroke-width=".7" stroke-linejoin="round" points="1827.5,835.1 1869.0,820.3 1889.2,828.6 1847.5,844.6 1840.0,843.1"/>
<polygon fill="#bf4704" stroke="#bf4704" stroke-width=".7" stroke-linejoin="round" points="1888.8,827.8 1896.2,829.3 1890.2,1660.0 1882.8,1660.0"/>
<polygon fill="#943404" stroke="#943404" stroke-width=".7" stroke-linejoin="round" points="1896.2,829.3 1937.5,813.3 1931.5,1660.0 1890.2,1660.0"/>
<polygon fill="#d64e05" stroke="#d64e05" stroke-width=".7" stroke-linejoin="round" points="1876.2,819.8 1917.8,805.0 1938.0,813.3 1896.2,829.3 1888.8,827.8"/>
<polygon fill="#bf4704" stroke="#bf4704" stroke-width=".7" stroke-linejoin="round" points="1937.5,812.5 1945.0,814.0 1939.0,1660.0 1931.5,1660.0"/>
<polygon fill="#943404" stroke="#943404" stroke-width=".7" stroke-linejoin="round" points="1945.0,814.0 1986.2,798.0 1980.2,1660.0 1939.0,1660.0"/>
<polygon fill="#d64e05" stroke="#d64e05" stroke-width=".7" stroke-linejoin="round" points="1925.0,804.5 1966.5,789.7 1986.8,798.0 1945.0,814.0 1937.5,812.5"/>
<polygon fill="#bf4704" stroke="#bf4704" stroke-width=".7" stroke-linejoin="round" points="1986.2,797.2 1993.8,798.7 1987.8,1660.0 1980.2,1660.0"/>
<polygon fill="#943404" stroke="#943404" stroke-width=".7" stroke-linejoin="round" points="1993.8,798.7 2035.0,782.7 2029.0,1660.0 1987.8,1660.0"/>
<polygon fill="#d64e05" stroke="#d64e05" stroke-width=".7" stroke-linejoin="round" points="1973.8,789.2 2015.2,774.4 2035.5,782.7 1993.8,798.7 1986.2,797.2"/>
<polygon fill="#bf4704" stroke="#bf4704" stroke-width=".7" stroke-linejoin="round" points="2035.0,781.9 2042.5,783.4 2036.5,1660.0 2029.0,1660.0"/>
<polygon fill="#943404" stroke="#943404" stroke-width=".7" stroke-linejoin="round" points="2042.5,783.4 2083.8,767.4 2077.8,1660.0 2036.5,1660.0"/>
<polygon fill="#d64e05" stroke="#d64e05" stroke-width=".7" stroke-linejoin="round" points="2022.5,773.9 2064.0,759.1 2084.2,767.4 2042.5,783.4 2035.0,781.9"/>
<polygon fill="#bf4704" stroke="#bf4704" stroke-width=".7" stroke-linejoin="round" points="2083.8,766.6 2091.2,768.1 2085.2,1660.0 2077.8,1660.0"/>
<polygon fill="#943404" stroke="#943404" stroke-width=".7" stroke-linejoin="round" points="2091.2,768.1 2124.0,752.1 2119.5,1660.0 2085.2,1660.0"/>
<polygon fill="#d64e05" stroke="#d64e05" stroke-width=".7" stroke-linejoin="round" points="2071.2,758.6 2112.8,743.8 2124.5,752.1 2091.2,768.1 2083.8,766.6"/>
<polygon fill="#bf4704" stroke="#bf4704" stroke-width=".7" stroke-linejoin="round" points="1733.3,1125.2 1750.4,1130.2 1750.4,1145.2 1733.3,1137.7"/>
<polygon fill="#bf4704" stroke="#bf4704" stroke-width=".7" stroke-linejoin="round" points="1785.4,1135.2 1799.9,1140.2 1799.1,1171.5 1785.4,1165.7"/>
<polygon fill="#bf4704" stroke="#bf4704" stroke-width=".7" stroke-linejoin="round" points="1837.2,1160.2 1847.9,1165.2 1847.2,1230.3 1837.9,1226.5"/>
<polygon fill="#bf4704" stroke="#bf4704" stroke-width=".7" stroke-linejoin="round" points="1784.3,1632.3 1814.3,1612.3 1797.5,1636.3 1797.5,1658.3 1784.3,1658.3"/>
<polygon fill="#d64e05" stroke="#d64e05" stroke-width=".7" stroke-linejoin="round" points="1784.3,1632.3 1814.3,1612.3 1837.5,1620.3 1797.5,1636.3"/>
<polygon fill="#943404" stroke="#943404" stroke-width=".7" stroke-linejoin="round" points="1797.5,1636.3 1837.5,1620.3 1837.5,1658.3 1797.5,1658.3"/>
<line x1="1681" y1="65" x2="1681" y2="1658" stroke="#bcbcbc" stroke-width="1.3" opacity=".75"/>
<line x1="912" y1="65" x2="912" y2="110" stroke="#a8a8a8" stroke-width="1.2"/>
<g stroke="#7f8a8a" stroke-width="1.1" stroke-dasharray="4 3" opacity=".42" fill="none">
<line x1="666.1" y1="1630.3" x2="726.1" y2="1656.3"/>
<line x1="750.1" y1="1598.2" x2="886.2" y2="1656.3"/>
<line x1="836.1" y1="1566.2" x2="1048.2" y2="1656.3"/>
<line x1="922.2" y1="1534.2" x2="1206.3" y2="1656.3"/>
<line x1="1006.2" y1="1503.4" x2="1350.0" y2="1650.3"/>
<line x1="642.0" y1="1656.3" x2="934.2" y2="1529.0"/>
<line x1="782.1" y1="1656.3" x2="1134.3" y2="1509.0"/>
<line x1="940.2" y1="1656.3" x2="1200.3" y2="1546.2"/>
<line x1="1098.3" y1="1656.3" x2="1276.4" y2="1580.2"/>
<line x1="1254.4" y1="1656.3" x2="1350.0" y2="1616.3"/>
</g>
</svg>

</div>

<!-- ===== right toolbar ===== -->
<div id="toolbar"></div>
<div class="abs" style="left:2873px;top:42px;width:2px;height:1642px;background:#e9e9e9"></div>
<svg class="abs" style="left:0;top:0;pointer-events:none" width="2875" height="1749" viewBox="0 0 2875 1749">
<defs><filter id="bl" x="-10%" y="-10%" width="120%" height="130%"><feGaussianBlur stdDeviation="0.9"/></filter><filter id="sh" x="-20%" y="-20%" width="140%" height="150%"><feGaussianBlur stdDeviation="2.2"/></filter><linearGradient id="pr" x1="0" y1="0" x2="0" y2="1"><stop offset="0" stop-color="#dedede"/><stop offset=".35" stop-color="#adadad"/><stop offset=".6" stop-color="#a8a8a8"/><stop offset="1" stop-color="#cdcdcd"/></linearGradient><linearGradient id="prs" x1="0" y1="0" x2="1" y2="0"><stop offset="0" stop-color="#000" stop-opacity=".28"/><stop offset=".08" stop-color="#000" stop-opacity="0"/><stop offset=".94" stop-color="#000" stop-opacity="0"/><stop offset="1" stop-color="#000" stop-opacity=".2"/></linearGradient></defs>
<circle cx="2803" cy="60" r="1.7" fill="#787878"/>
<circle cx="2815" cy="60" r="1.7" fill="#787878"/>
<circle cx="2827" cy="60" r="1.7" fill="#787878"/>
<circle cx="2839" cy="60" r="1.7" fill="#787878"/>
<circle cx="2851" cy="60" r="1.7" fill="#787878"/>
<rect x="2789" y="445" width="84" height="92.5" fill="url(#pr)"/><rect x="2789" y="445" width="84" height="92.5" fill="url(#prs)"/>
<rect x="2789" y="539.5" width="84" height="90" fill="url(#pr)"/><rect x="2789" y="539.5" width="84" height="90" fill="url(#prs)"/>
<rect x="2789" y="918" width="84" height="79.5" fill="url(#pr)"/><rect x="2789" y="918" width="84" height="79.5" fill="url(#prs)"/>
<polygon points="2803,122.0 2838,138.0 2860,122.0 2838,130.0" fill="#000" opacity=".25" filter="url(#sh)"/>
<polygon points="2803,214.3 2838,230.3 2860,214.3 2838,222.3" fill="#000" opacity=".25" filter="url(#sh)"/>
<polygon points="2803,306.6 2838,322.6 2860,306.6 2838,314.6" fill="#000" opacity=".25" filter="url(#sh)"/>
<polygon points="2803,398.9 2838,414.9 2860,398.9 2838,406.9" fill="#000" opacity=".25" filter="url(#sh)"/>
<polygon points="2803,603.0 2838,619.0 2860,603.0 2838,611.0" fill="#000" opacity=".25" filter="url(#sh)"/>
<g filter="url(#bl)"><polygon points="2801.5,84.0 2829,78.0 2861.2,84.0 2838,94.5" fill="#7f9db6"/><polygon points="2801.5,84.0 2838,94.5 2837.5,136.6 2805,123.0" fill="#7894aa"/><polygon points="2838,94.5 2861.2,84.0 2856.7,121.6 2837.5,136.6" fill="#6e8699"/></g>
<g filter="url(#bl)"><polygon points="2801.5,176.3 2829,170.3 2861.2,176.3 2838,186.8" fill="#7092b3"/><polygon points="2801.5,176.3 2838,186.8 2837.5,228.9 2805,215.3" fill="#b9b9b9"/><polygon points="2838,186.8 2861.2,176.3 2856.7,213.9 2837.5,228.9" fill="#868686"/></g>
<g filter="url(#bl)"><polygon points="2801.5,268.6 2829,262.6 2861.2,268.6 2838,279.1" fill="#9b9b9b"/><polygon points="2801.5,268.6 2838,279.1 2837.5,321.2 2805,307.6" fill="#7995ad"/><polygon points="2838,279.1 2861.2,268.6 2856.7,306.2 2837.5,321.2" fill="#868686"/></g>
<g filter="url(#bl)"><polygon points="2801.5,360.9 2829,354.9 2861.2,360.9 2838,371.4" fill="#9f9f9f"/><polygon points="2801.5,360.9 2838,371.4 2837.5,413.5 2805,399.9" fill="#b9b9b9"/><polygon points="2838,371.4 2861.2,360.9 2856.7,398.5 2837.5,413.5" fill="#6e8699"/></g>
<g filter="url(#bl)"><polygon points="2801.5,565.0 2829,559.0 2861.2,565.0 2838,575.5" fill="#b0b0b0"/><polygon points="2801.5,565.0 2838,575.5 2837.5,617.6 2805,604.0" fill="#b7b7b7"/><polygon points="2838,575.5 2861.2,565.0 2856.7,602.6 2837.5,617.6" fill="#8b8b8b"/></g>
<line x1="2793" y1="439" x2="2874" y2="439" stroke="#4a4a4a" stroke-width="1.8" stroke-dasharray="1.8 3.9"/>
<line x1="2793" y1="1011" x2="2874" y2="1011" stroke="#4a4a4a" stroke-width="1.8" stroke-dasharray="1.8 3.9"/>
<line x1="2793" y1="1122.8" x2="2874" y2="1122.8" stroke="#4a4a4a" stroke-width="1.8" stroke-dasharray="1.8 3.9"/>
<g stroke-width="3.6" stroke-linecap="butt"><line x1="2820" y1="510" x2="2820" y2="478" stroke="#0a0af5"/><polygon points="2815.5,480 2820,466 2824.5,480" fill="#0a0af5"/><line x1="2820" y1="509.5" x2="2841" y2="498" stroke="#12d21c"/><polygon points="2838,493 2848,494 2841.5,502" fill="#12d21c"/><line x1="2820" y1="509.5" x2="2846" y2="519" stroke="#f21414"/><polygon points="2846,514 2855,522.5 2843.5,523" fill="#f21414"/></g>
<g fill="none" stroke="#474747" stroke-width="1.5" stroke-linejoin="round"><polygon points="2801.5,656.6 2829,650.6 2861.2,656.6 2838.7,667"/><polyline points="2801.5,656.6 2805,695.7 2837.5,709 2856.7,691 2861.2,656.6"/><line x1="2838.7" y1="667" x2="2837.5" y2="709"/><polyline points="2805,695.7 2827.6,683.6 2856.7,691"/><line x1="2829" y1="650.6" x2="2827.6" y2="683.6"/><rect x="2827.6" y="667" width="10" height="17" stroke-width="1.2"/></g>
<circle cx="2804.5" cy="754.2" r="3.2" fill="#5c6f96" filter="url(#bl)"/>
<circle cx="2828.5" cy="745.2" r="3.2" fill="#5c6f96" filter="url(#bl)"/>
<circle cx="2857.6" cy="752.1" r="3.2" fill="#5c6f96" filter="url(#bl)"/>
<circle cx="2837.5" cy="762.3" r="3.2" fill="#5c6f96" filter="url(#bl)"/>
<circle cx="2828.5" cy="776.1" r="3.2" fill="#5c6f96" filter="url(#bl)"/>
<circle cx="2806.6" cy="786.3" r="3.2" fill="#5c6f96" filter="url(#bl)"/>
<circle cx="2855.5" cy="783.3" r="3.2" fill="#5c6f96" filter="url(#bl)"/>
<circle cx="2835.1" cy="797.7" r="3.2" fill="#5c6f96" filter="url(#bl)"/>
<polygon points="2805,872.8 2857.6,878.8 2820,889.5" fill="#9a9a9a" filter="url(#bl)"/><line x1="2826" y1="879" x2="2830.5" y2="848" stroke="#0a0af5" stroke-width="3.4"/><polygon points="2825.5,851 2832.5,836.5 2835.5,852.5" fill="#0a0af5"/>
<g fill="#6d6d6d"><circle cx="2838" cy="948.5" r="18.8"/><polygon points="2822.5,959 2846,966.5 2828,979 2816,972"/><g stroke="#6d6d6d" stroke-width="3.2"><line x1="2813" y1="971.5" x2="2825" y2="981"/><line x1="2810" y1="976" x2="2821" y2="984.5"/><line x1="2808" y1="980.5" x2="2816" y2="986.5"/></g></g><path d="M2826 944 Q2829 934 2840 934" fill="none" stroke="#b4b4b4" stroke-width="2.6" stroke-linecap="round"/>
<g filter="url(#bl)"><polygon points="2801.5,1044 2829,1038 2843,1040.5 2817,1048.5" fill="#c9c9c9"/><polygon points="2801.5,1044 2817,1048.5 2819,1087 2805,1081.5" fill="#b4b4b4"/></g><polygon points="2817,1048.5 2842,1041.5 2841,1078 2819,1087" fill="#b01a1a" opacity=".82"/><polygon points="2817,1048.5 2829,1055 2830,1082 2819,1087" fill="#7a1414" opacity=".6"/><g fill="none" stroke="#3a3a3a" stroke-width="1.3"><polyline points="2817,1048.5 2838.7,1055 2861.2,1044 2843,1040.5"/><polyline points="2838.7,1055 2837.5,1096.5 2856.7,1079 2861.2,1044"/><polyline points="2819,1087 2837.5,1096.5"/><polyline points="2818.6,1087.6 2841,1074 2856.7,1080"/><line x1="2841" y1="1074" x2="2842.6" y2="1040"/></g>
<path d="M2861.8,1176.3 L2861.8,1183.7 L2855.1,1184.4 L2854.1,1188.3 L2859.5,1192.2 L2855.8,1198.6 L2849.7,1195.9 L2846.9,1198.7 L2849.6,1204.8 L2843.2,1208.5 L2839.3,1203.1 L2835.4,1204.1 L2834.7,1210.8 L2827.3,1210.8 L2826.6,1204.1 L2822.7,1203.1 L2818.8,1208.5 L2812.4,1204.8 L2815.1,1198.7 L2812.3,1195.9 L2806.2,1198.6 L2802.5,1192.2 L2807.9,1188.3 L2806.9,1184.4 L2800.2,1183.7 L2800.2,1176.3 L2806.9,1175.6 L2807.9,1171.7 L2802.5,1167.8 L2806.2,1161.4 L2812.3,1164.1 L2815.1,1161.3 L2812.4,1155.2 L2818.8,1151.5 L2822.7,1156.9 L2826.6,1155.9 L2827.3,1149.2 L2834.7,1149.2 L2835.4,1155.9 L2839.3,1156.9 L2843.2,1151.5 L2849.6,1155.2 L2846.9,1161.3 L2849.7,1164.1 L2855.8,1161.4 L2859.5,1167.8 L2854.1,1171.7 L2855.1,1175.6 Z M2814.0 1180.0 a17 17 0 1 0 34 0 a17 17 0 1 0 -34 0Z" fill="#6b6b6b" fill-rule="evenodd" filter="url(#bl)"/>
<g filter="url(#bl)"><polygon points="2802,1247 2855,1249 2861,1252 2861,1259 2856,1262 2820,1260 2802,1255" fill="#cfcfcf"/><polygon points="2802,1253 2820,1258 2820,1290 2803,1285" fill="#c2c2c2"/><polygon points="2820,1260 2826,1262 2826,1286 2820,1290" fill="#8d8d8d"/><polygon points="2856,1262 2861,1252 2861,1259" fill="#9a9a9a"/><rect x="2831" y="1262" width="6" height="31" fill="#8fb0cc"/><rect x="2837" y="1262" width="4" height="32" fill="#6f8fa8"/><rect x="2845" y="1262" width="6" height="35" fill="#8fb0cc"/><rect x="2851" y="1262" width="4" height="36" fill="#6f8fa8"/></g>
</svg>

<!-- ===== Cross Section View window ===== -->
<div class="win" style="left:1838px;top:88px;width:882px;height:452px">
  <div class="wtitle"><span class="t" style="left:0;right:0;top:5px">Cross Section View</span>
    <div class="tl r" style="left:12px;top:5px;width:22px;height:22px"></div>
    <div class="tl n" style="left:48px;top:5px;width:22px;height:22px"></div>
    <div class="tl g" style="left:84px;top:5px;width:22px;height:22px"></div>
  </div>
</div>
<div class="chk" style="left:1882px;top:166px"><svg width="28" height="28" viewBox="0 0 28 28"><path d="M7.5 14.5 L12 21 L20.5 7" fill="none" stroke="#fff" stroke-width="2.8" stroke-linecap="round" stroke-linejoin="round"/></svg></div>
<div class="t" style="left:1918px;top:167px;font-size:27.5px">Enable Cross Section</div>
<div class="chk" style="left:2284px;top:166px"><svg width="28" height="28" viewBox="0 0 28 28"><path d="M7.5 14.5 L12 21 L20.5 7" fill="none" stroke="#fff" stroke-width="2.8" stroke-linecap="round" stroke-linejoin="round"/></svg></div>
<div class="t" style="left:2320px;top:167px;font-size:27.5px">Reverse Section View</div>
<div class="t" style="left:1892px;top:221px;font-size:23.8px">Positioning</div>
<div class="group" style="left:1878px;top:248px;width:802px;height:252px;background:#e3e3e3"></div>

<div class="radio" style="left:1906px;top:290px"></div>
<div class="t" style="left:1946px;top:290px;font-size:27.5px">X-Axis</div>
<div class="track" style="left:2052px;top:298px;width:300px"></div>
<div class="knob" style="left:2186px;top:286px"></div>
<div class="focus" style="left:2405px;top:275px;width:181px;height:54px"></div>
<div class="field" style="left:2411px;top:281px;width:136px;height:42px"><span class="t" style="left:4px;top:5px">127,50</span></div>
<div class="step" style="left:2556px;top:283px;width:22px;height:41px"></div>
<div class="t" style="left:2602px;top:290px;font-size:27.5px">mm</div>

<div class="radio on" style="left:1906px;top:362px"></div>
<div class="t" style="left:1946px;top:362px;font-size:27.5px">Y-Axis</div>
<div class="track" style="left:2052px;top:370px;width:300px"></div>
<div class="knob" style="left:2170px;top:358px"></div>
<div class="field" style="left:2411px;top:353px;width:136px;height:42px"><span class="t" style="left:3px;top:5px">90,08</span></div>
<div class="step" style="left:2556px;top:355px;width:22px;height:41px"></div>
<div class="t" style="left:2602px;top:362px;font-size:27.5px">mm</div>

<div class="radio" style="left:1906px;top:434px"></div>
<div class="t" style="left:1946px;top:434px;font-size:27.5px">Z-Axis</div>
<div class="track" style="left:2052px;top:442px;width:300px"></div>
<div class="knob" style="left:2110px;top:430px"></div>
<div class="field" style="left:2411px;top:425px;width:136px;height:42px"><span class="t" style="left:3px;top:5px">48,07</span></div>
<div class="step" style="left:2556px;top:427px;width:22px;height:41px"></div>
<div class="t" style="left:2602px;top:434px;font-size:27.5px">mm</div>

<!-- ===== Support Generation window ===== -->
<div class="win" style="left:2002px;top:601px;width:716px;height:826px">
  <div class="wtitle"><span class="t" style="left:0;right:0;top:5px">Support Generation</span>
    <div class="tl r" style="left:12px;top:5px;width:22px;height:22px"></div>
    <div class="tl n" style="left:48px;top:5px;width:22px;height:22px"></div>
    <div class="tl g" style="left:84px;top:5px;width:22px;height:22px"></div>
  </div>
</div>
<div class="t" style="left:2056px;top:651px;font-size:23.8px">Gridded Placement</div>
<div class="group" style="left:2042px;top:679px;width:636px;height:244px;background:#e3e3e3"></div>
<div class="t" style="left:2072px;top:719px;font-size:27.5px">Support Pillar Resolution</div>
<div class="focus" style="left:2392px;top:707px;width:169px;height:53px"></div>
<div class="field" style="left:2397px;top:712px;width:126px;height:42px"><span class="t" style="left:2px;top:5px">3,00</span><span class="abs" style="left:17px;top:4px;width:2px;height:30px;background:#000"></span></div>
<div class="step" style="left:2532px;top:714px;width:22px;height:40px"></div>
<div class="t" style="left:2578px;top:720px;font-size:27.5px">mm</div>
<div class="t" style="left:2072px;top:787px;font-size:27.5px">Max Overhang Angle</div>
<div class="field" style="left:2397px;top:780px;width:126px;height:42px"><span class="t" style="left:2px;top:5px">45</span></div>
<div class="step" style="left:2532px;top:782px;width:22px;height:40px"></div>
<div class="t" style="left:2578px;top:788px;font-size:27.5px">deg</div>
<div class="mbtn" style="left:2074px;top:855px;width:572px;height:38px;line-height:39px">Apply based on overhang angle</div>

<div class="t" style="left:2056px;top:934px;font-size:23.8px">Manual Placement</div>
<div class="group" style="left:2042px;top:961px;width:636px;height:167px;background:#e3e3e3"></div>
<div class="mbtn" style="left:2074px;top:992px;width:572px;height:38px;line-height:39px">Add new support structures</div>
<div class="mbtn blue" style="left:2074px;top:1060px;width:572px;height:39px;line-height:40px">Remove existing supports</div>

<div class="t" style="left:2056px;top:1140px;font-size:23.8px">Save Support Structures</div>
<div class="group" style="left:2042px;top:1167px;width:636px;height:124px;background:#e3e3e3"></div>
<div class="mbtn" style="left:2086px;top:1207px;width:258px;height:38px;line-height:39px">Import Supports</div>
<div class="mbtn" style="left:2376px;top:1207px;width:258px;height:38px;line-height:39px">Export Supports</div>
<div class="mbtn" style="left:2056px;top:1333px;width:326px;height:38px;line-height:39px">Clear Manual Support</div>
<div class="mbtn" style="left:2542px;top:1333px;width:122px;height:38px;line-height:39px">Done</div>

<!-- ===== status bar ===== -->
<div id="status"><div class="t" style="left:7px;top:15px;font-size:27.8px">Successfully parsed model with 3216 triangles</div></div>
</body>
</html>
